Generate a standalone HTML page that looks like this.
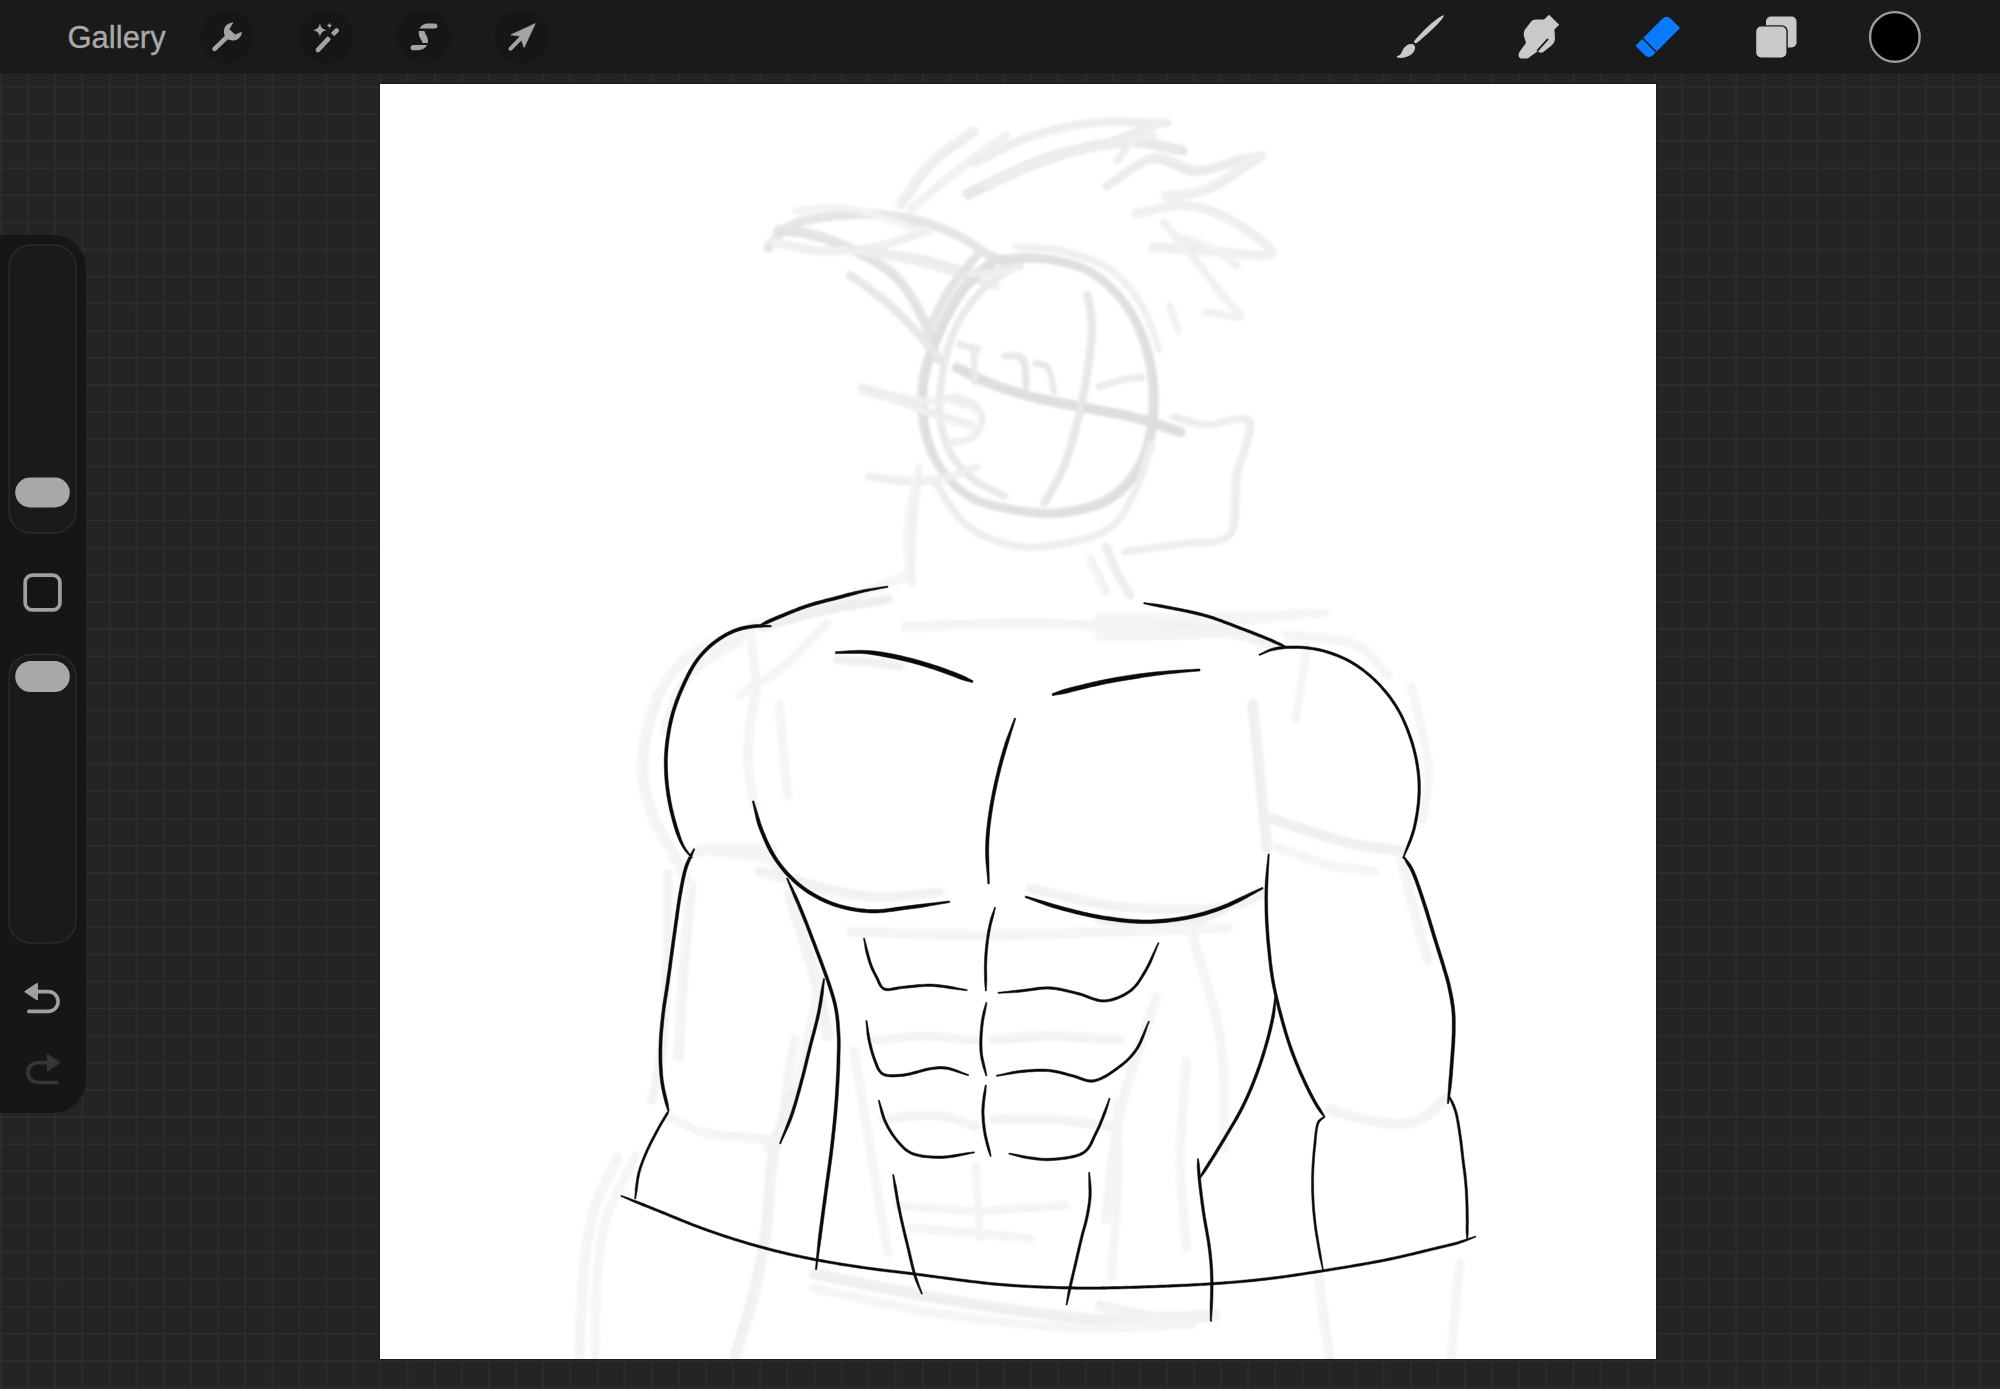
<!DOCTYPE html>
<html><head><meta charset="utf-8">
<style>
html,body{margin:0;padding:0;width:2000px;height:1389px;overflow:hidden;background:#242424;}
svg{position:absolute;left:0;top:0;display:block;}
.t{position:absolute;left:67.5px;top:19.6px;-webkit-text-stroke:0.35px #a9a9a9;font-family:"Liberation Sans",sans-serif;font-size:31px;color:#a9a9a9;line-height:36px;}
</style></head><body>
<svg width="2000" height="1389" viewBox="0 0 2000 1389">
<rect x="0" y="0" width="2000" height="1389" fill="#242424"/>
<path d="M1.1 74V1389M28.2 74V1389M55.3 74V1389M82.4 74V1389M109.5 74V1389M136.6 74V1389M163.7 74V1389M190.8 74V1389M217.9 74V1389M245.1 74V1389M272.2 74V1389M299.3 74V1389M326.4 74V1389M353.5 74V1389M380.6 74V1389M407.7 74V1389M434.8 74V1389M461.9 74V1389M489.0 74V1389M516.2 74V1389M543.3 74V1389M570.4 74V1389M597.5 74V1389M624.6 74V1389M651.7 74V1389M678.8 74V1389M705.9 74V1389M733.0 74V1389M760.1 74V1389M787.2 74V1389M814.4 74V1389M841.5 74V1389M868.6 74V1389M895.7 74V1389M922.8 74V1389M949.9 74V1389M977.0 74V1389M1004.1 74V1389M1031.2 74V1389M1058.3 74V1389M1085.5 74V1389M1112.6 74V1389M1139.7 74V1389M1166.8 74V1389M1193.9 74V1389M1221.0 74V1389M1248.1 74V1389M1275.2 74V1389M1302.3 74V1389M1329.5 74V1389M1356.6 74V1389M1383.7 74V1389M1410.8 74V1389M1437.9 74V1389M1465.0 74V1389M1492.1 74V1389M1519.2 74V1389M1546.3 74V1389M1573.4 74V1389M1600.6 74V1389M1627.7 74V1389M1654.8 74V1389M1681.9 74V1389M1709.0 74V1389M1736.1 74V1389M1763.2 74V1389M1790.3 74V1389M1817.4 74V1389M1844.5 74V1389M1871.7 74V1389M1898.8 74V1389M1925.9 74V1389M1953.0 74V1389M1980.1 74V1389M0 86.8H2000M0 113.9H2000M0 141.0H2000M0 168.1H2000M0 195.2H2000M0 222.4H2000M0 249.5H2000M0 276.6H2000M0 303.7H2000M0 330.8H2000M0 357.9H2000M0 385.0H2000M0 412.1H2000M0 439.2H2000M0 466.3H2000M0 493.4H2000M0 520.6H2000M0 547.7H2000M0 574.8H2000M0 601.9H2000M0 629.0H2000M0 656.1H2000M0 683.2H2000M0 710.3H2000M0 737.4H2000M0 764.5H2000M0 791.7H2000M0 818.8H2000M0 845.9H2000M0 873.0H2000M0 900.1H2000M0 927.2H2000M0 954.3H2000M0 981.4H2000M0 1008.5H2000M0 1035.7H2000M0 1062.8H2000M0 1089.9H2000M0 1117.0H2000M0 1144.1H2000M0 1171.2H2000M0 1198.3H2000M0 1225.4H2000M0 1252.5H2000M0 1279.6H2000M0 1306.8H2000M0 1333.9H2000M0 1361.0H2000M0 1388.1H2000" stroke="#2d2d2d" stroke-width="1.8" fill="none"/>
<rect x="0" y="0" width="2000" height="73.5" fill="#1a1a1a"/>
<rect x="378.8" y="82.8" width="1278.4" height="1277.4" fill="#1c1c1c"/>
<rect x="380" y="84" width="1276" height="1275" fill="#ffffff"/>
<defs><clipPath id="cv"><rect x="380" y="84" width="1276" height="1275"/></clipPath><filter id="bl" x="-5%" y="-5%" width="110%" height="110%"><feGaussianBlur stdDeviation="1.6"/></filter></defs>
<g clip-path="url(#cv)"><g filter="url(#bl)"><path d="M767.8,248.5 771.9,244.0 775.7,239.2 779.7,234.6 784.1,230.4 789.6,226.7 794.2,224.6 799.3,222.7 804.9,221.0 810.9,219.6 817.2,218.4 823.6,217.4 830.1,216.5 836.5,215.8 842.9,215.3 849.0,214.8 855.3,214.5 861.6,214.4 868.0,214.4 874.4,214.7 880.7,215.1 887.1,215.6 893.3,216.4 899.4,217.2 905.4,218.2 911.6,219.4 917.8,220.9 923.9,222.6 930.0,224.4 935.9,226.4 941.8,228.6 947.5,230.9 953.1,233.4 958.7,236.0 964.3,239.1 969.9,242.5 975.3,246.0 980.6,249.6 985.7,252.9 990.7,255.9 995.5,258.4 1001.8,260.9 1007.7,262.9 1013.4,264.5 1019.3,266.3 1019.3,266.3" stroke="#e1e1e1" stroke-width="8.4" fill="none" stroke-linecap="round" stroke-linejoin="round"/><path d="M767.0,247.0 771.1,242.4 774.9,237.7 778.9,233.1 783.4,228.8 788.8,225.2 793.4,223.0 798.5,221.1 804.1,219.5 810.1,218.1 816.4,216.9 822.8,215.9 829.3,215.0 835.8,214.3 842.1,213.7 848.2,213.3 854.5,213.0 860.8,212.9 867.2,212.9 873.6,213.1 880.0,213.5 886.3,214.1 892.5,214.8 898.7,215.7 904.7,216.7 910.8,217.9 917.0,219.4 923.2,221.0 929.2,222.9 935.1,224.9 941.0,227.1 946.7,229.4 952.3,231.8 958.0,234.5 963.6,237.5 969.1,240.9 974.5,244.5 979.8,248.0 984.9,251.4 989.9,254.4 994.7,256.9 1001.0,259.4 1006.9,261.3 1012.7,263.0 1018.5,264.8 1018.5,264.8" stroke="#e6e6e6" stroke-width="7.2" fill="none" stroke-linecap="round" stroke-linejoin="round"/><path d="M777.7,230.7 784.0,231.3 790.2,231.9 796.4,232.4 802.8,233.3 809.4,234.6 814.9,236.1 820.6,237.7 826.5,239.6 832.4,241.7 838.4,244.0 844.3,246.5 850.1,249.1 855.6,251.8 861.0,254.5 866.4,257.3 871.9,260.3 877.2,263.4 882.4,266.8 887.4,270.3 892.1,274.1 896.5,278.2 900.6,282.6 904.4,287.4 908.1,292.5 911.5,297.8 914.7,303.2 917.6,308.6 920.4,314.0 923.0,319.2 925.6,324.8 928.0,330.7 929.9,336.7 931.7,342.6 933.4,348.5 935.1,354.4 936.1,357.4" stroke="#dfdfdf" stroke-width="8.4" fill="none" stroke-linecap="round" stroke-linejoin="round"/><path d="M778.4,228.8 784.7,229.4 790.9,230.0 797.1,230.6 803.5,231.4 810.1,232.7 815.6,234.2 821.3,235.8 827.2,237.7 833.1,239.8 839.0,242.1 845.0,244.6 850.8,247.2 856.3,249.9 861.7,252.6 867.1,255.4 872.5,258.4 877.9,261.6 883.1,264.9 888.1,268.5 892.8,272.2 897.2,276.3 901.2,280.7 905.1,285.5 908.7,290.6 912.1,295.9 915.3,301.3 918.3,306.7 921.1,312.1 923.7,317.3 926.3,322.9 928.6,328.9 930.6,334.8 932.4,340.7 934.1,346.6 935.8,352.5 936.8,355.5" stroke="#e4e4e4" stroke-width="7.2" fill="none" stroke-linecap="round" stroke-linejoin="round"/><path d="M773.8,242.5 779.7,243.6 785.5,244.8 791.4,246.0 797.3,247.2 803.2,248.3 809.1,249.3 815.1,250.0 821.3,250.5 827.3,250.7 833.3,250.7 839.5,250.6 845.8,250.3 852.0,249.8 858.3,249.2 864.5,248.5 870.7,247.6 876.7,246.5 882.9,245.2 889.0,243.6 895.1,241.8 901.1,239.8 907.1,237.8 913.1,235.7 919.1,233.6 925.2,231.6 928.2,230.7" stroke="#ebebeb" stroke-width="8.4" fill="none" stroke-linecap="round" stroke-linejoin="round"/><path d="M773.9,242.0 779.8,243.0 785.7,244.2 791.6,245.4 797.4,246.6 803.3,247.7 809.3,248.7 815.3,249.4 821.4,249.9 827.4,250.1 833.5,250.1 839.7,250.0 845.9,249.7 852.2,249.2 858.5,248.6 864.7,247.9 870.8,247.0 876.9,245.9 883.1,244.6 889.2,243.0 895.3,241.2 901.3,239.2 907.3,237.2 913.3,235.1 919.3,233.0 925.3,231.0 928.3,230.1" stroke="#f0f0f0" stroke-width="7.2" fill="none" stroke-linecap="round" stroke-linejoin="round"/><path d="M797.5,210.9 803.6,210.1 809.5,209.2 815.5,208.3 821.5,207.5 827.7,206.9 833.9,206.8 840.0,207.1 846.0,207.9 852.2,209.0 858.5,210.4 864.9,212.0 871.1,213.6 877.3,215.4 883.1,217.1 888.6,218.8 894.9,220.8 900.7,223.0 906.3,225.2 911.9,227.4 917.4,229.6 920.3,230.7" stroke="#eeeeee" stroke-width="7.0" fill="none" stroke-linecap="round" stroke-linejoin="round"/><path d="M795.6,210.9 801.6,210.2 807.6,209.3 813.6,208.3 819.6,207.5 825.7,207.0 832.0,206.8 838.1,207.2 844.0,207.9 850.3,209.0 856.6,210.4 862.9,212.0 869.2,213.7 875.3,215.4 881.2,217.2 886.6,218.8 892.9,220.9 898.8,223.0 904.4,225.2 909.9,227.4 915.5,229.6 918.3,230.7" stroke="#f3f3f3" stroke-width="6.0" fill="none" stroke-linecap="round" stroke-linejoin="round"/><path d="M849.0,250.5 855.0,251.4 861.0,252.2 867.0,253.0 873.0,253.8 879.1,254.7 885.1,255.6 891.2,256.6 897.4,257.8 903.4,259.0 909.3,260.4 915.4,261.8 921.6,263.4 927.8,265.0 934.0,266.7 940.1,268.4 946.0,270.1 951.8,271.8 957.2,273.4 963.2,275.2 969.4,277.2 975.4,279.2 981.1,281.2 986.8,283.1 992.6,285.1 995.5,286.1" stroke="#e9e9e9" stroke-width="7.0" fill="none" stroke-linecap="round" stroke-linejoin="round"/><path d="M847.0,250.2 853.0,251.1 859.0,251.9 865.0,252.7 871.0,253.5 877.0,254.4 883.1,255.3 889.2,256.3 895.3,257.5 901.3,258.7 907.3,260.1 913.4,261.5 919.6,263.1 925.8,264.8 932.0,266.4 938.0,268.1 944.0,269.8 949.7,271.5 955.2,273.1 961.1,274.9 967.4,276.9 973.3,278.9 979.1,280.9 984.8,282.9 990.5,284.8 993.5,285.8" stroke="#eeeeee" stroke-width="6.0" fill="none" stroke-linecap="round" stroke-linejoin="round"/><path d="M901.0,205.0 904.6,200.0 908.2,194.9 911.7,189.8 915.2,184.6 918.8,179.5 922.5,174.6 926.3,169.8 930.4,165.2 934.7,160.9 939.3,156.8 944.1,153.0 949.0,149.3 954.1,145.7 959.3,142.2 964.4,138.7 969.5,135.1 974.5,131.5 974.5,131.5" stroke="#ebebeb" stroke-width="8.4" fill="none" stroke-linecap="round" stroke-linejoin="round"/><path d="M899.1,203.2 902.7,198.2 906.3,193.1 909.8,188.0 913.3,182.8 916.9,177.7 920.6,172.8 924.4,168.0 928.5,163.4 932.8,159.1 937.4,155.0 942.2,151.2 947.2,147.5 952.2,143.9 957.4,140.4 962.5,136.9 967.6,133.3 972.6,129.7 972.6,129.7" stroke="#f0f0f0" stroke-width="7.2" fill="none" stroke-linecap="round" stroke-linejoin="round"/><path d="M911.5,209.2 916.1,205.2 920.7,201.3 925.3,197.3 929.8,193.3 934.4,189.3 939.0,185.3 943.7,181.4 948.6,177.4 953.5,173.5 958.2,169.9 963.0,166.2 968.0,162.6 973.0,159.0 978.0,155.4 983.1,151.9 988.2,148.3 993.3,144.7 998.4,141.1 1003.5,137.5 1006.0,135.7" stroke="#ededed" stroke-width="8.4" fill="none" stroke-linecap="round" stroke-linejoin="round"/><path d="M911.2,210.6 915.8,206.7 920.4,202.7 924.9,198.7 929.5,194.7 934.1,190.8 938.7,186.8 943.4,182.8 948.2,178.9 953.2,174.9 957.9,171.3 962.7,167.7 967.6,164.1 972.6,160.5 977.7,156.9 982.8,153.3 987.9,149.7 993.0,146.1 998.1,142.5 1003.2,138.9 1005.7,137.1" stroke="#f2f2f2" stroke-width="7.2" fill="none" stroke-linecap="round" stroke-linejoin="round"/><path d="M968.2,194.5 973.8,191.9 979.5,189.1 985.3,186.4 991.0,183.6 996.7,180.9 1002.4,178.2 1008.1,175.5 1013.6,173.0 1019.1,170.6 1024.4,168.3 1030.2,165.9 1036.2,163.5 1042.1,161.2 1047.8,159.1 1053.5,157.1 1059.5,155.2 1065.7,153.4 1071.7,151.8 1077.3,150.4 1083.2,149.0 1089.2,147.6 1095.4,146.4 1101.6,145.2 1107.9,144.1 1114.1,143.2 1120.2,142.6 1126.2,142.1 1132.0,142.0 1138.2,142.2 1144.2,142.8 1150.2,143.7 1156.1,144.8 1161.9,146.1 1167.7,147.4 1173.6,148.7 1179.4,149.9 1182.4,150.4" stroke="#e3e3e3" stroke-width="9.8" fill="none" stroke-linecap="round" stroke-linejoin="round"/><path d="M966.5,193.3 972.2,190.6 977.9,187.9 983.6,185.2 989.3,182.4 995.1,179.7 1000.8,177.0 1006.4,174.3 1012.0,171.8 1017.4,169.3 1022.7,167.1 1028.5,164.7 1034.6,162.3 1040.4,160.0 1046.1,157.8 1051.9,155.8 1057.8,153.9 1064.1,152.1 1070.1,150.6 1075.7,149.2 1081.5,147.8 1087.6,146.4 1093.7,145.1 1100.0,143.9 1106.2,142.9 1112.5,142.0 1118.6,141.4 1124.6,140.9 1130.3,140.8 1136.5,141.0 1142.6,141.6 1148.5,142.5 1154.4,143.6 1160.3,144.9 1166.1,146.2 1171.9,147.5 1177.8,148.7 1180.7,149.2" stroke="#e8e8e8" stroke-width="8.4" fill="none" stroke-linecap="round" stroke-linejoin="round"/><path d="M985.0,184.0 990.7,181.5 996.4,178.9 1002.1,176.2 1007.8,173.6 1013.5,170.9 1019.2,168.3 1024.9,165.7 1030.7,163.3 1036.4,160.9 1042.2,158.7 1048.0,156.7 1054.0,154.9 1060.1,153.3 1066.3,151.8 1072.5,150.5 1078.7,149.3 1084.9,148.1 1091.0,146.9 1096.9,145.7 1102.7,144.3 1108.3,142.8 1114.1,141.0 1120.0,138.9 1125.7,136.7 1131.2,134.4 1136.7,132.1 1142.1,129.8 1147.5,127.5 1153.0,125.2 1153.0,125.2" stroke="#e9e9e9" stroke-width="8.4" fill="none" stroke-linecap="round" stroke-linejoin="round"/><path d="M985.6,186.0 991.3,183.4 997.0,180.8 1002.7,178.2 1008.4,175.5 1014.1,172.9 1019.8,170.2 1025.5,167.7 1031.2,165.2 1037.0,162.9 1042.8,160.7 1048.6,158.7 1054.5,156.8 1060.7,155.2 1066.8,153.8 1073.1,152.5 1079.3,151.3 1085.4,150.1 1091.5,148.9 1097.5,147.6 1103.3,146.3 1108.9,144.8 1114.6,143.0 1120.6,140.9 1126.3,138.7 1131.8,136.4 1137.2,134.1 1142.6,131.8 1148.0,129.4 1153.6,127.2 1153.6,127.2" stroke="#eeeeee" stroke-width="7.2" fill="none" stroke-linecap="round" stroke-linejoin="round"/><path d="M974.5,163.0 980.0,160.3 985.4,157.5 990.8,154.7 996.2,151.8 1001.7,149.0 1007.1,146.3 1012.7,143.6 1018.3,141.2 1024.1,138.9 1029.8,136.8 1035.5,134.9 1041.3,133.2 1047.1,131.5 1053.1,129.9 1059.0,128.5 1065.1,127.1 1071.2,125.9 1077.4,124.8 1083.7,123.9 1090.0,123.1 1095.9,122.5 1101.9,122.1 1108.0,121.9 1114.2,121.9 1120.4,121.9 1126.7,122.0 1133.0,122.2 1139.4,122.4 1145.7,122.6 1152.0,122.8 1158.3,123.0 1164.6,123.1 1167.7,123.1" stroke="#e9e9e9" stroke-width="8.4" fill="none" stroke-linecap="round" stroke-linejoin="round"/><path d="M974.8,162.5 980.3,159.8 985.8,157.0 991.2,154.2 996.6,151.4 1002.0,148.6 1007.5,145.8 1013.0,143.2 1018.7,140.7 1024.4,138.4 1030.2,136.4 1035.9,134.5 1041.6,132.7 1047.5,131.0 1053.4,129.5 1059.4,128.0 1065.4,126.7 1071.6,125.5 1077.8,124.4 1084.0,123.4 1090.3,122.6 1096.2,122.1 1102.3,121.7 1108.4,121.5 1114.5,121.4 1120.8,121.4 1127.0,121.6 1133.4,121.7 1139.7,121.9 1146.0,122.2 1152.4,122.4 1158.7,122.5 1164.9,122.6 1168.0,122.6" stroke="#eeeeee" stroke-width="7.2" fill="none" stroke-linecap="round" stroke-linejoin="round"/><path d="M1106.8,186.1 1112.2,182.6 1117.7,178.8 1123.1,174.7 1128.5,170.7 1134.0,167.0 1139.4,163.7 1144.8,161.0 1150.3,159.3 1156.0,158.7 1162.0,159.6 1168.0,161.6 1174.0,164.3 1180.0,167.2 1186.0,169.6 1192.0,171.1 1198.0,171.3 1204.2,170.6 1210.5,169.1 1216.7,167.2 1222.9,165.2 1228.8,163.2 1234.4,161.5 1240.6,160.1 1247.4,158.9 1253.7,157.8 1260.1,156.7 1260.1,156.7" stroke="#e7e7e7" stroke-width="8.4" fill="none" stroke-linecap="round" stroke-linejoin="round"/><path d="M1108.9,184.1 1114.3,180.6 1119.8,176.8 1125.2,172.7 1130.6,168.7 1136.1,165.0 1141.5,161.7 1146.9,159.0 1152.4,157.3 1158.1,156.7 1164.1,157.6 1170.1,159.6 1176.1,162.3 1182.1,165.2 1188.1,167.6 1194.1,169.1 1200.1,169.3 1206.3,168.6 1212.6,167.1 1218.8,165.2 1225.0,163.2 1230.9,161.2 1236.5,159.5 1242.7,158.1 1249.5,156.9 1255.8,155.8 1262.2,154.7 1262.2,154.7" stroke="#ececec" stroke-width="7.2" fill="none" stroke-linecap="round" stroke-linejoin="round"/><path d="M1117.3,160.9 1121.3,155.1 1125.2,149.2 1129.5,144.0 1134.6,140.5 1140.5,138.5 1146.8,137.2 1153.0,135.7 1153.0,135.7" stroke="#ebebeb" stroke-width="7.0" fill="none" stroke-linecap="round" stroke-linejoin="round"/><path d="M1118.9,160.0 1122.9,154.2 1126.8,148.3 1131.1,143.1 1136.2,139.6 1142.1,137.6 1148.4,136.2 1154.6,134.8 1154.6,134.8" stroke="#f0f0f0" stroke-width="6.0" fill="none" stroke-linecap="round" stroke-linejoin="round"/><path d="M1165.6,196.6 1171.7,195.8 1177.8,195.2 1183.9,194.7 1190.0,194.0 1196.1,192.9 1202.4,191.4 1208.0,189.3 1213.2,187.0 1218.4,184.3 1223.6,181.2 1228.9,177.9 1234.2,174.4 1239.5,170.9 1244.8,167.3 1250.1,163.8 1255.4,160.4 1258.0,158.8" stroke="#ebebeb" stroke-width="8.4" fill="none" stroke-linecap="round" stroke-linejoin="round"/><path d="M1164.0,194.9 1170.1,194.1 1176.2,193.5 1182.3,193.0 1188.4,192.3 1194.6,191.3 1200.8,189.7 1206.5,187.6 1211.6,185.3 1216.8,182.6 1222.0,179.5 1227.3,176.2 1232.6,172.8 1237.9,169.2 1243.2,165.6 1248.5,162.1 1253.8,158.7 1256.4,157.1" stroke="#f0f0f0" stroke-width="7.2" fill="none" stroke-linecap="round" stroke-linejoin="round"/><path d="M1136.2,213.4 1142.3,212.2 1148.4,210.8 1154.5,209.3 1160.6,207.8 1166.7,206.5 1172.7,205.5 1178.7,205.0 1184.5,205.0 1190.7,205.6 1196.8,206.6 1202.8,208.1 1208.8,210.0 1214.7,212.2 1220.6,214.7 1226.5,217.6 1232.0,220.6 1238.2,224.3 1244.8,228.5 1251.5,233.0 1257.8,237.6 1263.5,242.0 1268.1,246.0 1271.3,249.6 1272.7,252.3 1272.1,254.1 1269.2,255.1 1264.4,255.5 1258.2,255.3 1250.9,254.7 1243.0,253.9 1234.8,252.9 1226.8,252.1 1219.4,251.4 1213.1,251.0 1207.2,250.7 1201.2,250.3 1195.2,250.0 1189.2,249.5 1183.2,249.1 1177.1,248.7 1171.1,248.3 1165.0,247.8 1159.0,247.4 1153.0,247.0 1153.0,247.0" stroke="#ebebeb" stroke-width="8.4" fill="none" stroke-linecap="round" stroke-linejoin="round"/><path d="M1135.4,214.8 1141.4,213.6 1147.5,212.2 1153.6,210.7 1159.8,209.2 1165.8,207.9 1171.9,206.9 1177.8,206.4 1183.7,206.4 1189.9,207.0 1196.0,208.0 1202.0,209.5 1208.0,211.4 1213.9,213.6 1219.8,216.1 1225.7,219.0 1231.1,222.0 1237.4,225.7 1244.0,229.9 1250.6,234.4 1257.0,238.9 1262.6,243.4 1267.2,247.4 1270.4,250.9 1271.9,253.7 1271.2,255.5 1268.3,256.5 1263.5,256.8 1257.3,256.6 1250.0,256.1 1242.1,255.3 1233.9,254.3 1226.0,253.5 1218.5,252.8 1212.2,252.4 1206.3,252.1 1200.4,251.7 1194.4,251.3 1188.4,250.9 1182.4,250.5 1176.3,250.1 1170.3,249.7 1164.2,249.2 1158.2,248.8 1152.2,248.4 1152.2,248.4" stroke="#f0f0f0" stroke-width="7.2" fill="none" stroke-linecap="round" stroke-linejoin="round"/><path d="M1163.5,221.8 1167.4,226.5 1171.4,231.2 1175.3,235.9 1179.3,240.6 1183.2,245.3 1187.2,250.0 1191.1,254.8 1195.0,259.6 1199.0,264.6 1203.2,269.9 1207.3,275.2 1211.5,280.6 1215.5,285.8 1219.4,290.7 1223.1,295.3 1226.5,299.5 1232.2,305.4 1237.8,310.7 1241.1,314.9 1240.2,317.0 1235.8,317.2 1229.1,316.3 1221.0,314.8 1212.8,313.2 1205.5,312.1 1205.5,312.1" stroke="#ededed" stroke-width="7.0" fill="none" stroke-linecap="round" stroke-linejoin="round"/><path d="M1162.1,222.2 1166.0,226.9 1170.0,231.6 1173.9,236.3 1177.9,241.0 1181.8,245.7 1185.8,250.4 1189.7,255.2 1193.6,260.0 1197.6,265.0 1201.8,270.2 1205.9,275.6 1210.1,280.9 1214.1,286.1 1218.0,291.1 1221.7,295.7 1225.1,299.9 1230.8,305.7 1236.4,311.1 1239.7,315.3 1238.8,317.3 1234.4,317.6 1227.7,316.7 1219.6,315.2 1211.4,313.6 1204.1,312.5 1204.1,312.5" stroke="#f2f2f2" stroke-width="6.0" fill="none" stroke-linecap="round" stroke-linejoin="round"/><path d="M1169.8,305.8 1171.9,312.1 1174.0,318.4 1176.1,324.7 1178.2,331.0 1178.2,331.0" stroke="#ededed" stroke-width="7.0" fill="none" stroke-linecap="round" stroke-linejoin="round"/><path d="M1170.4,305.2 1172.5,311.5 1174.6,317.8 1176.7,324.1 1178.8,330.4 1178.8,330.4" stroke="#f2f2f2" stroke-width="6.0" fill="none" stroke-linecap="round" stroke-linejoin="round"/><path d="M1184.5,238.6 1190.3,240.8 1196.3,243.0 1202.2,245.2 1208.0,247.4 1213.4,249.9 1218.9,252.9 1224.3,256.5 1229.4,260.2 1234.4,264.0 1237.0,265.9" stroke="#eeeeee" stroke-width="7.0" fill="none" stroke-linecap="round" stroke-linejoin="round"/><path d="M1184.7,236.7 1190.5,238.9 1196.5,241.1 1202.4,243.2 1208.2,245.5 1213.6,248.0 1219.1,250.9 1224.5,254.5 1229.6,258.3 1234.6,262.1 1237.2,264.0" stroke="#f3f3f3" stroke-width="6.0" fill="none" stroke-linecap="round" stroke-linejoin="round"/><path d="M997.3,258.5 992.8,262.5 988.2,266.4 983.6,270.3 979.0,274.2 974.5,278.2 970.1,282.4 966.0,287.0 962.3,291.7 958.9,296.5 955.7,301.5 952.6,306.7 949.6,312.1 946.7,317.6 944.0,323.2 941.5,328.7 939.1,334.2 936.7,339.8 934.3,345.7 932.1,351.6 930.0,357.5 928.2,363.5 926.5,369.4 925.1,375.4 924.1,381.4 923.3,387.6 922.9,394.0 922.7,400.5 922.9,407.0 923.3,413.5 924.0,419.8 924.9,426.0 926.0,431.9 927.6,438.4 929.4,444.6 931.6,450.7 934.1,456.5 937.0,462.2 940.3,467.6 943.8,472.6 947.6,477.4 951.7,482.1 956.2,486.6 961.0,490.7 966.1,494.4 971.3,497.5 976.7,500.1 982.4,502.3 988.4,504.2 994.5,505.9 1000.8,507.4 1007.1,508.7 1013.3,509.8 1019.4,510.9 1025.8,511.8 1032.1,512.6 1038.5,513.2 1044.8,513.5 1051.2,513.5 1057.5,513.3 1063.8,512.7 1069.9,511.9 1076.1,510.9 1082.4,509.6 1088.6,508.1 1094.7,506.2 1100.6,504.0 1106.2,501.4 1111.3,498.5 1116.4,494.9 1121.2,490.9 1125.7,486.4 1130.0,481.6 1133.9,476.5 1137.5,471.2 1140.8,465.7 1143.5,460.2 1145.7,454.7 1147.7,448.9 1149.3,442.9 1150.7,436.7 1151.9,430.4 1152.8,424.0 1153.5,417.6 1153.9,411.3 1154.2,405.1 1154.3,398.9 1154.1,392.5 1153.7,386.1 1153.1,379.7 1152.3,373.3 1151.3,367.0 1150.0,360.7 1148.6,354.7 1147.0,348.8 1145.0,342.7 1142.8,336.7 1140.4,330.8 1137.7,325.0 1134.9,319.3 1131.8,313.9 1128.5,308.6 1125.0,303.7 1121.2,298.8 1117.1,293.9 1112.7,289.3 1108.1,284.9 1103.2,280.7 1098.2,276.9 1093.0,273.4 1087.6,270.4 1082.1,267.9 1076.4,265.7 1070.3,263.9 1064.1,262.3 1057.9,261.0 1051.8,260.0 1045.8,259.2 1040.1,258.5 1033.3,258.1 1026.8,258.2 1020.4,258.6 1014.0,259.1 1007.7,259.6 1004.4,259.7" stroke="#dbdbdb" stroke-width="8.4" fill="none" stroke-linecap="round" stroke-linejoin="round"/><path d="M995.4,257.2 990.9,261.2 986.3,265.1 981.6,269.0 977.0,272.9 972.5,276.9 968.2,281.2 964.1,285.7 960.4,290.4 957.0,295.2 953.7,300.2 950.6,305.4 947.6,310.8 944.8,316.3 942.1,321.9 939.5,327.4 937.1,332.9 934.8,338.5 932.4,344.4 930.2,350.3 928.1,356.2 926.2,362.2 924.6,368.1 923.2,374.1 922.1,380.1 921.4,386.3 920.9,392.7 920.8,399.2 920.9,405.7 921.3,412.2 922.0,418.5 922.9,424.7 924.1,430.7 925.6,437.1 927.5,443.3 929.7,449.4 932.2,455.2 935.1,460.9 938.3,466.3 941.8,471.3 945.6,476.1 949.8,480.8 954.3,485.3 959.1,489.4 964.2,493.1 969.4,496.2 974.7,498.8 980.4,501.0 986.4,502.9 992.6,504.6 998.9,506.1 1005.2,507.4 1011.3,508.5 1017.5,509.6 1023.8,510.5 1030.2,511.3 1036.5,511.9 1042.9,512.2 1049.3,512.3 1055.6,512.0 1061.9,511.4 1068.0,510.6 1074.2,509.6 1080.5,508.3 1086.7,506.8 1092.8,504.9 1098.7,502.7 1104.2,500.2 1109.4,497.2 1114.4,493.6 1119.2,489.6 1123.8,485.1 1128.0,480.3 1132.0,475.2 1135.6,469.9 1138.8,464.4 1141.5,458.9 1143.8,453.4 1145.7,447.6 1147.4,441.6 1148.8,435.4 1149.9,429.1 1150.8,422.7 1151.5,416.3 1152.0,410.0 1152.3,403.8 1152.3,397.6 1152.2,391.2 1151.8,384.8 1151.2,378.4 1150.4,372.0 1149.3,365.7 1148.1,359.4 1146.7,353.4 1145.0,347.5 1143.1,341.4 1140.9,335.4 1138.5,329.5 1135.8,323.7 1132.9,318.1 1129.8,312.6 1126.6,307.4 1123.1,302.4 1119.3,297.5 1115.2,292.6 1110.8,288.0 1106.1,283.6 1101.3,279.4 1096.3,275.6 1091.0,272.2 1085.6,269.1 1080.2,266.6 1074.4,264.4 1068.4,262.6 1062.2,261.0 1056.0,259.8 1049.8,258.7 1043.8,257.9 1038.1,257.2 1031.4,256.8 1024.8,256.9 1018.4,257.3 1012.1,257.8 1005.7,258.3 1002.5,258.4" stroke="#e0e0e0" stroke-width="7.2" fill="none" stroke-linecap="round" stroke-linejoin="round"/><path d="M1016.3,265.6 1011.1,269.2 1005.8,272.6 1000.5,276.0 995.3,279.5 990.2,283.2 985.3,287.2 980.9,291.6 976.7,296.1 972.6,300.9 968.7,306.0 965.0,311.2 961.5,316.6 958.4,322.2 955.6,327.7 953.2,333.3 951.0,339.1 949.1,345.1 947.3,351.1 945.8,357.3 944.4,363.4 943.2,369.5 942.1,375.7 941.2,382.1 940.4,388.6 939.8,395.1 939.5,401.6 939.4,407.9 939.7,414.1 940.3,420.1 941.4,426.5 942.8,432.8 944.7,438.9 946.8,444.8 949.3,450.4 952.2,455.7 955.7,461.1 959.6,466.2 963.9,470.9 968.6,475.3 973.5,479.5 978.6,483.0 984.1,486.1 989.9,489.0 995.8,491.8 1001.6,494.6 1004.4,496.1" stroke="#e5e5e5" stroke-width="7.0" fill="none" stroke-linecap="round" stroke-linejoin="round"/><path d="M1017.1,265.3 1011.9,268.9 1006.6,272.3 1001.3,275.7 996.1,279.2 991.0,282.9 986.1,286.9 981.7,291.3 977.4,295.8 973.4,300.6 969.5,305.6 965.8,310.9 962.3,316.3 959.2,321.9 956.4,327.4 954.0,333.0 951.8,338.8 949.9,344.8 948.1,350.8 946.6,357.0 945.2,363.1 944.0,369.2 942.9,375.4 942.0,381.8 941.2,388.3 940.6,394.8 940.3,401.3 940.2,407.6 940.5,413.8 941.1,419.7 942.2,426.2 943.6,432.5 945.5,438.6 947.6,444.5 950.1,450.1 953.0,455.4 956.5,460.8 960.4,465.9 964.7,470.6 969.4,475.0 974.3,479.1 979.4,482.7 984.9,485.8 990.7,488.7 996.6,491.5 1002.4,494.3 1005.2,495.8" stroke="#eaeaea" stroke-width="6.0" fill="none" stroke-linecap="round" stroke-linejoin="round"/><path d="M933.2,479.5 936.8,484.6 940.4,490.0 943.9,495.4 947.3,500.9 950.9,506.3 954.5,511.5 958.3,516.5 962.3,521.0 966.5,525.1 971.2,528.8 976.3,532.1 981.7,535.0 987.3,537.6 993.0,539.9 998.8,541.9 1004.7,543.5 1010.5,544.9 1016.3,546.0 1022.6,546.8 1028.9,547.2 1035.3,547.1 1041.6,546.8 1048.0,546.2 1054.4,545.3 1060.7,544.2 1066.9,543.0 1073.1,541.7 1079.5,540.2 1085.9,538.6 1092.2,536.6 1098.2,534.3 1103.9,531.7 1109.0,528.7 1113.6,525.0 1117.8,520.8 1121.6,516.0 1124.9,510.9 1128.0,505.4 1130.9,499.8 1133.7,494.2 1136.4,488.6 1138.8,483.0 1141.0,477.2 1143.0,471.2 1145.0,465.1 1146.8,459.0 1148.7,452.9 1150.7,446.8 1151.7,443.8" stroke="#e9e9e9" stroke-width="7.0" fill="none" stroke-linecap="round" stroke-linejoin="round"/><path d="M932.3,479.8 936.0,485.0 939.6,490.3 943.0,495.8 946.5,501.3 950.0,506.7 953.7,511.9 957.4,516.9 961.4,521.4 965.7,525.5 970.4,529.1 975.5,532.4 980.9,535.4 986.5,538.0 992.2,540.3 998.0,542.2 1003.9,543.9 1009.7,545.3 1015.5,546.4 1021.8,547.2 1028.1,547.5 1034.4,547.5 1040.8,547.2 1047.2,546.5 1053.6,545.7 1059.9,544.6 1066.1,543.4 1072.3,542.1 1078.7,540.6 1085.1,538.9 1091.4,537.0 1097.4,534.7 1103.0,532.1 1108.2,529.0 1112.8,525.4 1117.0,521.1 1120.8,516.4 1124.1,511.2 1127.2,505.8 1130.1,500.2 1132.9,494.5 1135.6,489.0 1138.0,483.4 1140.2,477.5 1142.2,471.6 1144.1,465.5 1146.0,459.4 1147.9,453.2 1149.9,447.2 1150.9,444.2" stroke="#eeeeee" stroke-width="6.0" fill="none" stroke-linecap="round" stroke-linejoin="round"/><path d="M1016.3,246.6 1022.7,247.2 1029.0,247.5 1035.4,247.9 1041.8,248.3 1048.1,248.8 1054.4,249.6 1060.7,250.7 1066.7,252.1 1072.5,253.6 1078.4,255.4 1084.3,257.3 1090.1,259.4 1095.8,261.7 1101.3,264.3 1106.5,267.2 1111.3,270.4 1116.3,274.2 1121.0,278.5 1125.4,283.0 1129.6,287.9 1133.5,292.9 1137.2,298.1 1140.6,303.4 1143.7,308.7 1146.4,314.1 1148.8,319.7 1150.9,325.5 1152.9,331.3 1154.8,337.2 1156.7,343.0 1158.9,348.8 1158.9,348.8" stroke="#ebebeb" stroke-width="7.0" fill="none" stroke-linecap="round" stroke-linejoin="round"/><path d="M1016.1,245.7 1022.4,246.3 1028.8,246.7 1035.2,247.0 1041.5,247.4 1047.9,247.9 1054.2,248.7 1060.5,249.8 1066.5,251.2 1072.3,252.8 1078.2,254.5 1084.1,256.4 1089.9,258.5 1095.6,260.9 1101.1,263.5 1106.3,266.3 1111.1,269.5 1116.1,273.3 1120.8,277.6 1125.2,282.2 1129.4,287.0 1133.3,292.1 1137.0,297.2 1140.4,302.5 1143.5,307.8 1146.2,313.2 1148.6,318.8 1150.7,324.6 1152.7,330.4 1154.6,336.3 1156.5,342.1 1158.6,347.9 1158.6,347.9" stroke="#f0f0f0" stroke-width="6.0" fill="none" stroke-linecap="round" stroke-linejoin="round"/><path d="M956.9,367.8 962.3,370.4 967.7,373.0 973.0,375.7 978.4,378.3 983.9,380.8 989.6,383.3 995.3,385.5 1001.0,387.5 1006.8,389.4 1012.8,391.2 1018.8,393.0 1024.9,394.7 1031.0,396.4 1037.1,397.9 1043.0,399.4 1048.9,400.7 1054.9,402.0 1060.8,403.2 1066.8,404.3 1072.7,405.4 1078.7,406.5 1084.6,407.6 1090.6,408.8 1096.5,409.9 1102.5,411.0 1108.5,412.1 1114.4,413.2 1120.4,414.4 1126.3,415.6 1132.2,417.0 1138.1,418.5 1144.2,420.2 1150.2,422.1 1156.2,424.0 1162.1,426.0 1168.1,428.0 1174.0,430.0 1180.0,431.9 1180.0,431.9" stroke="#d9d9d9" stroke-width="9.8" fill="none" stroke-linecap="round" stroke-linejoin="round"/><path d="M958.2,368.7 963.6,371.3 969.0,373.9 974.3,376.6 979.7,379.2 985.2,381.7 990.9,384.1 996.6,386.3 1002.3,388.3 1008.1,390.3 1014.1,392.1 1020.1,393.9 1026.2,395.6 1032.3,397.2 1038.4,398.8 1044.3,400.3 1050.2,401.6 1056.2,402.9 1062.1,404.0 1068.1,405.1 1074.0,406.2 1080.0,407.3 1085.9,408.5 1091.8,409.6 1097.8,410.8 1103.8,411.9 1109.8,413.0 1115.7,414.1 1121.7,415.2 1127.6,416.5 1133.5,417.8 1139.4,419.4 1145.5,421.1 1151.5,423.0 1157.5,424.9 1163.4,426.9 1169.4,428.9 1175.3,430.9 1181.3,432.8 1181.3,432.8" stroke="#dedede" stroke-width="8.4" fill="none" stroke-linecap="round" stroke-linejoin="round"/><path d="M1099.5,386.8 1105.5,384.9 1111.5,382.9 1117.4,381.1 1123.2,379.7 1129.7,378.6 1136.0,378.0 1142.2,377.3 1142.2,377.3" stroke="#e7e7e7" stroke-width="7.0" fill="none" stroke-linecap="round" stroke-linejoin="round"/><path d="M1098.3,387.1 1104.3,385.2 1110.4,383.3 1116.3,381.5 1122.1,380.0 1128.6,378.9 1134.8,378.3 1141.1,377.6 1141.1,377.6" stroke="#ececec" stroke-width="6.0" fill="none" stroke-linecap="round" stroke-linejoin="round"/><path d="M959.3,344.0 965.6,345.6 972.0,347.2 978.3,348.8 978.3,348.8" stroke="#e5e5e5" stroke-width="5.6" fill="none" stroke-linecap="round" stroke-linejoin="round"/><path d="M959.4,345.7 965.7,347.3 972.1,348.9 978.4,350.4 978.4,350.4" stroke="#eaeaea" stroke-width="4.8" fill="none" stroke-linecap="round" stroke-linejoin="round"/><path d="M973.5,348.8 973.8,354.8 974.0,360.9 974.2,366.9 974.4,373.0 974.6,379.0 974.7,382.1" stroke="#e5e5e5" stroke-width="5.6" fill="none" stroke-linecap="round" stroke-linejoin="round"/><path d="M974.6,347.9 974.8,353.9 975.0,360.0 975.2,366.0 975.4,372.0 975.6,378.1 975.7,381.1" stroke="#eaeaea" stroke-width="4.8" fill="none" stroke-linecap="round" stroke-linejoin="round"/><path d="M1004.4,355.9 1011.6,356.1 1018.5,356.7 1022.4,360.2 1024.1,365.7 1024.8,372.6 1025.1,379.9 1025.8,386.8 1025.8,386.8" stroke="#e3e3e3" stroke-width="5.6" fill="none" stroke-linecap="round" stroke-linejoin="round"/><path d="M1006.5,354.2 1013.7,354.4 1020.6,355.1 1024.5,358.5 1026.2,364.0 1026.9,370.9 1027.2,378.2 1027.9,385.1 1027.9,385.1" stroke="#e8e8e8" stroke-width="4.8" fill="none" stroke-linecap="round" stroke-linejoin="round"/><path d="M1035.3,363.0 1041.6,364.1 1047.2,366.6 1049.8,371.2 1051.5,377.6 1052.8,384.8 1054.3,391.6 1054.3,391.6" stroke="#e3e3e3" stroke-width="5.6" fill="none" stroke-linecap="round" stroke-linejoin="round"/><path d="M1035.0,364.2 1041.2,365.3 1046.8,367.7 1049.4,372.3 1051.1,378.8 1052.5,385.9 1054.0,392.7 1054.0,392.7" stroke="#e8e8e8" stroke-width="4.8" fill="none" stroke-linecap="round" stroke-linejoin="round"/><path d="M1087.6,294.1 1088.7,300.2 1089.9,306.2 1091.0,312.2 1091.9,318.4 1092.3,325.0 1092.3,330.9 1092.0,337.0 1091.5,343.3 1090.8,349.8 1089.9,356.4 1089.0,362.9 1088.1,369.4 1087.1,375.5 1086.2,381.5 1085.1,387.4 1084.0,393.4 1082.8,399.3 1081.5,405.3 1080.2,411.2 1078.8,417.1 1077.3,423.1 1075.8,429.1 1074.2,435.2 1072.5,441.3 1070.8,447.4 1069.0,453.4 1067.0,459.2 1064.9,464.8 1062.6,470.5 1059.8,476.3 1056.9,481.8 1053.9,487.2 1050.9,492.5 1047.8,497.8 1044.8,503.2 1044.8,503.2" stroke="#e3e3e3" stroke-width="7.0" fill="none" stroke-linecap="round" stroke-linejoin="round"/><path d="M1086.0,294.1 1087.1,300.2 1088.3,306.1 1089.5,312.1 1090.3,318.4 1090.8,325.0 1090.8,330.8 1090.5,336.9 1090.0,343.3 1089.3,349.7 1088.4,356.3 1087.5,362.9 1086.5,369.3 1085.6,375.5 1084.6,381.4 1083.6,387.4 1082.5,393.3 1081.3,399.3 1080.0,405.2 1078.7,411.1 1077.3,417.1 1075.8,423.0 1074.3,429.1 1072.7,435.2 1071.0,441.3 1069.3,447.4 1067.4,453.3 1065.5,459.2 1063.4,464.8 1061.0,470.5 1058.3,476.2 1055.4,481.7 1052.4,487.1 1049.3,492.4 1046.3,497.8 1043.3,503.2 1043.3,503.2" stroke="#e8e8e8" stroke-width="6.0" fill="none" stroke-linecap="round" stroke-linejoin="round"/><path d="M952.2,396.3 958.6,398.0 965.2,399.6 971.1,401.8 975.9,405.6 980.2,411.1 982.8,417.2 982.4,422.9 979.1,429.1 974.1,434.9 968.8,439.1 962.4,440.9 955.6,441.2 952.2,441.4" stroke="#ebebeb" stroke-width="5.6" fill="none" stroke-linecap="round" stroke-linejoin="round"/><path d="M950.1,397.0 956.6,398.8 963.2,400.3 969.1,402.6 973.9,406.4 978.2,411.9 980.8,417.9 980.4,423.6 977.1,429.8 972.0,435.6 966.8,439.8 960.4,441.7 953.5,441.9 950.1,442.2" stroke="#f0f0f0" stroke-width="4.8" fill="none" stroke-linecap="round" stroke-linejoin="round"/><path d="M861.9,386.8 867.8,388.4 873.7,390.1 879.7,391.9 885.6,393.5 891.6,395.0 897.5,396.3 904.1,397.6 910.8,398.9 917.4,399.9 924.0,400.7 930.2,401.1 936.4,400.8 942.4,399.8 948.2,398.4 954.0,397.0 956.9,396.3" stroke="#ebebeb" stroke-width="7.0" fill="none" stroke-linecap="round" stroke-linejoin="round"/><path d="M863.0,387.1 869.0,388.8 874.9,390.5 880.8,392.2 886.8,393.8 892.7,395.3 898.7,396.6 905.2,397.9 911.9,399.2 918.6,400.3 925.1,401.0 931.4,401.4 937.5,401.2 943.6,400.2 949.4,398.8 955.1,397.3 958.1,396.6" stroke="#f0f0f0" stroke-width="6.0" fill="none" stroke-linecap="round" stroke-linejoin="round"/><path d="M871.4,477.1 877.7,478.0 883.9,479.1 890.1,480.1 896.4,481.0 902.8,481.7 909.4,481.8 915.2,481.6 921.4,481.1 927.8,480.3 934.2,479.4 940.5,478.3 946.5,477.1 952.0,475.9 956.9,474.7 963.9,472.5 969.9,470.0 975.9,467.6 975.9,467.6" stroke="#ebebeb" stroke-width="7.0" fill="none" stroke-linecap="round" stroke-linejoin="round"/><path d="M873.0,476.3 879.3,477.2 885.6,478.2 891.8,479.3 898.1,480.2 904.5,480.8 911.0,481.0 916.9,480.8 923.1,480.3 929.5,479.5 935.9,478.6 942.1,477.5 948.1,476.3 953.6,475.1 958.6,473.9 965.6,471.7 971.6,469.2 977.6,466.8 977.6,466.8" stroke="#f0f0f0" stroke-width="6.0" fill="none" stroke-linecap="round" stroke-linejoin="round"/><path d="M918.9,467.6 918.2,473.9 917.6,480.3 916.9,486.6 916.2,493.0 915.6,499.4 914.9,505.7 914.4,512.0 913.9,518.3 913.5,524.8 913.1,531.2 912.8,537.6 912.5,544.0 912.2,550.4 911.9,556.8 911.8,560.0" stroke="#eeeeee" stroke-width="7.0" fill="none" stroke-linecap="round" stroke-linejoin="round"/><path d="M919.8,468.0 919.1,474.3 918.4,480.7 917.7,487.1 917.1,493.4 916.4,499.8 915.8,506.1 915.3,512.4 914.8,518.8 914.4,525.2 914.0,531.6 913.7,538.0 913.4,544.4 913.1,550.8 912.8,557.2 912.6,560.4" stroke="#f3f3f3" stroke-width="6.0" fill="none" stroke-linecap="round" stroke-linejoin="round"/><path d="M850.0,275.1 855.1,278.8 860.2,282.4 865.4,286.0 870.5,289.6 875.6,293.3 880.7,297.2 885.6,301.3 890.3,305.4 895.0,309.8 899.7,314.3 904.4,318.9 908.9,323.6 913.3,328.2 917.4,332.7 921.3,336.9 925.6,341.9 929.4,346.7 933.0,351.3 936.6,356.0 940.3,360.7 940.3,360.7" stroke="#e3e3e3" stroke-width="8.4" fill="none" stroke-linecap="round" stroke-linejoin="round"/><path d="M850.4,274.9 855.5,278.6 860.6,282.2 865.7,285.8 870.9,289.4 876.0,293.1 881.0,297.0 886.0,301.1 890.6,305.2 895.4,309.6 900.1,314.1 904.7,318.8 909.3,323.4 913.7,328.0 917.8,332.5 921.6,336.7 925.9,341.7 929.8,346.5 933.4,351.1 937.0,355.8 940.6,360.5 940.6,360.5" stroke="#e8e8e8" stroke-width="7.2" fill="none" stroke-linecap="round" stroke-linejoin="round"/><path d="M850.0,249.0 856.2,249.8 862.5,250.6 868.8,251.3 875.1,252.1 881.4,252.8 887.6,253.6 893.9,254.3 900.1,255.2 906.3,256.0 912.3,257.0 918.3,258.0 924.4,259.1 930.7,260.6 936.9,262.3 943.1,264.2 949.2,266.0 955.3,267.9 961.2,269.5 967.0,270.9 972.6,272.0 978.0,272.6 983.9,272.7 990.2,272.1 996.1,270.9 1001.9,269.4 1007.6,267.8 1013.4,266.3 1016.3,265.6" stroke="#e9e9e9" stroke-width="7.0" fill="none" stroke-linecap="round" stroke-linejoin="round"/><path d="M851.5,251.0 857.7,251.8 864.0,252.5 870.3,253.3 876.6,254.0 882.9,254.8 889.1,255.5 895.4,256.3 901.6,257.1 907.7,258.0 913.8,258.9 919.8,259.9 925.9,261.1 932.1,262.6 938.4,264.3 944.6,266.1 950.7,268.0 956.8,269.8 962.7,271.5 968.5,272.9 974.1,274.0 979.5,274.6 985.4,274.7 991.7,274.0 997.6,272.9 1003.4,271.4 1009.1,269.7 1014.9,268.2 1017.8,267.6" stroke="#eeeeee" stroke-width="6.0" fill="none" stroke-linecap="round" stroke-linejoin="round"/><path d="M978.3,253.8 974.4,258.5 970.5,263.1 966.5,267.8 962.6,272.5 958.8,277.2 955.0,282.0 951.5,286.9 948.2,292.0 945.1,297.2 942.1,302.5 939.3,307.9 936.6,313.4 933.9,318.9 931.2,324.4 928.4,329.8 928.4,329.8" stroke="#dfdfdf" stroke-width="8.4" fill="none" stroke-linecap="round" stroke-linejoin="round"/><path d="M978.2,254.5 974.3,259.2 970.4,263.9 966.4,268.5 962.5,273.2 958.6,277.9 954.9,282.7 951.4,287.6 948.0,292.7 944.9,297.9 942.0,303.2 939.2,308.7 936.5,314.1 933.8,319.6 931.1,325.1 928.3,330.5 928.3,330.5" stroke="#e4e4e4" stroke-width="7.2" fill="none" stroke-linecap="round" stroke-linejoin="round"/><path d="M1173.7,416.8 1179.9,418.5 1186.1,420.4 1192.3,422.3 1198.7,423.8 1205.4,424.7 1211.6,424.4 1218.7,423.2 1226.2,421.4 1233.4,419.7 1239.9,418.7 1245.3,418.8 1248.9,420.7 1250.5,424.1 1250.6,428.7 1249.7,434.4 1247.9,440.9 1245.6,447.9 1243.1,455.2 1240.7,462.5 1238.5,469.6 1237.0,476.2 1236.3,482.6 1235.9,489.5 1235.8,496.6 1235.8,503.8 1235.6,510.8 1235.2,517.5 1234.4,523.7 1232.9,529.2 1230.6,533.7 1227.1,537.4 1222.2,539.9 1216.4,541.4 1209.9,542.1 1203.0,542.4 1196.0,542.6 1189.0,543.0 1182.7,543.9 1176.7,544.8 1170.6,545.7 1164.4,546.5 1158.0,547.3 1151.7,548.1 1145.2,549.0 1138.8,549.8 1132.5,550.6 1126.2,551.4 1126.2,551.4" stroke="#e9e9e9" stroke-width="7.0" fill="none" stroke-linecap="round" stroke-linejoin="round"/><path d="M1171.8,417.7 1178.0,419.4 1184.2,421.3 1190.4,423.2 1196.7,424.7 1203.4,425.6 1209.7,425.3 1216.8,424.0 1224.2,422.3 1231.5,420.6 1238.0,419.6 1243.3,419.7 1247.0,421.6 1248.5,425.0 1248.7,429.6 1247.7,435.3 1246.0,441.8 1243.7,448.8 1241.2,456.0 1238.7,463.4 1236.6,470.4 1235.1,477.1 1234.3,483.5 1234.0,490.3 1233.9,497.5 1233.8,504.7 1233.7,511.7 1233.3,518.4 1232.4,524.6 1231.0,530.1 1228.7,534.6 1225.1,538.2 1220.2,540.8 1214.4,542.3 1208.0,543.0 1201.1,543.3 1194.0,543.5 1187.0,543.9 1180.7,544.8 1174.8,545.7 1168.7,546.6 1162.4,547.4 1156.1,548.2 1149.7,549.0 1143.3,549.8 1136.9,550.6 1130.5,551.5 1124.2,552.3 1124.2,552.3" stroke="#eeeeee" stroke-width="6.0" fill="none" stroke-linecap="round" stroke-linejoin="round"/><path d="M860.9,389.1 867.0,390.9 873.2,392.7 879.4,394.5 885.6,396.3 891.7,398.1 897.6,400.0 903.5,402.0 909.3,404.1 914.9,406.3 920.5,408.5 926.2,410.7 932.1,412.8 938.0,414.7 944.0,416.6 950.1,418.4 956.3,420.2 962.5,422.0 968.7,423.8 971.7,424.7" stroke="#ebebeb" stroke-width="7.0" fill="none" stroke-linecap="round" stroke-linejoin="round"/><path d="M861.5,391.2 867.7,393.0 873.9,394.8 880.1,396.6 886.2,398.4 892.3,400.3 898.2,402.1 904.1,404.1 909.9,406.3 915.6,408.5 921.1,410.7 926.8,412.9 932.8,415.0 938.6,416.9 944.6,418.7 950.7,420.6 956.9,422.4 963.2,424.1 969.3,426.0 972.4,426.9" stroke="#f0f0f0" stroke-width="6.0" fill="none" stroke-linecap="round" stroke-linejoin="round"/><path d="M868.8,476.2 875.1,477.0 881.3,477.9 887.5,478.8 893.9,479.6 900.5,480.1 906.4,480.5 912.5,480.9 918.8,481.2 925.0,481.3 931.2,481.1 937.2,480.6 943.1,479.5 949.0,477.7 954.8,475.5 960.4,473.1 966.0,470.6 971.7,468.3 971.7,468.3" stroke="#ebebeb" stroke-width="7.0" fill="none" stroke-linecap="round" stroke-linejoin="round"/><path d="M870.2,475.2 876.5,476.1 882.7,477.0 888.9,477.9 895.3,478.6 901.9,479.2 907.8,479.6 913.9,480.0 920.2,480.3 926.4,480.4 932.6,480.2 938.6,479.6 944.5,478.5 950.5,476.8 956.2,474.6 961.8,472.1 967.5,469.6 973.2,467.3 973.2,467.3" stroke="#f0f0f0" stroke-width="6.0" fill="none" stroke-linecap="round" stroke-linejoin="round"/><path d="M951.9,400.9 958.0,403.1 964.7,404.9 971.0,406.9 976.3,409.4 979.7,412.8 981.1,418.3 980.7,424.9 978.8,431.5 975.7,436.6 971.2,439.6 965.1,441.4 958.1,442.6 951.2,443.7 948.0,444.5" stroke="#ebebeb" stroke-width="5.6" fill="none" stroke-linecap="round" stroke-linejoin="round"/><path d="M951.4,401.7 957.5,403.8 964.2,405.7 970.5,407.7 975.8,410.2 979.2,413.6 980.6,419.0 980.2,425.6 978.3,432.2 975.2,437.3 970.7,440.3 964.6,442.1 957.6,443.3 950.7,444.5 947.5,445.2" stroke="#f0f0f0" stroke-width="4.8" fill="none" stroke-linecap="round" stroke-linejoin="round"/><path d="M916.3,480.1 915.4,486.3 914.3,492.5 913.2,498.8 912.1,505.0 911.0,511.2 910.1,517.4 909.3,523.5 908.7,529.6 908.4,535.6 908.4,542.1 908.7,548.5 909.2,554.8 909.9,561.1 910.6,567.4 911.4,573.6 912.1,579.9 912.3,583.1" stroke="#efefef" stroke-width="7.0" fill="none" stroke-linecap="round" stroke-linejoin="round"/><path d="M914.2,480.0 913.3,486.1 912.2,492.4 911.1,498.6 910.0,504.8 908.9,511.0 908.0,517.2 907.2,523.4 906.6,529.4 906.3,535.4 906.3,541.9 906.6,548.3 907.1,554.7 907.8,560.9 908.5,567.2 909.3,573.5 910.0,579.8 910.2,582.9" stroke="#f4f4f4" stroke-width="6.0" fill="none" stroke-linecap="round" stroke-linejoin="round"/><path d="M1106.4,547.4 1108.7,553.1 1111.0,558.8 1113.4,564.5 1115.8,570.0 1118.3,575.2 1121.5,581.1 1125.0,586.7 1128.4,592.2 1130.1,595.0" stroke="#e9e9e9" stroke-width="8.4" fill="none" stroke-linecap="round" stroke-linejoin="round"/><path d="M1104.9,545.8 1107.3,551.4 1109.6,557.1 1111.9,562.8 1114.3,568.3 1116.8,573.5 1120.1,579.4 1123.5,585.0 1127.0,590.5 1128.7,593.3" stroke="#eeeeee" stroke-width="7.2" fill="none" stroke-linecap="round" stroke-linejoin="round"/><path d="M1090.5,559.3 1093.4,565.1 1096.3,570.8 1099.2,576.6 1102.1,582.4 1104.9,588.1 1106.4,591.0" stroke="#efefef" stroke-width="7.0" fill="none" stroke-linecap="round" stroke-linejoin="round"/><path d="M1088.6,560.5 1091.5,566.3 1094.4,572.0 1097.2,577.8 1100.1,583.5 1103.0,589.3 1104.4,592.2" stroke="#f4f4f4" stroke-width="6.0" fill="none" stroke-linecap="round" stroke-linejoin="round"/><path d="M750.0,626.6 755.9,625.1 761.8,623.6 767.6,622.1 773.4,620.7 779.2,619.2 785.1,617.7 791.0,616.1 797.0,614.4 803.1,612.7 809.4,610.8 815.1,609.0 821.1,607.1 827.3,605.0 833.7,602.8 840.2,600.6 846.8,598.3 853.3,596.0 859.6,593.7 865.7,591.5 871.6,589.4 877.0,587.4 882.1,585.5 886.6,583.8 892.1,581.7 898.0,579.4 903.1,577.3 908.4,575.2 908.4,575.2" stroke="#f1f1f1" stroke-width="8.4" fill="none" stroke-linecap="round" stroke-linejoin="round"/><path d="M748.4,625.5 754.3,624.0 760.1,622.5 765.9,621.0 771.8,619.5 777.6,618.1 783.4,616.5 789.4,615.0 795.4,613.3 801.5,611.6 807.8,609.7 813.4,607.9 819.4,606.0 825.7,603.9 832.1,601.7 838.6,599.5 845.1,597.2 851.6,594.9 858.0,592.6 864.1,590.4 869.9,588.3 875.4,586.3 880.4,584.4 884.9,582.7 890.5,580.6 896.4,578.3 901.5,576.2 906.8,574.1 906.8,574.1" stroke="#f5f5f5" stroke-width="7.2" fill="none" stroke-linecap="round" stroke-linejoin="round"/><path d="M904.4,626.6 910.6,626.4 916.7,626.2 922.9,626.0 929.0,625.7 935.2,625.5 941.3,625.2 947.5,624.9 953.6,624.7 959.8,624.4 965.9,624.2 972.1,623.9 978.2,623.7 984.4,623.5 990.5,623.3 996.6,623.1 1002.8,623.0 1008.9,622.8 1015.0,622.7 1021.1,622.7 1027.2,622.7 1033.3,622.7 1039.4,622.8 1045.4,623.0 1051.4,623.2 1057.4,623.5 1063.4,623.8 1069.3,624.1 1075.3,624.4 1081.3,624.8 1087.2,625.1 1093.2,625.4 1099.3,625.7 1105.3,626.0 1111.4,626.3 1117.6,626.5 1123.8,626.6 1130.0,626.7 1136.3,626.8 1142.7,626.7 1148.8,626.6 1154.5,626.4 1160.3,626.2 1166.1,625.9 1172.0,625.6 1177.9,625.2 1183.8,624.8 1189.8,624.4 1195.8,624.0 1201.9,623.5 1208.0,623.0 1214.1,622.5 1220.2,621.9 1226.4,621.4 1232.5,620.8 1238.7,620.2 1244.8,619.7 1251.0,619.1 1257.2,618.5 1263.3,617.9 1269.5,617.4 1275.6,616.8 1281.8,616.3 1287.9,615.7 1293.9,615.2 1300.0,614.8 1300.0,614.8" stroke="#f1f1f1" stroke-width="8.4" fill="none" stroke-linecap="round" stroke-linejoin="round"/><path d="M903.9,628.3 910.1,628.1 916.2,627.8 922.4,627.6 928.5,627.4 934.7,627.1 940.8,626.8 947.0,626.6 953.1,626.3 959.3,626.0 965.4,625.8 971.6,625.5 977.7,625.3 983.9,625.1 990.0,624.9 996.2,624.7 1002.3,624.6 1008.4,624.5 1014.5,624.4 1020.6,624.3 1026.7,624.3 1032.8,624.4 1038.9,624.5 1044.9,624.6 1050.9,624.8 1056.9,625.1 1062.9,625.4 1068.9,625.7 1074.8,626.0 1080.8,626.4 1086.8,626.7 1092.8,627.1 1098.8,627.4 1104.8,627.7 1110.9,627.9 1117.1,628.1 1123.3,628.3 1129.5,628.4 1135.9,628.4 1142.3,628.3 1148.3,628.2 1154.0,628.0 1159.8,627.8 1165.6,627.5 1171.5,627.2 1177.4,626.9 1183.3,626.5 1189.3,626.1 1195.4,625.6 1201.4,625.1 1207.5,624.6 1213.6,624.1 1219.7,623.6 1225.9,623.0 1232.0,622.4 1238.2,621.9 1244.4,621.3 1250.5,620.7 1256.7,620.1 1262.9,619.6 1269.0,619.0 1275.2,618.4 1281.3,617.9 1287.4,617.4 1293.5,616.9 1299.5,616.4 1299.5,616.4" stroke="#f5f5f5" stroke-width="7.2" fill="none" stroke-linecap="round" stroke-linejoin="round"/><path d="M751.2,629.7 745.4,631.9 739.5,633.9 733.5,636.0 727.5,638.0 721.6,640.0 715.7,642.2 710.1,644.5 704.7,647.0 699.6,649.8 694.6,653.0 689.5,656.8 684.7,660.7 680.2,664.8 675.9,669.2 671.9,673.8 668.2,678.6 664.8,683.7 661.7,689.0 659.0,694.6 656.5,700.5 654.3,706.6 652.3,712.8 650.5,719.1 648.9,725.2 647.5,731.2 646.2,737.4 645.0,743.6 644.1,749.8 643.4,756.0 643.0,762.1 642.9,768.2 643.2,774.4 643.9,780.7 644.9,787.0 646.3,793.3 648.0,799.6 649.8,805.8 651.9,811.8 654.0,817.6 656.5,823.4 659.3,828.9 662.3,834.3 665.4,839.5 668.4,844.7 671.3,850.0 674.1,855.5 676.9,861.0 679.6,866.4 682.3,871.8 685.0,877.3 686.4,880.0" stroke="#f1f1f1" stroke-width="9.8" fill="none" stroke-linecap="round" stroke-linejoin="round"/><path d="M749.3,629.5 743.6,631.6 737.7,633.7 731.7,635.7 725.7,637.7 719.7,639.8 713.9,641.9 708.2,644.2 702.8,646.8 697.8,649.5 692.7,652.8 687.7,656.5 682.9,660.5 678.4,664.6 674.1,669.0 670.1,673.6 666.4,678.4 662.9,683.4 659.9,688.7 657.1,694.4 654.6,700.3 652.4,706.4 650.4,712.6 648.7,718.8 647.1,725.0 645.7,731.0 644.3,737.2 643.2,743.4 642.3,749.6 641.6,755.7 641.2,761.9 641.1,768.0 641.4,774.2 642.0,780.4 643.1,786.8 644.5,793.1 646.1,799.4 648.0,805.6 650.0,811.6 652.2,817.4 654.6,823.1 657.4,828.7 660.4,834.0 663.5,839.3 666.6,844.5 669.4,849.8 672.3,855.3 675.0,860.7 677.8,866.2 680.5,871.6 683.2,877.1 684.5,879.8" stroke="#f5f5f5" stroke-width="8.4" fill="none" stroke-linecap="round" stroke-linejoin="round"/><path d="M740.4,640.5 735.1,643.5 729.6,646.4 724.1,649.2 718.7,652.1 713.4,655.2 708.4,658.5 703.7,662.1 699.0,666.1 694.6,670.4 690.3,675.0 686.3,679.7 682.7,684.6 679.3,689.7 676.3,695.0 673.8,700.7 671.8,706.7 670.0,712.8 668.3,719.0 666.7,725.1 664.8,731.2 664.8,731.2" stroke="#f1f1f1" stroke-width="8.4" fill="none" stroke-linecap="round" stroke-linejoin="round"/><path d="M740.6,642.2 735.3,645.2 729.8,648.0 724.3,650.9 718.9,653.8 713.6,656.9 708.6,660.2 703.9,663.8 699.3,667.8 694.8,672.1 690.5,676.6 686.6,681.4 682.9,686.3 679.5,691.4 676.5,696.7 674.1,702.4 672.0,708.3 670.2,714.5 668.6,720.6 666.9,726.8 665.0,732.9 665.0,732.9" stroke="#f5f5f5" stroke-width="7.2" fill="none" stroke-linecap="round" stroke-linejoin="round"/><path d="M751.2,640.5 751.9,646.8 752.6,653.2 753.5,659.6 754.2,666.0 754.9,672.3 755.4,678.6 755.5,684.9 755.3,691.1 754.7,697.4 753.7,703.6 752.5,709.7 751.3,715.8 750.2,722.0 749.3,728.1 748.8,734.3 748.5,740.5 748.2,746.9 748.1,753.2 748.2,759.4 748.4,765.6 748.8,771.5 749.4,777.5 750.4,783.6 751.6,789.5 752.9,795.2 754.2,801.0 755.5,806.8 755.5,806.8" stroke="#f2f2f2" stroke-width="8.4" fill="none" stroke-linecap="round" stroke-linejoin="round"/><path d="M752.6,642.1 753.3,648.4 754.0,654.8 754.9,661.2 755.6,667.6 756.3,673.9 756.8,680.2 757.0,686.5 756.8,692.7 756.1,699.0 755.1,705.2 753.9,711.3 752.7,717.4 751.6,723.6 750.7,729.7 750.2,735.9 749.9,742.1 749.6,748.5 749.5,754.8 749.6,761.0 749.8,767.2 750.2,773.1 750.8,779.1 751.8,785.2 753.0,791.1 754.3,796.8 755.7,802.6 756.9,808.4 756.9,808.4" stroke="#f5f5f5" stroke-width="7.2" fill="none" stroke-linecap="round" stroke-linejoin="round"/><path d="M779.3,705.3 779.8,711.6 780.4,718.0 781.0,724.4 781.6,730.8 782.1,737.1 782.7,743.4 783.3,749.7 783.9,755.9 784.5,762.2 785.1,768.4 785.7,774.5 786.4,780.6 787.0,786.8 787.6,792.9 787.9,796.0" stroke="#f3f3f3" stroke-width="8.4" fill="none" stroke-linecap="round" stroke-linejoin="round"/><path d="M778.3,704.9 778.9,711.3 779.4,717.6 780.0,724.0 780.6,730.4 781.2,736.7 781.7,743.1 782.3,749.3 782.9,755.6 783.5,761.8 784.1,768.0 784.8,774.1 785.4,780.3 786.0,786.4 786.6,792.5 786.9,795.6" stroke="#f5f5f5" stroke-width="7.2" fill="none" stroke-linecap="round" stroke-linejoin="round"/><path d="M826.8,623.2 822.5,627.6 818.2,632.0 813.9,636.6 809.7,641.1 805.4,645.6 801.2,650.1 796.8,654.4 792.5,658.6 788.1,662.6 783.6,666.4 778.7,670.2 773.7,673.8 768.6,677.1 763.5,680.3 758.3,683.5 753.2,686.6 748.1,689.7 742.9,692.8 740.4,694.5" stroke="#f3f3f3" stroke-width="8.4" fill="none" stroke-linecap="round" stroke-linejoin="round"/><path d="M826.2,624.9 821.9,629.3 817.6,633.7 813.3,638.3 809.1,642.8 804.8,647.3 800.5,651.8 796.2,656.1 791.9,660.3 787.4,664.3 783.0,668.1 778.0,671.9 773.0,675.5 768.0,678.8 762.9,682.0 757.7,685.2 752.6,688.2 747.4,691.3 742.3,694.5 739.8,696.2" stroke="#f5f5f5" stroke-width="7.2" fill="none" stroke-linecap="round" stroke-linejoin="round"/><path d="M762.0,627.5 767.9,625.8 773.8,624.1 779.7,622.3 785.5,620.6 791.4,618.9 797.4,617.2 803.4,615.5 809.6,613.9 816.0,612.4 821.6,611.2 827.3,610.0 833.1,608.8 839.0,607.7 844.9,606.7 851.0,605.6 857.0,604.6 863.1,603.6 869.2,602.6 875.3,601.5 881.3,600.5 887.3,599.4 887.3,599.4" stroke="#e9e9e9" stroke-width="8.4" fill="none" stroke-linecap="round" stroke-linejoin="round"/><path d="M764.0,626.0 770.0,624.3 775.8,622.6 781.7,620.8 787.6,619.1 793.4,617.3 799.4,615.6 805.4,614.0 811.6,612.4 818.0,610.9 823.6,609.6 829.3,608.4 835.1,607.3 841.0,606.2 846.9,605.1 853.0,604.1 859.0,603.1 865.1,602.1 871.2,601.0 877.3,600.0 883.3,599.0 889.3,597.9 889.3,597.9" stroke="#eeeeee" stroke-width="7.2" fill="none" stroke-linecap="round" stroke-linejoin="round"/><path d="M690.7,852.1 696.7,851.4 702.6,850.6 708.5,849.8 714.5,849.0 720.5,848.4 726.5,847.9 732.6,847.8 738.7,847.8 744.8,848.1 751.0,848.5 757.3,848.9 763.5,849.4 769.7,849.8 772.8,850.0" stroke="#f1f1f1" stroke-width="9.8" fill="none" stroke-linecap="round" stroke-linejoin="round"/><path d="M689.3,851.0 695.2,850.2 701.2,849.4 707.1,848.6 713.1,847.8 719.0,847.2 725.1,846.8 731.2,846.6 737.3,846.6 743.4,846.9 749.6,847.3 755.8,847.7 762.1,848.2 768.3,848.6 771.4,848.8" stroke="#f5f5f5" stroke-width="8.4" fill="none" stroke-linecap="round" stroke-linejoin="round"/><path d="M837.6,659.9 844.1,660.3 850.6,660.7 857.1,661.0 863.6,661.5 870.0,662.1 876.1,662.8 882.1,663.6 888.1,664.6 894.0,665.5 900.0,666.4 900.0,666.4" stroke="#ebebeb" stroke-width="8.4" fill="none" stroke-linecap="round" stroke-linejoin="round"/><path d="M836.4,659.8 842.9,660.2 849.4,660.6 855.9,661.0 862.4,661.4 868.8,662.0 874.9,662.7 880.9,663.6 886.9,664.5 892.8,665.4 898.8,666.3 898.8,666.3" stroke="#f0f0f0" stroke-width="7.2" fill="none" stroke-linecap="round" stroke-linejoin="round"/><path d="M668.0,874.0 667.9,880.1 667.9,886.2 667.9,892.3 667.9,898.4 667.9,904.5 667.9,910.6 667.9,916.8 667.8,922.9 667.8,929.0 667.8,935.1 667.7,941.1 667.6,947.2 667.5,953.2 667.4,959.2 667.2,965.1 667.0,971.0 666.7,977.4 666.5,983.8 666.2,990.3 665.9,996.8 665.5,1003.3 665.2,1009.8 664.8,1016.2 664.4,1022.5 663.9,1028.7 663.4,1034.8 662.9,1040.7 662.3,1046.3 661.7,1051.8 661.0,1057.0 659.9,1063.9 658.7,1070.4 657.4,1076.5 656.1,1082.4 654.7,1088.2 653.3,1094.0 652.0,1100.0 652.0,1100.0" stroke="#eeeeee" stroke-width="8.4" fill="none" stroke-linecap="round" stroke-linejoin="round"/><path d="M668.4,873.0 668.3,879.0 668.3,885.1 668.3,891.2 668.3,897.3 668.3,903.5 668.3,909.6 668.3,915.7 668.2,921.8 668.2,927.9 668.2,934.0 668.1,940.1 668.0,946.1 667.9,952.1 667.8,958.1 667.6,964.1 667.4,970.0 667.1,976.3 666.9,982.8 666.6,989.3 666.3,995.8 665.9,1002.3 665.6,1008.8 665.2,1015.2 664.8,1021.5 664.3,1027.7 663.8,1033.7 663.3,1039.6 662.7,1045.3 662.1,1050.8 661.4,1056.0 660.3,1062.9 659.1,1069.4 657.8,1075.5 656.5,1081.3 655.1,1087.1 653.7,1092.9 652.4,1099.0 652.4,1099.0" stroke="#f3f3f3" stroke-width="7.2" fill="none" stroke-linecap="round" stroke-linejoin="round"/><path d="M692.0,885.0 691.4,891.1 690.8,897.3 690.2,903.4 689.6,909.6 689.0,915.7 688.4,921.9 687.8,928.0 687.2,934.1 686.6,940.3 686.1,946.4 685.5,952.6 685.0,958.7 684.5,964.9 684.0,971.0 683.6,977.1 683.1,983.3 682.7,989.4 682.4,995.6 682.0,1001.7 681.6,1007.8 681.3,1014.0 681.0,1020.1 680.7,1026.3 680.3,1032.4 680.0,1038.6 679.7,1044.7 679.4,1050.9 679.0,1057.0 679.0,1057.0" stroke="#f1f1f1" stroke-width="8.4" fill="none" stroke-linecap="round" stroke-linejoin="round"/><path d="M689.8,884.6 689.2,890.8 688.6,896.9 688.0,903.1 687.4,909.2 686.8,915.4 686.2,921.5 685.6,927.6 685.0,933.8 684.5,939.9 683.9,946.1 683.3,952.2 682.8,958.4 682.3,964.5 681.8,970.6 681.4,976.8 680.9,982.9 680.5,989.1 680.2,995.2 679.8,1001.3 679.5,1007.5 679.1,1013.6 678.8,1019.8 678.5,1025.9 678.2,1032.1 677.8,1038.2 677.5,1044.4 677.2,1050.5 676.8,1056.6 676.8,1056.6" stroke="#f5f5f5" stroke-width="7.2" fill="none" stroke-linecap="round" stroke-linejoin="round"/><path d="M790.0,895.0 791.8,900.9 793.6,906.7 795.4,912.6 797.3,918.6 799.2,924.5 801.0,930.4 802.8,936.3 804.7,942.2 806.4,948.0 808.2,953.8 809.8,959.6 811.5,965.3 813.0,971.0 814.6,977.1 816.1,983.1 817.5,989.0 818.9,995.0 820.2,1000.8 821.5,1006.7 822.8,1012.6 824.1,1018.4 825.4,1024.2 826.7,1030.1 828.0,1036.0 828.0,1036.0" stroke="#eeeeee" stroke-width="11.2" fill="none" stroke-linecap="round" stroke-linejoin="round"/><path d="M789.4,895.3 791.2,901.2 793.0,907.0 794.9,912.9 796.7,918.9 798.6,924.8 800.4,930.7 802.3,936.6 804.1,942.4 805.9,948.3 807.6,954.1 809.3,959.9 810.9,965.6 812.4,971.3 814.0,977.4 815.5,983.4 816.9,989.3 818.3,995.3 819.6,1001.1 820.9,1007.0 822.2,1012.8 823.5,1018.7 824.8,1024.5 826.1,1030.4 827.4,1036.3 827.4,1036.3" stroke="#f3f3f3" stroke-width="9.6" fill="none" stroke-linecap="round" stroke-linejoin="round"/><path d="M795.0,1040.0 793.7,1045.6 792.4,1051.2 791.0,1058.0 790.2,1062.7 789.5,1068.0 788.7,1073.9 787.9,1080.1 787.1,1086.7 786.2,1093.4 785.4,1100.2 784.6,1107.0 783.8,1113.6 783.0,1120.0 783.0,1120.0" stroke="#f1f1f1" stroke-width="8.4" fill="none" stroke-linecap="round" stroke-linejoin="round"/><path d="M797.0,1040.8 795.7,1046.4 794.3,1052.0 793.0,1058.8 792.2,1063.5 791.4,1068.8 790.7,1074.7 789.9,1080.9 789.0,1087.5 788.2,1094.2 787.4,1101.1 786.6,1107.8 785.8,1114.5 785.0,1120.8 785.0,1120.8" stroke="#f5f5f5" stroke-width="7.2" fill="none" stroke-linecap="round" stroke-linejoin="round"/><path d="M700.0,850.0 706.2,850.8 712.5,851.5 718.8,852.3 725.0,853.0 731.2,853.8 737.1,854.6 743.2,855.4 749.6,856.0 755.9,856.5 761.8,857.3 767.4,858.8 772.6,861.6 777.3,865.6 781.6,870.3 785.7,875.3 790.0,880.0 790.0,880.0" stroke="#f1f1f1" stroke-width="8.4" fill="none" stroke-linecap="round" stroke-linejoin="round"/><path d="M700.1,850.5 706.3,851.3 712.6,852.0 718.9,852.8 725.1,853.5 731.2,854.3 737.2,855.1 743.3,855.9 749.7,856.5 755.9,857.0 761.9,857.8 767.5,859.4 772.7,862.1 777.4,866.1 781.7,870.8 785.8,875.8 790.1,880.5 790.1,880.5" stroke="#f5f5f5" stroke-width="7.2" fill="none" stroke-linecap="round" stroke-linejoin="round"/><path d="M1252.6,704.0 1253.2,710.1 1253.8,716.1 1254.4,722.2 1255.1,728.2 1255.7,734.3 1256.3,740.4 1256.9,746.4 1257.5,752.5 1258.1,758.6 1258.7,764.6 1259.3,770.9 1260.0,777.2 1260.6,783.7 1261.2,790.0 1261.9,796.3 1262.5,802.5 1263.1,808.4 1263.6,813.9 1264.1,819.2 1264.9,826.2 1265.5,832.7 1266.1,838.7 1266.7,844.8 1267.0,848.0" stroke="#ebebeb" stroke-width="9.8" fill="none" stroke-linecap="round" stroke-linejoin="round"/><path d="M1253.4,702.0 1254.0,708.1 1254.6,714.2 1255.2,720.2 1255.8,726.3 1256.4,732.3 1257.0,738.4 1257.6,744.5 1258.3,750.5 1258.9,756.6 1259.5,762.7 1260.1,768.9 1260.7,775.3 1261.4,781.7 1262.0,788.1 1262.6,794.4 1263.2,800.5 1263.8,806.4 1264.4,812.0 1264.9,817.2 1265.6,824.3 1266.3,830.7 1266.9,836.8 1267.5,842.9 1267.8,846.0" stroke="#f0f0f0" stroke-width="8.4" fill="none" stroke-linecap="round" stroke-linejoin="round"/><path d="M1272.8,819.2 1278.5,821.1 1284.3,823.1 1290.0,825.1 1295.8,827.0 1301.6,829.0 1307.3,830.9 1313.1,832.7 1319.1,834.5 1325.2,836.3 1331.4,838.1 1337.5,839.9 1343.7,841.5 1349.9,843.1 1356.1,844.5 1362.2,845.7 1368.4,846.7 1374.6,847.6 1380.7,848.3 1386.9,849.0 1393.1,849.7 1399.3,850.5 1402.4,850.9" stroke="#ebebeb" stroke-width="9.8" fill="none" stroke-linecap="round" stroke-linejoin="round"/><path d="M1274.5,820.4 1280.3,822.4 1286.1,824.3 1291.8,826.3 1297.6,828.3 1303.3,830.2 1309.1,832.1 1314.8,833.9 1320.8,835.7 1327.0,837.6 1333.1,839.4 1339.3,841.1 1345.5,842.7 1351.6,844.3 1357.8,845.7 1364.0,846.9 1370.2,847.9 1376.3,848.8 1382.5,849.6 1388.7,850.3 1394.9,851.0 1401.0,851.7 1404.1,852.1" stroke="#f0f0f0" stroke-width="8.4" fill="none" stroke-linecap="round" stroke-linejoin="round"/><path d="M1278.5,848.0 1284.3,850.0 1290.1,852.0 1296.0,854.2 1301.8,856.3 1307.6,858.4 1313.4,860.3 1319.1,862.2 1324.8,863.8 1330.4,865.3 1336.7,866.6 1342.9,867.6 1349.1,868.4 1355.2,869.0 1361.3,869.6 1367.4,870.3 1373.6,871.0 1373.6,871.0" stroke="#f1f1f1" stroke-width="8.4" fill="none" stroke-linecap="round" stroke-linejoin="round"/><path d="M1280.2,849.3 1286.0,851.3 1291.8,853.3 1297.6,855.5 1303.4,857.6 1309.2,859.7 1315.0,861.7 1320.8,863.5 1326.4,865.1 1332.0,866.6 1338.4,867.9 1344.6,868.9 1350.7,869.7 1356.9,870.3 1363.0,870.9 1369.1,871.6 1375.2,872.3 1375.2,872.3" stroke="#f5f5f5" stroke-width="7.2" fill="none" stroke-linecap="round" stroke-linejoin="round"/><path d="M1411.0,686.7 1412.6,692.9 1414.2,699.0 1415.9,705.2 1417.5,711.4 1419.1,717.5 1420.6,723.6 1421.9,729.7 1423.1,735.9 1424.3,742.1 1425.4,748.3 1426.5,754.4 1427.3,760.6 1427.9,766.7 1428.2,772.9 1428.2,779.1 1427.8,785.2 1427.1,791.4 1426.1,797.6 1425.1,803.8 1424.0,809.9 1423.0,816.1 1422.5,819.2" stroke="#f1f1f1" stroke-width="8.4" fill="none" stroke-linecap="round" stroke-linejoin="round"/><path d="M1410.5,686.3 1412.1,692.4 1413.8,698.6 1415.4,704.7 1417.1,710.9 1418.6,717.1 1420.1,723.2 1421.5,729.3 1422.7,735.5 1423.8,741.7 1425.0,747.8 1426.0,754.0 1426.8,760.1 1427.4,766.3 1427.8,772.5 1427.8,778.6 1427.3,784.8 1426.6,791.0 1425.7,797.1 1424.6,803.3 1423.5,809.5 1422.5,815.6 1422.1,818.7" stroke="#f5f5f5" stroke-width="7.2" fill="none" stroke-linecap="round" stroke-linejoin="round"/><path d="M1100.0,617.6 1106.1,617.6 1112.2,617.6 1118.1,617.6 1124.1,617.7 1130.0,617.7 1136.0,617.8 1141.9,617.8 1148.0,617.8 1154.0,617.8 1160.2,617.8 1166.5,617.8 1173.0,617.8 1179.6,617.7 1186.4,617.6 1191.8,617.5 1197.2,617.4 1202.8,617.3 1208.5,617.1 1214.3,617.0 1220.2,616.8 1226.1,616.6 1232.1,616.4 1238.1,616.3 1244.2,616.1 1250.4,615.8 1256.6,615.6 1262.8,615.4 1269.0,615.2 1275.3,615.0 1281.5,614.7 1287.7,614.5 1294.0,614.3 1300.2,614.1 1306.4,613.9 1312.5,613.7 1318.6,613.5 1324.6,613.3 1324.6,613.3" stroke="#f2f2f2" stroke-width="8.4" fill="none" stroke-linecap="round" stroke-linejoin="round"/><path d="M1098.3,618.2 1104.4,618.2 1110.4,618.2 1116.4,618.2 1122.4,618.3 1128.3,618.3 1134.2,618.3 1140.2,618.4 1146.2,618.4 1152.3,618.4 1158.5,618.4 1164.8,618.4 1171.2,618.3 1177.9,618.3 1184.6,618.2 1190.0,618.1 1195.5,618.0 1201.1,617.9 1206.8,617.7 1212.5,617.6 1218.4,617.4 1224.3,617.2 1230.3,617.0 1236.4,616.8 1242.5,616.6 1248.7,616.4 1254.8,616.2 1261.1,616.0 1267.3,615.8 1273.5,615.6 1279.8,615.3 1286.0,615.1 1292.2,614.9 1298.4,614.7 1304.6,614.5 1310.7,614.3 1316.8,614.1 1322.9,613.9 1322.9,613.9" stroke="#f5f5f5" stroke-width="7.2" fill="none" stroke-linecap="round" stroke-linejoin="round"/><path d="M1100.0,636.3 1106.2,636.2 1112.5,636.1 1118.8,636.0 1125.2,636.0 1131.6,635.9 1137.9,635.8 1144.3,635.7 1150.6,635.7 1156.8,635.6 1163.0,635.5 1169.0,635.3 1175.0,635.2 1180.8,635.0 1186.4,634.9 1192.9,634.6 1199.3,634.4 1205.4,634.1 1211.5,633.8 1217.4,633.4 1223.3,633.1 1229.1,632.8 1235.0,632.5 1241.0,632.1 1244.0,632.0" stroke="#f2f2f2" stroke-width="8.4" fill="none" stroke-linecap="round" stroke-linejoin="round"/><path d="M1098.1,634.4 1104.3,634.3 1110.6,634.2 1116.9,634.1 1123.3,634.1 1129.6,634.0 1136.0,633.9 1142.4,633.8 1148.7,633.7 1154.9,633.7 1161.1,633.5 1167.1,633.4 1173.0,633.3 1178.8,633.1 1184.5,633.0 1191.0,632.7 1197.4,632.5 1203.5,632.2 1209.5,631.9 1215.5,631.5 1221.3,631.2 1227.2,630.9 1233.1,630.6 1239.0,630.2 1242.1,630.1" stroke="#f5f5f5" stroke-width="7.2" fill="none" stroke-linecap="round" stroke-linejoin="round"/><path d="M1287.2,634.9 1293.3,635.7 1299.6,636.4 1306.1,637.0 1312.6,637.6 1319.1,638.1 1325.6,638.7 1331.9,639.4 1338.0,640.3 1343.9,641.3 1349.4,642.7 1354.5,644.4 1359.2,646.4 1364.8,649.9 1369.6,654.0 1373.9,658.5 1377.9,663.3 1381.8,668.2 1385.8,672.9 1388.0,675.2" stroke="#f1f1f1" stroke-width="8.4" fill="none" stroke-linecap="round" stroke-linejoin="round"/><path d="M1285.9,633.4 1292.0,634.2 1298.3,635.0 1304.8,635.5 1311.3,636.1 1317.8,636.6 1324.3,637.2 1330.6,637.9 1336.7,638.8 1342.6,639.9 1348.1,641.2 1353.2,642.9 1357.9,644.9 1363.5,648.4 1368.3,652.5 1372.6,657.0 1376.6,661.8 1380.5,666.7 1384.5,671.4 1386.7,673.7" stroke="#f5f5f5" stroke-width="7.2" fill="none" stroke-linecap="round" stroke-linejoin="round"/><path d="M1307.3,646.4 1306.4,652.4 1305.4,658.4 1304.5,664.4 1303.5,670.4 1302.5,676.4 1301.6,682.4 1300.6,688.4 1299.7,694.4 1298.7,700.4 1297.7,706.4 1296.8,712.4 1295.8,718.4 1295.8,718.4" stroke="#f1f1f1" stroke-width="7.0" fill="none" stroke-linecap="round" stroke-linejoin="round"/><path d="M1306.6,644.4 1305.7,650.4 1304.7,656.4 1303.8,662.4 1302.8,668.4 1301.8,674.4 1300.9,680.4 1299.9,686.4 1299.0,692.4 1298.0,698.4 1297.0,704.4 1296.1,710.4 1295.1,716.4 1295.1,716.4" stroke="#f5f5f5" stroke-width="6.0" fill="none" stroke-linecap="round" stroke-linejoin="round"/><path d="M1402.4,862.4 1403.9,868.5 1405.4,874.7 1406.9,880.9 1408.5,887.2 1410.0,893.4 1411.5,899.5 1413.0,905.6 1414.5,911.5 1416.0,917.2 1417.7,923.3 1419.5,929.7 1421.2,935.9 1423.0,942.0 1424.8,947.9 1426.5,953.9 1428.3,960.0 1428.3,960.0" stroke="#f1f1f1" stroke-width="8.4" fill="none" stroke-linecap="round" stroke-linejoin="round"/><path d="M1400.2,860.8 1401.7,867.0 1403.2,873.2 1404.7,879.4 1406.3,885.6 1407.8,891.9 1409.3,898.0 1410.8,904.0 1412.3,909.9 1413.8,915.7 1415.5,921.8 1417.3,928.2 1419.0,934.4 1420.8,940.4 1422.6,946.4 1424.3,952.4 1426.1,958.5 1426.1,958.5" stroke="#f5f5f5" stroke-width="7.2" fill="none" stroke-linecap="round" stroke-linejoin="round"/><path d="M1100.0,920.0 1106.2,920.3 1112.4,920.7 1118.7,921.2 1125.0,921.8 1131.2,922.5 1137.5,923.1 1143.8,923.7 1150.0,924.1 1156.2,924.5 1162.4,924.7 1168.5,924.6 1174.5,924.3 1180.5,923.8 1186.4,922.9 1192.2,921.6 1198.0,920.0 1203.6,918.1 1209.2,916.0 1214.8,913.6 1220.3,911.1 1225.7,908.5 1231.2,905.7 1236.6,903.0 1242.1,900.2 1247.5,897.5 1253.0,894.9 1258.5,892.4 1261.3,891.2" stroke="#ebebeb" stroke-width="8.4" fill="none" stroke-linecap="round" stroke-linejoin="round"/><path d="M1098.2,919.4 1104.4,919.7 1110.7,920.1 1116.9,920.6 1123.2,921.2 1129.5,921.9 1135.8,922.5 1142.0,923.1 1148.3,923.5 1154.5,923.9 1160.6,924.1 1166.7,924.0 1172.8,923.7 1178.8,923.2 1184.6,922.3 1190.5,921.0 1196.2,919.4 1201.9,917.5 1207.5,915.4 1213.0,913.0 1218.5,910.5 1224.0,907.9 1229.4,905.1 1234.9,902.4 1240.3,899.6 1245.8,896.9 1251.2,894.3 1256.7,891.8 1259.5,890.6" stroke="#f0f0f0" stroke-width="7.2" fill="none" stroke-linecap="round" stroke-linejoin="round"/><path d="M1157.6,626.2 1163.6,626.7 1169.8,627.1 1175.9,627.4 1182.1,627.7 1188.3,628.0 1194.5,628.3 1200.7,628.7 1206.7,629.2 1212.6,629.7 1218.5,630.3 1224.1,631.1 1229.6,632.0 1235.8,633.3 1241.8,634.8 1247.6,636.4 1253.3,638.2 1258.9,640.0 1264.5,641.9 1270.0,643.7 1275.7,645.5 1278.5,646.4" stroke="#eeeeee" stroke-width="8.4" fill="none" stroke-linecap="round" stroke-linejoin="round"/><path d="M1155.5,627.9 1161.6,628.3 1167.7,628.7 1173.9,629.0 1180.1,629.3 1186.3,629.7 1192.4,630.0 1198.6,630.4 1204.6,630.8 1210.6,631.3 1216.4,632.0 1222.0,632.7 1227.5,633.6 1233.7,634.9 1239.7,636.4 1245.6,638.1 1251.2,639.8 1256.8,641.7 1262.4,643.5 1268.0,645.4 1273.6,647.2 1276.5,648.0" stroke="#f3f3f3" stroke-width="7.2" fill="none" stroke-linecap="round" stroke-linejoin="round"/><path d="M814.0,1274.0 820.0,1275.2 825.9,1276.4 831.9,1277.6 837.8,1278.8 843.7,1280.0 849.6,1281.2 855.5,1282.5 861.4,1283.7 867.4,1284.9 873.4,1286.1 879.4,1287.3 885.4,1288.5 891.6,1289.6 897.7,1290.8 904.0,1292.0 909.7,1293.0 915.5,1294.1 921.4,1295.1 927.3,1296.2 933.2,1297.3 939.2,1298.4 945.2,1299.4 951.3,1300.5 957.3,1301.5 963.4,1302.6 969.5,1303.6 975.6,1304.6 981.7,1305.5 987.8,1306.5 993.8,1307.4 999.9,1308.3 1006.0,1309.1 1012.0,1310.0 1018.0,1310.8 1024.0,1311.6 1030.1,1312.4 1036.1,1313.1 1042.2,1313.9 1048.3,1314.7 1054.4,1315.4 1060.5,1316.1 1066.5,1316.8 1072.6,1317.4 1078.7,1318.0 1084.7,1318.6 1090.7,1319.1 1096.6,1319.5 1102.5,1319.9 1108.4,1320.3 1114.2,1320.6 1120.0,1320.8 1126.2,1320.9 1132.4,1320.9 1138.5,1320.9 1144.5,1320.7 1150.6,1320.5 1156.5,1320.2 1162.5,1319.9 1168.4,1319.6 1174.4,1319.2 1180.3,1318.8 1186.2,1318.5 1192.1,1318.1 1198.0,1317.7 1204.0,1317.4 1210.0,1317.2 1210.0,1317.2" stroke="#ebebeb" stroke-width="9.8" fill="none" stroke-linecap="round" stroke-linejoin="round"/><path d="M814.5,1272.4 820.5,1273.6 826.4,1274.8 832.4,1276.0 838.3,1277.3 844.2,1278.5 850.1,1279.7 856.0,1280.9 861.9,1282.1 867.9,1283.3 873.9,1284.5 879.9,1285.7 885.9,1286.9 892.1,1288.1 898.2,1289.3 904.5,1290.4 910.2,1291.5 916.0,1292.5 921.9,1293.6 927.8,1294.7 933.7,1295.7 939.7,1296.8 945.7,1297.9 951.8,1298.9 957.8,1300.0 963.9,1301.0 970.0,1302.0 976.1,1303.0 982.2,1304.0 988.3,1304.9 994.3,1305.9 1000.4,1306.7 1006.5,1307.6 1012.5,1308.4 1018.5,1309.2 1024.5,1310.0 1030.6,1310.8 1036.6,1311.6 1042.7,1312.4 1048.8,1313.1 1054.9,1313.8 1061.0,1314.6 1067.1,1315.2 1073.1,1315.9 1079.2,1316.5 1085.2,1317.0 1091.2,1317.5 1097.1,1318.0 1103.0,1318.4 1108.9,1318.7 1114.7,1319.0 1120.5,1319.2 1126.7,1319.3 1132.9,1319.4 1139.0,1319.3 1145.0,1319.2 1151.1,1319.0 1157.0,1318.7 1163.0,1318.4 1168.9,1318.0 1174.9,1317.7 1180.8,1317.3 1186.7,1316.9 1192.6,1316.5 1198.5,1316.2 1204.5,1315.9 1210.5,1315.6 1210.5,1315.6" stroke="#f0f0f0" stroke-width="8.4" fill="none" stroke-linecap="round" stroke-linejoin="round"/><path d="M814.0,1288.4 820.0,1289.6 826.0,1290.8 831.9,1292.1 837.9,1293.3 843.8,1294.6 849.7,1295.9 855.6,1297.2 861.6,1298.5 867.5,1299.8 873.4,1301.0 879.4,1302.3 885.3,1303.6 891.3,1304.8 897.3,1306.0 903.3,1307.2 909.3,1308.3 915.4,1309.5 921.5,1310.6 927.6,1311.6 933.8,1312.6 940.0,1313.6 945.8,1314.4 951.7,1315.3 957.6,1316.1 963.6,1316.9 969.6,1317.7 975.7,1318.5 981.8,1319.3 988.0,1320.0 994.1,1320.8 1000.3,1321.5 1006.4,1322.2 1012.6,1322.8 1018.7,1323.4 1024.9,1324.0 1031.0,1324.6 1037.1,1325.1 1043.2,1325.6 1049.2,1326.1 1055.1,1326.5 1061.0,1326.9 1066.9,1327.2 1072.7,1327.5 1078.4,1327.8 1084.0,1328.0 1090.4,1328.1 1096.6,1328.2 1102.9,1328.2 1109.0,1328.2 1115.1,1328.0 1121.1,1327.9 1127.1,1327.6 1133.0,1327.4 1138.9,1327.1 1144.8,1326.8 1150.7,1326.5 1156.5,1326.1 1162.4,1325.8 1168.3,1325.4 1174.1,1325.1 1180.0,1324.8 1186.0,1324.6 1192.0,1324.4 1192.0,1324.4" stroke="#f1f1f1" stroke-width="8.4" fill="none" stroke-linecap="round" stroke-linejoin="round"/><path d="M812.9,1287.7 818.9,1288.9 824.9,1290.1 830.8,1291.4 836.8,1292.7 842.7,1293.9 848.6,1295.2 854.6,1296.5 860.5,1297.8 866.4,1299.1 872.3,1300.4 878.3,1301.6 884.2,1302.9 890.2,1304.1 896.2,1305.3 902.2,1306.5 908.2,1307.7 914.3,1308.8 920.4,1309.9 926.5,1310.9 932.7,1311.9 938.9,1312.9 944.7,1313.8 950.6,1314.6 956.5,1315.4 962.5,1316.3 968.6,1317.1 974.6,1317.9 980.7,1318.6 986.9,1319.4 993.0,1320.1 999.2,1320.8 1005.3,1321.5 1011.5,1322.1 1017.7,1322.8 1023.8,1323.3 1029.9,1323.9 1036.0,1324.4 1042.1,1324.9 1048.1,1325.4 1054.0,1325.8 1059.9,1326.2 1065.8,1326.5 1071.6,1326.8 1077.3,1327.1 1082.9,1327.3 1089.3,1327.5 1095.6,1327.5 1101.8,1327.6 1107.9,1327.5 1114.0,1327.4 1120.0,1327.2 1126.0,1327.0 1131.9,1326.7 1137.8,1326.4 1143.7,1326.1 1149.6,1325.8 1155.4,1325.4 1161.3,1325.1 1167.2,1324.8 1173.1,1324.5 1179.0,1324.2 1184.9,1323.9 1190.9,1323.7 1190.9,1323.7" stroke="#f5f5f5" stroke-width="7.2" fill="none" stroke-linecap="round" stroke-linejoin="round"/><path d="M896.8,1205.6 902.9,1206.0 908.9,1206.5 915.0,1207.0 921.0,1207.6 927.0,1208.1 933.0,1208.6 939.1,1209.2 945.2,1209.6 951.2,1210.1 957.4,1210.4 963.5,1210.7 969.7,1210.9 976.0,1211.0 981.8,1210.9 987.7,1210.8 993.6,1210.6 999.6,1210.4 1005.6,1210.0 1011.6,1209.6 1017.6,1209.2 1023.6,1208.8 1029.7,1208.3 1035.8,1207.8 1041.8,1207.3 1047.9,1206.8 1053.9,1206.4 1060.0,1206.0 1066.0,1205.6 1066.0,1205.6" stroke="#f2f2f2" stroke-width="7.0" fill="none" stroke-linecap="round" stroke-linejoin="round"/><path d="M896.2,1203.9 902.3,1204.4 908.3,1204.8 914.4,1205.4 920.4,1205.9 926.4,1206.5 932.5,1207.0 938.5,1207.5 944.6,1208.0 950.6,1208.4 956.8,1208.8 962.9,1209.0 969.1,1209.2 975.4,1209.3 981.2,1209.3 987.1,1209.2 993.0,1209.0 999.0,1208.7 1005.0,1208.4 1011.0,1208.0 1017.0,1207.6 1023.0,1207.1 1029.1,1206.6 1035.2,1206.1 1041.2,1205.7 1047.3,1205.2 1053.3,1204.7 1059.4,1204.3 1065.4,1203.9 1065.4,1203.9" stroke="#f5f5f5" stroke-width="6.0" fill="none" stroke-linecap="round" stroke-linejoin="round"/><path d="M911.2,1227.2 917.4,1227.7 923.6,1228.2 929.9,1228.7 936.1,1229.2 942.4,1229.7 948.6,1230.2 954.8,1230.7 961.0,1231.2 967.0,1231.8 973.0,1232.3 979.1,1232.9 985.3,1233.4 991.3,1234.0 997.3,1234.6 1003.3,1235.2 1009.2,1235.8 1015.1,1236.5 1021.0,1237.1 1027.0,1237.7 1030.0,1238.0" stroke="#f2f2f2" stroke-width="7.0" fill="none" stroke-linecap="round" stroke-linejoin="round"/><path d="M912.7,1229.3 918.9,1229.9 925.2,1230.4 931.4,1230.9 937.7,1231.4 943.9,1231.9 950.2,1232.4 956.4,1232.9 962.5,1233.4 968.6,1233.9 974.6,1234.5 980.6,1235.0 986.8,1235.6 992.9,1236.2 998.9,1236.8 1004.8,1237.4 1010.7,1238.0 1016.7,1238.6 1022.6,1239.2 1028.5,1239.8 1031.5,1240.1" stroke="#f5f5f5" stroke-width="6.0" fill="none" stroke-linecap="round" stroke-linejoin="round"/><path d="M875.2,1040.0 881.4,1039.5 887.6,1038.9 893.7,1038.2 899.9,1037.6 906.1,1037.1 912.4,1036.7 918.8,1036.4 924.9,1036.4 930.8,1036.5 936.7,1036.8 942.7,1037.2 948.7,1037.7 954.8,1038.2 960.9,1038.8 966.9,1039.3 973.0,1039.8 976.0,1040.0" stroke="#efefef" stroke-width="8.4" fill="none" stroke-linecap="round" stroke-linejoin="round"/><path d="M875.0,1039.9 881.3,1039.4 887.4,1038.8 893.6,1038.2 899.8,1037.5 906.0,1037.0 912.3,1036.6 918.6,1036.4 924.7,1036.3 930.6,1036.5 936.6,1036.8 942.6,1037.2 948.6,1037.6 954.7,1038.2 960.7,1038.7 966.8,1039.2 972.8,1039.7 975.8,1039.9" stroke="#f4f4f4" stroke-width="7.2" fill="none" stroke-linecap="round" stroke-linejoin="round"/><path d="M994.0,1040.0 999.9,1039.6 1005.8,1039.1 1011.7,1038.6 1017.6,1038.0 1023.4,1037.6 1029.4,1037.1 1035.5,1036.8 1041.6,1036.5 1048.0,1036.4 1053.6,1036.4 1059.4,1036.5 1065.2,1036.7 1071.2,1037.0 1077.2,1037.3 1083.3,1037.7 1089.4,1038.1 1095.6,1038.5 1101.7,1038.9 1107.9,1039.3 1113.9,1039.7 1120.0,1040.0 1120.0,1040.0" stroke="#efefef" stroke-width="8.4" fill="none" stroke-linecap="round" stroke-linejoin="round"/><path d="M992.2,1038.2 998.1,1037.8 1004.0,1037.3 1009.9,1036.8 1015.7,1036.3 1021.6,1035.8 1027.6,1035.4 1033.6,1035.0 1039.8,1034.8 1046.2,1034.6 1051.8,1034.6 1057.6,1034.8 1063.4,1035.0 1069.4,1035.2 1075.4,1035.5 1081.5,1035.9 1087.6,1036.3 1093.8,1036.7 1099.9,1037.1 1106.0,1037.5 1112.1,1037.9 1118.1,1038.2 1118.1,1038.2" stroke="#f4f4f4" stroke-width="7.2" fill="none" stroke-linecap="round" stroke-linejoin="round"/><path d="M882.4,1119.2 888.5,1118.7 894.8,1118.1 901.1,1117.4 907.4,1116.7 913.6,1116.1 919.8,1115.5 925.9,1115.2 931.7,1115.1 937.3,1115.3 943.3,1116.1 949.6,1117.4 955.6,1119.2 961.5,1121.3 967.2,1123.4 973.0,1125.4 976.0,1126.4" stroke="#efefef" stroke-width="8.4" fill="none" stroke-linecap="round" stroke-linejoin="round"/><path d="M881.7,1118.1 887.8,1117.7 894.1,1117.1 900.4,1116.4 906.7,1115.7 913.0,1115.0 919.1,1114.5 925.2,1114.1 931.0,1114.1 936.6,1114.3 942.6,1115.0 949.0,1116.4 955.0,1118.2 960.8,1120.2 966.5,1122.4 972.3,1124.4 975.3,1125.3" stroke="#f4f4f4" stroke-width="7.2" fill="none" stroke-linecap="round" stroke-linejoin="round"/><path d="M994.0,1119.2 1000.3,1119.1 1006.6,1119.0 1012.9,1118.9 1019.2,1118.8 1025.5,1118.7 1031.9,1118.7 1038.3,1118.8 1044.7,1119.0 1051.0,1119.4 1057.0,1119.9 1063.0,1120.5 1069.1,1121.1 1075.3,1121.9 1081.4,1122.7 1087.6,1123.6 1093.8,1124.4 1100.0,1125.2 1106.1,1126.0 1109.2,1126.4" stroke="#efefef" stroke-width="8.4" fill="none" stroke-linecap="round" stroke-linejoin="round"/><path d="M995.4,1117.7 1001.8,1117.6 1008.1,1117.6 1014.4,1117.4 1020.7,1117.3 1027.0,1117.2 1033.3,1117.2 1039.7,1117.3 1046.2,1117.5 1052.4,1117.9 1058.4,1118.4 1064.5,1119.0 1070.6,1119.7 1076.7,1120.4 1082.9,1121.2 1089.1,1122.1 1095.2,1122.9 1101.4,1123.7 1107.6,1124.5 1110.6,1124.9" stroke="#f4f4f4" stroke-width="7.2" fill="none" stroke-linecap="round" stroke-linejoin="round"/><path d="M760.0,870.8 766.0,872.2 772.1,873.8 778.2,875.4 784.4,877.0 790.6,878.7 796.8,880.4 803.0,882.1 809.1,883.8 815.3,885.5 821.4,887.1 827.5,888.6 833.5,890.0 839.5,891.4 845.4,892.6 851.2,893.7 856.9,894.6 862.5,895.4 868.0,896.0 874.5,896.4 880.8,896.6 886.9,896.6 893.0,896.4 898.9,896.0 904.8,895.5 910.7,895.0 916.5,894.4 922.3,893.8 928.1,893.2 934.0,892.8 940.0,892.4 940.0,892.4" stroke="#eeeeee" stroke-width="8.4" fill="none" stroke-linecap="round" stroke-linejoin="round"/><path d="M757.9,872.8 763.9,874.2 770.0,875.8 776.1,877.4 782.3,879.0 788.5,880.7 794.7,882.4 800.9,884.1 807.0,885.8 813.2,887.4 819.3,889.0 825.4,890.6 831.4,892.0 837.4,893.4 843.3,894.6 849.1,895.7 854.8,896.6 860.4,897.4 865.9,898.0 872.4,898.4 878.7,898.6 884.8,898.6 890.9,898.4 896.8,898.0 902.7,897.5 908.6,897.0 914.4,896.4 920.2,895.8 926.0,895.2 931.9,894.7 937.9,894.4 937.9,894.4" stroke="#f3f3f3" stroke-width="7.2" fill="none" stroke-linecap="round" stroke-linejoin="round"/><path d="M1030.0,888.8 1036.0,890.0 1041.9,891.3 1047.8,892.7 1053.7,894.0 1059.6,895.4 1065.5,896.8 1071.4,898.2 1077.4,899.5 1083.3,900.8 1089.3,902.1 1095.3,903.2 1101.4,904.3 1107.5,905.3 1113.7,906.1 1120.0,906.8 1126.0,907.4 1132.2,907.9 1138.6,908.3 1145.2,908.7 1151.9,909.0 1158.7,909.3 1165.5,909.4 1172.3,909.6 1179.0,909.6 1185.7,909.6 1192.2,909.5 1198.5,909.3 1204.5,909.1 1210.4,908.7 1215.9,908.3 1221.0,907.8 1225.7,907.1 1231.6,906.1 1238.2,904.4 1243.9,902.4 1249.2,900.3 1254.5,898.1 1260.0,896.0 1260.0,896.0" stroke="#eeeeee" stroke-width="8.4" fill="none" stroke-linecap="round" stroke-linejoin="round"/><path d="M1030.1,887.2 1036.1,888.5 1042.0,889.8 1048.0,891.1 1053.9,892.5 1059.8,893.9 1065.7,895.3 1071.6,896.6 1077.5,898.0 1083.4,899.3 1089.4,900.5 1095.4,901.7 1101.5,902.7 1107.6,903.7 1113.8,904.5 1120.1,905.2 1126.1,905.8 1132.3,906.3 1138.8,906.7 1145.4,907.1 1152.1,907.4 1158.8,907.7 1165.6,907.9 1172.4,908.0 1179.2,908.1 1185.8,908.0 1192.3,907.9 1198.6,907.8 1204.7,907.5 1210.5,907.2 1216.0,906.7 1221.1,906.2 1225.9,905.6 1231.8,904.6 1238.3,902.9 1244.0,900.9 1249.3,898.7 1254.6,896.5 1260.1,894.4 1260.1,894.4" stroke="#f3f3f3" stroke-width="7.2" fill="none" stroke-linecap="round" stroke-linejoin="round"/><path d="M850.0,932.0 856.0,932.2 862.0,932.4 867.9,932.6 873.9,932.8 879.8,933.0 885.7,933.2 891.7,933.4 897.6,933.7 903.5,933.9 909.5,934.1 915.4,934.3 921.4,934.5 927.4,934.7 933.4,934.9 939.4,935.1 945.4,935.2 951.5,935.3 957.5,935.4 963.7,935.5 969.8,935.6 976.0,935.6 981.8,935.6 987.7,935.6 993.7,935.5 999.7,935.4 1005.7,935.4 1011.8,935.2 1017.9,935.1 1024.0,935.0 1030.2,934.8 1036.3,934.7 1042.5,934.5 1048.7,934.3 1054.8,934.1 1061.0,933.9 1067.1,933.7 1073.2,933.5 1079.2,933.3 1085.2,933.1 1091.2,932.9 1097.1,932.7 1102.9,932.5 1108.7,932.3 1114.4,932.2 1120.0,932.0 1126.4,931.8 1132.7,931.6 1138.9,931.4 1145.0,931.2 1151.1,931.0 1157.1,930.8 1163.1,930.6 1169.0,930.4 1174.9,930.2 1180.8,930.0 1186.7,929.8 1192.5,929.6 1198.4,929.4 1204.3,929.2 1210.1,929.0 1216.0,928.8 1222.0,928.6 1228.0,928.4 1228.0,928.4" stroke="#f3f3f3" stroke-width="8.4" fill="none" stroke-linecap="round" stroke-linejoin="round"/><path d="M850.2,929.9 856.2,930.1 862.1,930.3 868.1,930.5 874.1,930.7 880.0,930.9 885.9,931.1 891.9,931.4 897.8,931.6 903.7,931.8 909.7,932.0 915.6,932.2 921.6,932.4 927.6,932.6 933.6,932.8 939.6,933.0 945.6,933.1 951.6,933.2 957.7,933.4 963.8,933.4 970.0,933.5 976.2,933.5 982.0,933.5 987.9,933.5 993.9,933.4 999.9,933.4 1005.9,933.3 1012.0,933.2 1018.1,933.0 1024.2,932.9 1030.4,932.8 1036.5,932.6 1042.7,932.4 1048.9,932.2 1055.0,932.0 1061.1,931.8 1067.3,931.6 1073.3,931.4 1079.4,931.2 1085.4,931.0 1091.3,930.8 1097.2,930.6 1103.1,930.4 1108.9,930.3 1114.5,930.1 1120.2,929.9 1126.5,929.7 1132.8,929.5 1139.1,929.3 1145.2,929.1 1151.3,928.9 1157.3,928.7 1163.3,928.5 1169.2,928.3 1175.1,928.1 1181.0,927.9 1186.9,927.7 1192.7,927.5 1198.6,927.3 1204.5,927.1 1210.3,926.9 1216.2,926.7 1222.2,926.5 1228.2,926.3 1228.2,926.3" stroke="#f5f5f5" stroke-width="7.2" fill="none" stroke-linecap="round" stroke-linejoin="round"/><path d="M821.2,978.8 819.8,984.8 818.3,990.9 816.9,997.2 815.5,1003.6 814.2,1010.1 812.8,1016.6 811.4,1023.2 810.0,1029.7 808.6,1036.3 807.3,1042.8 805.9,1049.3 804.5,1055.6 803.1,1061.9 801.7,1068.1 800.2,1074.1 798.8,1079.9 797.3,1085.5 795.8,1091.0 794.3,1096.1 792.8,1101.0 791.2,1105.6 789.6,1110.0 787.2,1115.6 784.0,1122.1 780.7,1127.8 777.3,1132.9 773.9,1137.8 770.5,1142.7 767.2,1148.0 767.2,1148.0" stroke="#f1f1f1" stroke-width="8.4" fill="none" stroke-linecap="round" stroke-linejoin="round"/><path d="M821.3,980.9 819.9,986.9 818.5,993.1 817.1,999.3 815.7,1005.7 814.3,1012.2 812.9,1018.7 811.5,1025.3 810.1,1031.8 808.8,1038.4 807.4,1044.9 806.0,1051.4 804.6,1057.8 803.2,1064.0 801.8,1070.2 800.4,1076.2 798.9,1082.0 797.4,1087.6 795.9,1093.1 794.4,1098.2 792.9,1103.1 791.3,1107.8 789.7,1112.1 787.3,1117.7 784.1,1124.2 780.8,1129.9 777.4,1135.0 774.1,1139.9 770.7,1144.8 767.3,1150.1 767.3,1150.1" stroke="#f5f5f5" stroke-width="7.2" fill="none" stroke-linecap="round" stroke-linejoin="round"/><path d="M1156.0,996.8 1154.1,1002.6 1152.3,1008.3 1150.4,1014.1 1148.4,1019.9 1146.5,1025.6 1144.5,1031.4 1142.5,1037.2 1140.5,1042.9 1138.6,1048.7 1136.6,1054.5 1134.7,1060.3 1132.8,1066.0 1131.0,1071.8 1129.2,1077.5 1127.5,1083.3 1125.8,1089.0 1124.2,1094.8 1122.7,1100.5 1121.3,1106.3 1120.0,1112.0 1118.7,1118.0 1117.5,1124.0 1116.5,1130.1 1115.5,1136.1 1114.6,1142.1 1113.7,1148.1 1113.0,1154.1 1112.2,1160.1 1111.6,1166.1 1110.9,1172.1 1110.3,1178.0 1109.7,1184.0 1109.0,1190.0 1108.4,1196.0 1107.7,1202.0 1107.1,1208.0 1106.3,1214.0 1105.6,1220.0 1105.6,1220.0" stroke="#f1f1f1" stroke-width="8.4" fill="none" stroke-linecap="round" stroke-linejoin="round"/><path d="M1157.6,997.7 1155.7,1003.4 1153.9,1009.2 1152.0,1014.9 1150.0,1020.7 1148.1,1026.5 1146.1,1032.3 1144.1,1038.0 1142.1,1043.8 1140.2,1049.6 1138.2,1055.3 1136.3,1061.1 1134.4,1066.9 1132.6,1072.6 1130.8,1078.4 1129.1,1084.2 1127.4,1089.9 1125.8,1095.6 1124.3,1101.4 1122.9,1107.1 1121.6,1112.8 1120.3,1118.9 1119.1,1124.9 1118.1,1130.9 1117.1,1136.9 1116.2,1142.9 1115.3,1148.9 1114.6,1154.9 1113.8,1160.9 1113.2,1166.9 1112.5,1172.9 1111.9,1178.9 1111.3,1184.9 1110.6,1190.9 1110.0,1196.9 1109.3,1202.9 1108.7,1208.8 1107.9,1214.8 1107.2,1220.8 1107.2,1220.8" stroke="#f5f5f5" stroke-width="7.2" fill="none" stroke-linecap="round" stroke-linejoin="round"/><path d="M976.0,1166.0 976.3,1172.0 976.6,1178.0 976.9,1184.0 977.2,1190.0 977.5,1196.0 977.8,1202.0 978.1,1208.0 978.4,1214.0 978.7,1220.0 979.0,1226.0 979.3,1232.0 979.6,1238.0 979.6,1238.0" stroke="#f3f3f3" stroke-width="7.0" fill="none" stroke-linecap="round" stroke-linejoin="round"/><path d="M974.9,1165.4 975.2,1171.4 975.5,1177.4 975.8,1183.4 976.1,1189.4 976.4,1195.4 976.7,1201.4 977.0,1207.4 977.3,1213.4 977.6,1219.4 977.9,1225.4 978.2,1231.4 978.5,1237.4 978.5,1237.4" stroke="#f5f5f5" stroke-width="6.0" fill="none" stroke-linecap="round" stroke-linejoin="round"/><path d="M1192.0,932.0 1193.6,937.8 1195.2,943.7 1196.9,949.5 1198.7,955.3 1200.4,961.1 1202.2,967.0 1204.0,972.8 1205.8,978.6 1207.5,984.4 1209.2,990.2 1210.9,996.1 1212.5,1001.9 1214.1,1007.7 1215.5,1013.6 1216.9,1019.4 1218.2,1025.3 1219.3,1031.2 1220.3,1037.0 1221.2,1043.0 1221.9,1048.9 1222.5,1054.9 1223.0,1060.9 1223.4,1066.9 1223.7,1072.9 1223.9,1078.9 1224.0,1084.9 1224.1,1090.9 1224.1,1096.9 1224.1,1102.9 1224.1,1108.9 1224.1,1114.9 1224.0,1120.9 1224.0,1127.0 1224.1,1133.0 1224.1,1139.0 1224.3,1145.0 1224.4,1148.0" stroke="#f3f3f3" stroke-width="8.4" fill="none" stroke-linecap="round" stroke-linejoin="round"/><path d="M1190.5,933.2 1192.1,939.0 1193.7,944.9 1195.4,950.7 1197.2,956.5 1199.0,962.3 1200.7,968.1 1202.5,974.0 1204.3,979.8 1206.1,985.6 1207.8,991.4 1209.4,997.3 1211.1,1003.1 1212.6,1008.9 1214.1,1014.8 1215.4,1020.6 1216.7,1026.5 1217.8,1032.4 1218.8,1038.2 1219.7,1044.2 1220.5,1050.1 1221.1,1056.1 1221.5,1062.1 1221.9,1068.1 1222.2,1074.0 1222.4,1080.0 1222.5,1086.1 1222.6,1092.1 1222.6,1098.1 1222.6,1104.1 1222.6,1110.1 1222.6,1116.1 1222.6,1122.1 1222.6,1128.1 1222.6,1134.2 1222.7,1140.2 1222.8,1146.2 1222.9,1149.2" stroke="#f5f5f5" stroke-width="7.2" fill="none" stroke-linecap="round" stroke-linejoin="round"/><path d="M617.5,1158.0 614.9,1163.5 612.2,1169.0 609.5,1174.5 606.8,1180.0 604.1,1185.5 601.5,1191.0 599.1,1196.5 596.9,1202.0 595.0,1207.5 593.2,1213.5 591.7,1219.4 590.4,1225.3 589.2,1231.2 588.2,1237.1 587.3,1243.2 586.4,1249.3 585.6,1255.5 584.9,1261.5 584.3,1267.8 583.7,1274.1 583.3,1280.5 582.8,1286.9 582.4,1293.3 582.1,1299.6 581.7,1305.7 581.3,1312.0 580.9,1318.5 580.6,1324.8 580.3,1331.1 580.1,1337.3 579.8,1343.5 579.5,1349.7 579.2,1356.0 579.2,1356.0" stroke="#f0f0f0" stroke-width="9.8" fill="none" stroke-linecap="round" stroke-linejoin="round"/><path d="M617.6,1159.2 615.1,1164.7 612.4,1170.2 609.7,1175.7 606.9,1181.3 604.2,1186.8 601.7,1192.3 599.3,1197.8 597.1,1203.3 595.1,1208.7 593.3,1214.7 591.8,1220.6 590.5,1226.5 589.4,1232.4 588.4,1238.3 587.5,1244.4 586.6,1250.6 585.7,1256.7 585.0,1262.8 584.4,1269.0 583.9,1275.3 583.4,1281.7 583.0,1288.1 582.6,1294.5 582.2,1300.8 581.8,1307.0 581.4,1313.2 581.1,1319.7 580.8,1326.0 580.5,1332.3 580.2,1338.5 579.9,1344.7 579.7,1351.0 579.4,1357.2 579.4,1357.2" stroke="#f5f5f5" stroke-width="8.4" fill="none" stroke-linecap="round" stroke-linejoin="round"/><path d="M635.5,1155.8 632.9,1161.2 630.2,1166.7 627.4,1172.2 624.5,1177.7 621.7,1183.2 618.9,1188.7 616.2,1194.2 613.7,1199.6 611.3,1205.1 609.1,1210.6 607.1,1216.0 605.3,1221.9 603.7,1228.0 602.4,1234.1 601.2,1240.2 600.3,1246.3 599.5,1252.4 598.8,1258.6 598.2,1265.0 597.6,1271.6 597.0,1277.7 596.6,1283.3 596.3,1289.1 596.0,1294.9 595.8,1300.9 595.7,1306.9 595.6,1313.0 595.5,1319.2 595.4,1325.3 595.4,1331.5 595.3,1337.7 595.2,1343.9 595.1,1350.0 595.0,1356.0 595.0,1356.0" stroke="#f2f2f2" stroke-width="8.4" fill="none" stroke-linecap="round" stroke-linejoin="round"/><path d="M634.8,1154.5 632.1,1160.0 629.4,1165.5 626.6,1171.0 623.8,1176.5 621.0,1182.0 618.2,1187.5 615.5,1192.9 612.9,1198.4 610.5,1203.9 608.3,1209.4 606.4,1214.8 604.6,1220.7 603.0,1226.8 601.6,1232.9 600.5,1239.0 599.6,1245.0 598.8,1251.2 598.1,1257.4 597.4,1263.8 596.8,1270.4 596.3,1276.5 595.8,1282.1 595.5,1287.9 595.3,1293.7 595.1,1299.7 594.9,1305.7 594.8,1311.8 594.7,1318.0 594.7,1324.1 594.6,1330.3 594.6,1336.5 594.5,1342.6 594.4,1348.7 594.3,1354.8 594.3,1354.8" stroke="#f5f5f5" stroke-width="7.2" fill="none" stroke-linecap="round" stroke-linejoin="round"/><path d="M793.0,1095.0 790.8,1100.9 788.5,1106.9 786.1,1113.0 783.7,1119.0 781.4,1125.0 779.3,1130.8 777.4,1136.5 775.7,1141.9 774.2,1148.0 772.9,1154.4 772.0,1160.5 771.3,1166.7 770.5,1173.8 770.0,1179.2 769.5,1184.9 769.1,1191.0 768.8,1197.2 768.4,1203.7 768.0,1210.2 767.5,1216.8 766.8,1223.4 766.0,1230.0 765.1,1235.9 764.2,1242.0 763.1,1248.2 762.0,1254.4 760.8,1260.6 759.5,1266.9 758.2,1273.1 756.8,1279.3 755.4,1285.5 754.0,1291.6 752.5,1297.5 750.9,1303.6 749.2,1309.5 747.5,1315.4 745.7,1321.3 743.8,1327.1 741.9,1332.8 740.1,1338.6 738.2,1344.4 736.3,1350.2 734.5,1356.0 734.5,1356.0" stroke="#ededed" stroke-width="9.8" fill="none" stroke-linecap="round" stroke-linejoin="round"/><path d="M794.4,1097.1 792.2,1103.0 789.8,1109.0 787.5,1115.1 785.1,1121.1 782.8,1127.1 780.7,1133.0 778.7,1138.6 777.1,1144.0 775.5,1150.1 774.3,1156.5 773.4,1162.6 772.7,1168.9 771.9,1175.9 771.3,1181.3 770.9,1187.1 770.5,1193.1 770.1,1199.4 769.8,1205.8 769.3,1212.4 768.8,1219.0 768.2,1225.6 767.4,1232.1 766.5,1238.1 765.5,1244.1 764.5,1250.3 763.4,1256.5 762.2,1262.8 760.9,1269.0 759.6,1275.3 758.2,1281.5 756.8,1287.6 755.3,1293.7 753.9,1299.6 752.3,1305.7 750.6,1311.7 748.8,1317.6 747.0,1323.4 745.2,1329.2 743.3,1335.0 741.4,1340.7 739.6,1346.5 737.7,1352.3 735.9,1358.1 735.9,1358.1" stroke="#f2f2f2" stroke-width="8.4" fill="none" stroke-linecap="round" stroke-linejoin="round"/><path d="M667.0,1117.5 672.8,1119.8 678.5,1122.3 684.2,1124.8 689.9,1127.3 695.7,1129.6 701.5,1131.6 707.5,1133.2 713.4,1134.4 719.6,1135.3 726.0,1136.0 732.3,1136.4 738.5,1136.8 744.4,1137.1 749.9,1137.5 756.1,1138.1 762.7,1138.8 768.8,1139.4 775.0,1140.0 775.0,1140.0" stroke="#f1f1f1" stroke-width="8.4" fill="none" stroke-linecap="round" stroke-linejoin="round"/><path d="M668.6,1118.8 674.3,1121.2 680.0,1123.7 685.7,1126.2 691.4,1128.6 697.2,1130.9 703.1,1132.9 709.1,1134.6 715.0,1135.8 721.2,1136.7 727.5,1137.3 733.9,1137.8 740.1,1138.1 746.0,1138.5 751.5,1138.9 757.7,1139.5 764.2,1140.1 770.3,1140.7 776.6,1141.3 776.6,1141.3" stroke="#f5f5f5" stroke-width="7.2" fill="none" stroke-linecap="round" stroke-linejoin="round"/><path d="M853.8,1050.0 854.8,1056.1 855.8,1062.3 856.8,1068.4 857.8,1074.5 858.9,1080.7 859.9,1086.8 860.9,1093.0 861.9,1099.1 863.0,1105.2 864.0,1111.4 865.0,1117.5 866.0,1123.6 867.0,1129.8 868.1,1135.9 869.1,1142.0 870.1,1148.2 871.1,1154.3 872.2,1160.5 873.2,1166.6 874.2,1172.7 875.2,1178.9 876.2,1185.0 877.3,1191.1 878.3,1197.3 879.3,1203.4 880.3,1209.5 881.4,1215.7 882.4,1221.8 883.4,1228.0 884.4,1234.1 885.5,1240.2 886.5,1246.4 887.5,1252.5 887.5,1252.5" stroke="#f3f3f3" stroke-width="8.4" fill="none" stroke-linecap="round" stroke-linejoin="round"/><path d="M855.2,1051.1 856.2,1057.2 857.2,1063.3 858.2,1069.5 859.2,1075.6 860.3,1081.7 861.3,1087.9 862.3,1094.0 863.3,1100.1 864.4,1106.3 865.4,1112.4 866.4,1118.6 867.4,1124.7 868.4,1130.8 869.5,1137.0 870.5,1143.1 871.5,1149.2 872.5,1155.4 873.6,1161.5 874.6,1167.6 875.6,1173.8 876.6,1179.9 877.7,1186.1 878.7,1192.2 879.7,1198.3 880.7,1204.5 881.7,1210.6 882.8,1216.7 883.8,1222.9 884.8,1229.0 885.8,1235.1 886.9,1241.3 887.9,1247.4 888.9,1253.6 888.9,1253.6" stroke="#f5f5f5" stroke-width="7.2" fill="none" stroke-linecap="round" stroke-linejoin="round"/><path d="M1186.4,1060.8 1186.0,1066.9 1185.6,1073.1 1185.2,1079.2 1184.7,1085.4 1184.2,1091.6 1183.8,1097.8 1183.3,1104.0 1182.8,1110.1 1182.4,1116.3 1182.0,1122.4 1181.6,1128.6 1181.3,1134.7 1181.0,1140.7 1180.8,1146.7 1180.7,1152.7 1180.6,1158.6 1180.7,1164.8 1180.8,1171.1 1181.0,1177.4 1181.3,1183.7 1181.7,1189.8 1182.1,1196.0 1182.6,1202.1 1183.1,1208.3 1183.6,1214.3 1184.2,1220.4 1184.7,1226.5 1185.2,1232.6 1185.7,1238.8 1186.2,1244.9 1186.4,1248.0" stroke="#f2f2f2" stroke-width="8.4" fill="none" stroke-linecap="round" stroke-linejoin="round"/><path d="M1185.2,1060.9 1184.8,1067.0 1184.4,1073.1 1184.0,1079.3 1183.5,1085.5 1183.0,1091.7 1182.6,1097.8 1182.1,1104.0 1181.6,1110.2 1181.2,1116.4 1180.8,1122.5 1180.4,1128.6 1180.1,1134.7 1179.8,1140.8 1179.6,1146.8 1179.5,1152.8 1179.4,1158.7 1179.5,1164.9 1179.6,1171.2 1179.8,1177.5 1180.1,1183.7 1180.5,1189.9 1180.9,1196.1 1181.4,1202.2 1181.9,1208.3 1182.4,1214.4 1183.0,1220.5 1183.5,1226.6 1184.0,1232.7 1184.5,1238.8 1185.0,1245.0 1185.2,1248.1" stroke="#f5f5f5" stroke-width="7.2" fill="none" stroke-linecap="round" stroke-linejoin="round"/><path d="M1117.3,1104.0 1117.3,1110.2 1117.3,1116.3 1117.4,1122.5 1117.4,1128.7 1117.5,1134.8 1117.6,1141.0 1117.6,1147.2 1117.7,1153.4 1117.7,1159.5 1117.7,1165.7 1117.7,1171.9 1117.6,1178.0 1117.5,1184.2 1117.3,1190.4 1117.0,1196.6 1116.8,1202.7 1116.4,1208.9 1116.1,1215.1 1115.6,1221.2 1115.2,1227.4 1114.8,1233.6 1114.3,1239.8 1113.8,1245.9 1113.3,1252.1 1112.9,1258.3 1112.4,1264.4 1111.9,1270.6 1111.5,1276.8 1111.5,1276.8" stroke="#f3f3f3" stroke-width="8.4" fill="none" stroke-linecap="round" stroke-linejoin="round"/><path d="M1116.6,1101.9 1116.7,1108.1 1116.7,1114.3 1116.7,1120.4 1116.8,1126.6 1116.9,1132.8 1116.9,1138.9 1117.0,1145.1 1117.0,1151.3 1117.1,1157.5 1117.1,1163.6 1117.0,1169.8 1116.9,1176.0 1116.8,1182.1 1116.6,1188.3 1116.4,1194.5 1116.1,1200.7 1115.8,1206.8 1115.4,1213.0 1115.0,1219.2 1114.6,1225.3 1114.1,1231.5 1113.7,1237.7 1113.2,1243.9 1112.7,1250.0 1112.2,1256.2 1111.8,1262.4 1111.3,1268.5 1110.9,1274.7 1110.9,1274.7" stroke="#f5f5f5" stroke-width="7.2" fill="none" stroke-linecap="round" stroke-linejoin="round"/><path d="M1318.9,1276.8 1319.7,1283.0 1320.5,1289.2 1321.3,1295.4 1322.1,1301.6 1323.0,1307.8 1323.8,1313.9 1324.6,1320.0 1325.5,1326.2 1326.4,1332.4 1327.3,1338.6 1328.2,1344.7 1329.0,1350.8 1329.9,1356.9 1330.4,1360.0" stroke="#f2f2f2" stroke-width="8.4" fill="none" stroke-linecap="round" stroke-linejoin="round"/><path d="M1316.8,1275.8 1317.6,1282.0 1318.4,1288.2 1319.2,1294.4 1320.1,1300.6 1320.9,1306.8 1321.7,1312.9 1322.5,1319.0 1323.4,1325.2 1324.3,1331.4 1325.2,1337.6 1326.1,1343.7 1327.0,1349.8 1327.9,1356.0 1328.3,1359.0" stroke="#f5f5f5" stroke-width="7.2" fill="none" stroke-linecap="round" stroke-linejoin="round"/><path d="M1460.0,1262.4 1459.4,1268.5 1458.7,1274.7 1458.1,1280.9 1457.4,1287.2 1456.8,1293.4 1456.1,1299.5 1455.5,1305.6 1455.0,1311.5 1454.5,1317.2 1453.9,1323.3 1453.4,1329.7 1453.0,1335.9 1452.6,1341.9 1452.2,1347.9 1451.8,1353.9 1451.3,1360.0 1451.3,1360.0" stroke="#f2f2f2" stroke-width="8.4" fill="none" stroke-linecap="round" stroke-linejoin="round"/><path d="M1458.9,1263.2 1458.3,1269.3 1457.7,1275.5 1457.0,1281.8 1456.4,1288.0 1455.7,1294.2 1455.1,1300.4 1454.5,1306.4 1453.9,1312.3 1453.4,1318.0 1452.9,1324.1 1452.4,1330.5 1451.9,1336.7 1451.5,1342.8 1451.1,1348.8 1450.7,1354.8 1450.3,1360.8 1450.3,1360.8" stroke="#f5f5f5" stroke-width="7.2" fill="none" stroke-linecap="round" stroke-linejoin="round"/><path d="M1330.4,1109.7 1336.5,1111.5 1342.7,1113.4 1348.9,1115.3 1355.0,1117.1 1361.2,1118.8 1367.4,1120.2 1373.6,1121.3 1379.8,1122.1 1386.2,1122.8 1392.7,1123.4 1399.1,1123.7 1405.3,1123.5 1411.3,1122.7 1416.8,1121.3 1422.2,1118.7 1427.2,1115.2 1431.8,1111.1 1436.4,1106.7 1440.9,1102.3 1445.6,1098.2 1445.6,1098.2" stroke="#efefef" stroke-width="9.8" fill="none" stroke-linecap="round" stroke-linejoin="round"/><path d="M1332.4,1109.5 1338.6,1111.3 1344.7,1113.1 1350.9,1115.1 1357.0,1116.9 1363.2,1118.6 1369.4,1120.0 1375.6,1121.0 1381.8,1121.9 1388.2,1122.6 1394.7,1123.2 1401.1,1123.4 1407.3,1123.3 1413.3,1122.5 1418.8,1121.0 1424.2,1118.5 1429.2,1115.0 1433.8,1110.9 1438.4,1106.5 1442.9,1102.1 1447.6,1098.0 1447.6,1098.0" stroke="#f4f4f4" stroke-width="8.4" fill="none" stroke-linecap="round" stroke-linejoin="round"/><path d="M1100.0,1305.6 1106.1,1306.9 1112.1,1308.3 1118.2,1309.7 1124.2,1311.2 1130.3,1312.6 1136.3,1313.9 1142.4,1315.1 1148.5,1316.1 1154.6,1316.8 1160.6,1317.3 1166.7,1317.4 1172.7,1317.4 1178.8,1317.1 1184.8,1316.7 1190.9,1316.2 1197.0,1315.6 1203.1,1315.1 1209.1,1314.6 1215.2,1314.2 1215.2,1314.2" stroke="#eeeeee" stroke-width="9.8" fill="none" stroke-linecap="round" stroke-linejoin="round"/><path d="M1101.9,1307.7 1108.0,1309.0 1114.0,1310.4 1120.1,1311.9 1126.1,1313.3 1132.2,1314.7 1138.3,1316.1 1144.3,1317.2 1150.4,1318.2 1156.5,1319.0 1162.5,1319.4 1168.6,1319.6 1174.6,1319.5 1180.7,1319.2 1186.8,1318.8 1192.8,1318.3 1198.9,1317.8 1205.0,1317.2 1211.0,1316.7 1217.1,1316.4 1217.1,1316.4" stroke="#f3f3f3" stroke-width="8.4" fill="none" stroke-linecap="round" stroke-linejoin="round"/></g></g>
<path d="M761.4,625.4 764.4,624.5 767.4,623.7 770.2,622.5 773.1,621.3 775.9,620.0 778.9,618.8 781.9,617.6 784.6,616.4 787.3,615.3 790.1,614.1 793.0,613.0 795.9,611.8 798.8,610.7 801.7,609.6 804.7,608.5 807.7,607.5 810.7,606.6 813.8,605.6 816.9,604.7 820.2,603.8 823.4,603.0 826.6,602.1 829.9,601.3 833.1,600.5 836.2,599.7 839.3,598.9 842.6,598.0 846.0,597.1 849.2,596.2 852.5,595.3 855.6,594.4 858.8,593.5 861.9,592.7 865.0,591.9 868.4,591.2 871.6,590.5 874.9,589.9 878.2,589.2 881.4,588.6 884.7,588.0 887.9,587.4 887.7,586.0 884.4,586.5 881.1,586.9 877.9,587.4 874.6,587.9 871.3,588.4 867.9,588.9 864.5,589.5 861.3,590.2 858.1,590.9 854.9,591.6 851.7,592.4 848.4,593.1 845.1,594.0 841.8,594.9 838.5,595.8 835.4,596.6 832.3,597.4 829.1,598.2 825.8,599.0 822.6,599.9 819.3,600.8 816.1,601.6 812.9,602.6 809.7,603.5 806.7,604.5 803.6,605.5 800.6,606.6 797.6,607.7 794.7,608.9 791.8,610.0 788.9,611.2 786.1,612.3 783.4,613.5 780.7,614.6 777.6,615.8 774.7,617.1 771.8,618.3 769.0,619.6 766.2,620.8 763.5,622.4 760.8,624.1ZM771.2,625.4 768.1,625.2 765.0,624.9 761.8,624.6 758.6,624.5 755.2,624.6 751.9,624.9 748.5,625.4 745.0,626.1 741.5,626.8 738.0,627.8 734.6,629.0 731.6,630.2 728.5,631.7 725.5,633.2 722.6,634.9 719.6,636.8 716.8,638.7 714.1,640.7 711.7,642.6 709.3,644.6 707.0,646.6 704.8,648.8 702.6,651.0 700.5,653.4 698.5,655.8 696.5,658.3 694.6,660.9 692.8,663.6 691.1,666.4 689.4,669.3 687.8,672.3 686.3,675.3 684.8,678.4 683.3,681.4 681.9,684.5 680.7,687.3 679.5,690.0 678.3,692.8 677.1,695.7 676.0,698.5 674.9,701.5 673.9,704.4 672.9,707.4 672.0,710.4 671.1,713.4 670.3,716.5 669.5,719.5 668.8,722.6 668.2,725.7 667.6,728.8 667.0,732.0 666.5,735.2 666.0,738.4 665.6,741.6 665.2,744.8 664.9,748.0 664.7,751.1 664.5,754.2 664.3,757.4 664.2,760.6 664.2,763.8 664.3,767.0 664.4,770.2 664.5,773.3 664.7,776.5 664.9,779.6 665.2,782.8 665.6,785.9 665.9,789.1 666.4,792.3 666.8,795.5 667.4,798.8 668.0,802.1 668.6,805.3 669.3,808.6 670.0,811.8 670.8,814.9 671.6,818.0 672.4,821.0 673.2,823.9 674.1,827.1 675.1,830.2 676.1,833.4 677.3,836.3 678.5,839.2 679.7,842.0 681.0,844.6 682.4,847.0 684.5,850.3 686.8,853.1 689.2,855.7 691.4,858.4 692.6,857.5 690.4,854.7 688.3,852.0 686.2,849.1 684.4,845.9 683.2,843.5 682.1,840.9 681.1,838.2 680.1,835.3 679.2,832.3 678.2,829.3 677.2,826.2 676.3,823.0 675.5,820.1 674.7,817.2 673.9,814.2 673.2,811.1 672.4,807.9 671.8,804.7 671.1,801.5 670.5,798.2 670.0,795.0 669.5,791.8 669.1,788.7 668.7,785.6 668.4,782.5 668.1,779.4 667.9,776.3 667.7,773.2 667.6,770.1 667.5,766.9 667.4,763.8 667.4,760.7 667.5,757.6 667.7,754.4 667.9,751.3 668.1,748.2 668.4,745.1 668.8,742.0 669.2,738.8 669.7,735.7 670.2,732.5 670.7,729.4 671.3,726.3 672.0,723.2 672.7,720.2 673.4,717.3 674.2,714.3 675.0,711.3 676.0,708.4 676.9,705.4 678.0,702.5 679.0,699.7 680.1,696.8 681.2,694.0 682.4,691.3 683.6,688.5 684.8,685.9 686.2,682.8 687.7,679.7 689.1,676.7 690.7,673.8 692.2,670.9 693.8,668.1 695.5,665.3 697.2,662.7 699.0,660.2 700.9,657.8 702.9,655.5 705.0,653.2 707.1,651.1 709.2,649.0 711.4,647.0 713.7,645.1 716.0,643.3 718.7,641.3 721.4,639.5 724.2,637.7 727.1,636.0 730.0,634.5 732.9,633.2 735.8,632.0 739.0,630.9 742.3,629.9 745.7,629.2 749.0,628.6 752.3,628.1 755.5,627.7 758.7,627.4 761.8,627.2 764.9,627.1 768.0,627.0 771.2,626.9ZM693.7,848.5 692.1,851.3 690.5,854.1 688.9,856.9 687.4,859.8 686.0,862.9 684.8,866.1 683.9,869.2 683.0,872.3 682.3,875.5 681.5,878.8 680.9,882.2 680.2,885.5 679.6,888.9 679.0,892.3 678.4,895.3 677.9,898.4 677.5,901.4 677.0,904.4 676.6,907.5 676.1,910.7 675.7,914.0 675.2,917.4 674.7,921.1 674.3,923.7 673.9,926.5 673.5,929.3 673.1,932.4 672.7,935.5 672.2,938.7 671.8,941.9 671.3,945.3 670.9,948.6 670.4,952.0 670.0,955.4 669.5,958.7 669.1,962.0 668.6,965.3 668.2,968.5 667.8,971.6 667.3,974.6 666.9,977.5 666.6,980.2 666.2,982.8 665.6,986.5 665.1,989.9 664.6,993.1 664.1,996.2 663.6,999.2 663.1,1002.2 662.7,1005.2 662.3,1008.4 661.9,1011.7 661.5,1014.7 661.2,1017.8 660.8,1020.9 660.5,1024.0 660.2,1027.2 659.9,1030.4 659.6,1033.6 659.4,1036.8 659.2,1040.0 659.1,1043.2 659.0,1046.4 658.9,1049.5 658.9,1052.7 658.9,1055.9 658.9,1059.1 659.0,1062.3 659.1,1065.5 659.3,1068.7 659.5,1071.8 659.8,1075.0 660.1,1078.1 660.4,1081.1 660.9,1084.3 661.4,1087.4 662.1,1090.5 662.7,1093.6 663.4,1096.6 664.2,1099.6 664.9,1102.6 665.9,1105.5 666.9,1108.4 667.9,1111.3 669.2,1111.0 668.8,1107.9 668.4,1104.9 667.8,1101.8 667.1,1098.8 666.4,1095.9 665.7,1092.9 665.0,1089.9 664.4,1086.9 663.9,1083.8 663.4,1080.8 663.0,1077.7 662.7,1074.7 662.5,1071.6 662.3,1068.5 662.1,1065.4 662.0,1062.2 661.9,1059.0 661.9,1055.9 661.9,1052.7 661.9,1049.6 662.0,1046.4 662.1,1043.3 662.2,1040.1 662.4,1037.0 662.6,1033.8 662.9,1030.6 663.2,1027.5 663.5,1024.3 663.8,1021.2 664.1,1018.1 664.5,1015.0 664.8,1012.0 665.2,1008.8 665.7,1005.7 666.1,1002.7 666.6,999.7 667.1,996.7 667.6,993.6 668.1,990.3 668.6,986.9 669.2,983.3 669.5,980.7 669.9,977.9 670.3,975.0 670.7,972.0 671.2,968.9 671.6,965.7 672.0,962.4 672.5,959.1 672.9,955.8 673.4,952.4 673.9,949.0 674.3,945.7 674.8,942.3 675.2,939.1 675.6,935.9 676.1,932.8 676.5,929.8 676.9,926.9 677.3,924.1 677.6,921.5 678.2,917.9 678.6,914.4 679.1,911.1 679.5,907.9 680.0,904.8 680.4,901.8 680.9,898.9 681.4,895.9 682.0,892.8 682.6,889.5 683.2,886.1 683.8,882.7 684.5,879.4 685.2,876.2 685.9,873.0 686.8,870.0 687.7,867.1 688.8,864.0 690.1,861.0 691.2,858.0 692.5,855.0 693.7,852.1 694.9,849.0ZM668.1,1110.9 666.0,1113.3 664.5,1115.9 662.9,1118.5 661.3,1121.2 659.7,1123.8 658.2,1126.6 656.6,1129.4 655.1,1132.1 653.6,1135.0 652.1,1137.9 650.6,1140.8 649.1,1143.8 647.7,1146.7 646.3,1149.6 645.1,1152.5 643.8,1155.4 642.7,1158.3 641.6,1161.1 640.5,1163.9 639.5,1166.8 638.6,1169.8 637.8,1172.8 637.1,1175.9 636.5,1179.1 636.1,1182.4 635.6,1185.7 635.2,1189.0 635.1,1192.3 634.9,1195.7 634.6,1199.0 635.6,1199.1 636.3,1195.8 636.9,1192.6 637.4,1189.3 637.8,1186.0 638.2,1182.7 638.7,1179.5 639.3,1176.4 639.9,1173.4 640.7,1170.4 641.6,1167.5 642.6,1164.7 643.6,1161.9 644.7,1159.1 645.9,1156.3 647.1,1153.4 648.3,1150.5 649.7,1147.7 651.1,1144.7 652.6,1141.8 654.1,1138.9 655.6,1136.0 657.1,1133.2 658.6,1130.4 660.1,1127.6 661.6,1124.9 663.2,1122.3 664.8,1119.7 666.3,1117.0 667.9,1114.4 669.0,1111.4ZM835.4,653.6 838.7,653.6 842.0,653.6 845.3,653.5 848.5,653.4 851.8,653.4 855.0,653.4 858.3,653.4 861.5,653.5 864.7,653.8 867.8,654.1 871.0,654.5 874.2,655.0 877.3,655.5 880.5,656.1 883.6,656.7 886.8,657.3 890.0,657.9 893.1,658.5 896.3,659.2 899.5,659.9 902.8,660.7 906.0,661.4 909.2,662.2 912.4,663.1 915.5,663.9 918.7,664.8 921.8,665.7 924.7,666.6 927.6,667.5 930.5,668.4 933.4,669.3 936.2,670.3 939.1,671.3 941.9,672.3 944.7,673.3 947.5,674.3 950.6,675.4 953.7,676.6 956.7,677.8 959.8,679.0 962.9,680.0 966.1,680.9 969.2,681.8 972.4,682.7 973.1,680.8 970.2,679.3 967.3,677.8 964.4,676.2 961.4,674.9 958.3,673.7 955.3,672.5 952.2,671.3 949.0,670.2 946.2,669.1 943.4,668.1 940.5,667.1 937.6,666.1 934.8,665.2 931.9,664.2 928.9,663.3 926.0,662.4 923.0,661.5 919.9,660.6 916.7,659.7 913.5,658.8 910.3,658.0 907.0,657.2 903.8,656.4 900.5,655.6 897.3,654.9 894.0,654.2 890.8,653.6 887.6,653.0 884.4,652.4 881.2,651.9 877.9,651.5 874.7,651.1 871.4,650.8 868.2,650.5 864.9,650.4 861.6,650.3 858.3,650.3 855.0,650.4 851.7,650.6 848.4,650.8 845.2,651.0 841.9,651.3 838.6,651.5 835.4,651.7ZM752.3,801.2 753.0,804.3 753.7,807.5 754.3,810.6 755.0,813.8 755.7,817.0 756.4,820.2 757.3,823.4 758.3,826.6 759.5,829.8 760.7,832.7 761.9,835.6 763.1,838.6 764.4,841.6 765.8,844.6 767.2,847.6 768.7,850.5 770.3,853.5 772.0,856.3 773.7,859.1 775.6,861.8 777.5,864.5 779.4,867.1 781.5,869.7 783.6,872.2 785.8,874.7 788.1,877.1 790.5,879.5 792.9,881.7 795.3,884.0 797.8,886.1 800.4,888.1 802.8,889.9 805.3,891.7 807.8,893.4 810.4,895.0 813.0,896.6 815.7,898.1 818.4,899.5 821.2,900.9 824.0,902.2 826.8,903.4 829.7,904.6 832.5,905.7 835.5,906.7 838.6,907.6 841.7,908.5 844.8,909.3 848.0,910.0 851.2,910.7 854.4,911.3 857.6,911.7 860.8,912.2 864.1,912.5 867.3,912.8 870.5,913.0 873.6,913.0 876.8,913.0 879.9,912.8 883.1,912.6 886.2,912.2 889.3,911.8 892.5,911.4 895.6,911.0 898.7,910.5 901.9,910.0 905.0,909.6 908.2,909.2 911.1,908.8 914.0,908.5 917.0,908.1 920.0,907.7 922.9,907.2 925.9,906.7 928.9,906.1 931.9,905.6 934.9,905.1 937.9,904.6 940.9,904.0 943.9,903.5 946.9,903.0 949.8,902.5 949.6,901.0 946.6,901.3 943.6,901.6 940.6,902.0 937.6,902.3 934.6,902.7 931.5,903.0 928.5,903.3 925.5,903.7 922.5,904.0 919.5,904.3 916.6,904.7 913.6,905.1 910.7,905.5 907.8,905.8 904.6,906.2 901.4,906.7 898.2,907.1 895.1,907.6 892.0,908.1 888.9,908.5 885.8,908.9 882.8,909.2 879.7,909.4 876.7,909.6 873.7,909.6 870.6,909.6 867.5,909.4 864.4,909.1 861.2,908.8 858.1,908.4 855.0,907.9 851.8,907.3 848.7,906.7 845.6,906.0 842.5,905.2 839.5,904.4 836.6,903.4 833.7,902.5 830.9,901.4 828.1,900.3 825.4,899.1 822.7,897.8 820.0,896.5 817.3,895.1 814.7,893.6 812.2,892.1 809.7,890.5 807.2,888.9 804.8,887.2 802.5,885.4 800.0,883.5 797.6,881.4 795.2,879.2 792.8,877.0 790.6,874.7 788.4,872.4 786.2,870.0 784.1,867.5 782.1,865.0 780.2,862.5 778.3,859.9 776.6,857.3 774.9,854.6 773.3,851.8 771.8,848.9 770.3,846.1 768.9,843.1 767.5,840.2 766.2,837.3 765.0,834.3 763.8,831.4 762.7,828.6 761.6,825.5 760.5,822.4 759.6,819.3 758.6,816.2 757.6,813.1 756.7,810.0 755.7,807.0 754.8,803.9 753.8,800.8ZM786.4,878.4 787.6,881.3 788.7,884.2 789.9,887.2 791.1,890.1 792.3,893.0 793.4,895.9 794.6,898.8 795.9,901.7 797.2,904.6 798.3,907.4 799.4,910.1 800.5,912.7 801.6,915.4 802.7,918.1 803.8,920.9 805.0,923.7 806.2,926.8 807.4,930.0 808.7,933.4 809.5,935.7 810.5,938.2 811.5,940.9 812.6,943.6 813.7,946.5 814.8,949.5 815.9,952.5 817.1,955.6 818.3,958.8 819.5,962.0 820.7,965.2 821.9,968.4 823.1,971.7 824.2,974.9 825.4,978.1 826.5,981.3 827.5,984.4 828.5,987.4 829.5,990.4 830.4,993.3 831.2,996.0 832.0,998.7 832.7,1001.2 833.2,1003.5 834.1,1007.2 834.7,1010.6 835.3,1013.9 835.7,1017.0 836.0,1020.0 836.3,1022.9 836.5,1025.9 836.7,1029.0 836.9,1032.1 837.1,1035.2 837.2,1038.3 837.3,1041.4 837.3,1044.5 837.3,1047.6 837.2,1050.7 837.1,1054.0 837.0,1057.3 836.9,1060.7 836.9,1063.6 836.8,1066.5 836.7,1069.4 836.5,1072.4 836.4,1075.5 836.2,1078.6 836.1,1081.8 835.9,1084.9 835.7,1088.1 835.5,1091.3 835.3,1094.5 835.1,1097.6 834.9,1100.8 834.6,1103.9 834.4,1107.0 834.1,1110.0 833.9,1113.1 833.6,1116.2 833.3,1119.3 833.0,1122.4 832.7,1125.4 832.4,1128.5 832.1,1131.6 831.7,1134.7 831.4,1137.8 831.0,1140.9 830.7,1143.9 830.3,1147.0 830.0,1150.1 829.6,1153.2 829.2,1156.3 828.8,1159.3 828.4,1162.4 828.0,1165.5 827.5,1168.6 827.1,1171.7 826.7,1174.8 826.3,1177.8 825.8,1180.9 825.4,1184.0 825.0,1187.1 824.6,1190.2 824.2,1193.3 823.7,1196.4 823.3,1199.5 822.9,1202.6 822.5,1205.8 822.1,1208.9 821.6,1212.0 821.2,1215.1 820.8,1218.2 820.4,1221.3 820.0,1224.4 819.6,1227.4 819.2,1230.4 818.8,1233.4 818.4,1236.5 818.1,1239.6 817.8,1242.6 817.5,1245.7 817.2,1248.7 817.0,1251.6 816.7,1254.6 816.4,1257.6 816.1,1260.5 815.9,1263.5 815.6,1266.5 815.3,1269.5 816.7,1269.7 817.1,1266.7 817.5,1263.7 817.9,1260.8 818.4,1257.8 818.8,1254.9 819.2,1251.9 819.6,1249.0 820.1,1246.0 820.5,1243.0 821.0,1239.9 821.4,1236.9 821.8,1233.8 822.2,1230.8 822.6,1227.8 823.0,1224.8 823.4,1221.7 823.8,1218.6 824.2,1215.5 824.6,1212.4 825.0,1209.3 825.4,1206.2 825.9,1203.0 826.3,1199.9 826.7,1196.8 827.1,1193.7 827.5,1190.6 828.0,1187.5 828.4,1184.4 828.8,1181.3 829.2,1178.2 829.7,1175.2 830.1,1172.1 830.5,1169.0 830.9,1165.9 831.4,1162.8 831.8,1159.7 832.2,1156.6 832.6,1153.5 832.9,1150.5 833.3,1147.4 833.7,1144.3 834.0,1141.2 834.4,1138.1 834.7,1135.0 835.0,1131.9 835.4,1128.8 835.7,1125.7 836.0,1122.7 836.3,1119.6 836.6,1116.5 836.9,1113.4 837.1,1110.3 837.4,1107.2 837.6,1104.1 837.9,1101.0 838.1,1097.8 838.3,1094.7 838.5,1091.5 838.7,1088.3 838.9,1085.1 839.1,1081.9 839.2,1078.8 839.4,1075.7 839.5,1072.6 839.7,1069.5 839.8,1066.6 839.9,1063.7 839.9,1060.8 840.0,1057.4 840.1,1054.0 840.2,1050.8 840.3,1047.6 840.3,1044.5 840.3,1041.4 840.2,1038.2 840.1,1035.1 839.9,1031.9 839.7,1028.8 839.5,1025.7 839.3,1022.7 839.0,1019.7 838.7,1016.6 838.2,1013.4 837.7,1010.1 837.0,1006.6 836.2,1002.9 835.6,1000.4 834.9,997.9 834.1,995.2 833.3,992.4 832.4,989.5 831.4,986.5 830.4,983.4 829.3,980.3 828.2,977.1 827.1,973.9 825.9,970.7 824.7,967.4 823.5,964.2 822.3,960.9 821.1,957.7 819.9,954.6 818.7,951.4 817.6,948.4 816.5,945.4 815.4,942.6 814.3,939.8 813.3,937.2 812.4,934.7 811.5,932.3 810.2,928.9 808.9,925.7 807.8,922.7 806.6,919.8 805.5,917.0 804.4,914.3 803.3,911.6 802.2,908.9 801.1,906.2 799.9,903.5 798.7,900.5 797.4,897.6 796.1,894.7 794.7,891.9 793.3,889.1 791.9,886.3 790.4,883.5 789.0,880.7 787.6,877.9ZM1014.4,718.1 1013.3,721.1 1012.1,724.0 1011.0,727.0 1009.9,730.0 1008.7,732.9 1007.6,735.9 1006.4,739.0 1005.3,742.0 1004.4,745.2 1003.4,748.3 1002.5,751.3 1001.6,754.4 1000.7,757.6 999.8,760.7 999.0,763.9 998.1,767.1 997.3,770.4 996.5,773.7 995.7,777.0 995.0,780.0 994.3,783.1 993.6,786.2 993.0,789.3 992.3,792.5 991.7,795.7 991.1,798.9 990.5,802.1 989.9,805.3 989.4,808.4 988.9,811.5 988.5,814.6 988.0,817.8 987.6,821.0 987.2,824.2 986.9,827.3 986.5,830.4 986.3,833.6 986.0,836.7 985.8,839.9 985.7,843.1 985.6,846.4 985.5,849.5 985.5,852.5 985.6,855.6 985.7,858.8 985.9,861.9 986.2,865.1 986.5,868.2 986.8,871.4 987.1,874.5 987.4,877.7 987.6,880.8 987.9,883.9 989.3,883.9 989.3,880.7 989.3,877.6 989.2,874.4 989.1,871.2 989.0,868.1 989.0,864.9 988.9,861.8 988.9,858.6 988.8,855.6 988.7,852.5 988.7,849.5 988.8,846.5 988.9,843.3 989.0,840.1 989.2,836.9 989.5,833.8 989.7,830.8 990.0,827.7 990.4,824.6 990.8,821.4 991.2,818.2 991.6,815.0 992.1,812.0 992.6,808.9 993.1,805.8 993.6,802.7 994.2,799.5 994.8,796.3 995.4,793.2 996.1,790.0 996.8,786.9 997.4,783.8 998.1,780.7 998.8,777.7 999.6,774.4 1000.4,771.2 1001.2,767.9 1002.1,764.8 1002.9,761.6 1003.8,758.4 1004.7,755.3 1005.6,752.2 1006.5,749.2 1007.4,746.1 1008.4,743.0 1009.3,739.9 1010.2,736.8 1011.1,733.8 1012.0,730.7 1013.0,727.7 1013.9,724.7 1014.9,721.6 1015.8,718.5ZM823.4,978.6 822.8,981.6 822.2,984.6 821.6,987.6 821.0,990.6 820.5,993.6 820.0,996.6 819.6,999.6 819.1,1002.5 818.6,1005.5 818.1,1008.6 817.5,1011.6 816.8,1014.7 816.1,1017.8 815.4,1020.9 814.6,1024.0 813.8,1027.2 813.0,1030.3 812.2,1033.5 811.3,1036.6 810.5,1039.7 809.7,1042.9 808.9,1046.1 808.1,1049.2 807.3,1052.3 806.5,1055.5 805.8,1058.6 805.0,1061.8 804.2,1064.9 803.5,1068.1 802.7,1071.2 801.9,1074.3 801.1,1077.5 800.2,1080.6 799.4,1083.7 798.5,1086.9 797.7,1090.1 796.8,1093.3 795.9,1096.5 795.0,1099.7 794.1,1102.9 793.1,1106.0 792.2,1109.0 791.2,1112.1 790.2,1115.0 789.1,1118.0 788.0,1120.9 786.9,1123.7 785.8,1126.5 784.8,1129.4 783.7,1132.2 782.6,1135.0 781.5,1137.8 780.5,1140.6 779.4,1143.5 780.6,1144.0 781.8,1141.2 783.1,1138.5 784.4,1135.8 785.7,1133.0 787.0,1130.3 788.3,1127.5 789.5,1124.7 790.6,1121.9 791.8,1119.0 792.8,1116.0 793.9,1113.0 794.8,1109.9 795.8,1106.8 796.8,1103.6 797.7,1100.5 798.6,1097.3 799.5,1094.1 800.4,1090.9 801.2,1087.7 802.1,1084.5 802.9,1081.3 803.8,1078.2 804.6,1075.0 805.4,1071.9 806.2,1068.7 807.0,1065.6 807.7,1062.4 808.5,1059.3 809.3,1056.2 810.0,1053.0 810.8,1049.9 811.6,1046.7 812.4,1043.6 813.2,1040.5 814.0,1037.3 814.9,1034.2 815.7,1031.0 816.5,1027.9 817.3,1024.7 818.1,1021.6 818.9,1018.4 819.6,1015.3 820.2,1012.1 820.8,1009.1 821.4,1006.0 821.9,1003.0 822.4,1000.0 822.8,997.0 823.3,993.9 823.6,990.9 823.8,987.9 824.1,984.9 824.4,981.8 824.7,978.8ZM863.5,938.1 864.0,941.6 864.6,945.2 865.1,948.7 865.8,952.3 866.6,955.3 867.5,958.5 868.4,961.6 869.4,964.6 870.5,967.4 872.0,971.0 873.7,974.3 875.4,977.5 876.9,980.7 878.4,984.2 880.4,987.4 883.1,989.8 886.0,990.7 889.0,990.7 892.3,990.3 895.7,989.7 899.1,989.0 902.5,988.6 905.4,988.3 908.5,988.0 911.6,987.7 914.7,987.4 918.0,987.0 921.2,986.8 924.5,986.6 927.8,986.5 931.2,986.5 934.0,986.6 936.9,986.9 939.8,987.2 942.7,987.6 945.7,988.0 948.8,988.5 951.8,988.9 954.9,989.3 958.0,989.7 961.0,990.1 964.1,990.4 967.1,990.7 967.3,989.7 964.3,989.1 961.3,988.5 958.3,987.9 955.2,987.3 952.2,986.6 949.1,986.1 946.1,985.6 943.1,985.2 940.1,984.8 937.1,984.5 934.1,984.2 931.2,984.1 927.8,984.1 924.4,984.2 921.1,984.4 917.7,984.6 914.5,985.0 911.3,985.3 908.2,985.6 905.2,986.0 902.3,986.2 898.7,986.7 895.2,987.3 891.9,988.0 888.9,988.4 886.3,988.3 884.3,987.8 882.2,985.9 880.5,983.1 879.1,979.7 877.6,976.5 875.8,973.2 874.2,970.0 872.7,966.6 871.7,963.8 870.7,960.9 869.8,957.8 869.0,954.7 868.2,951.7 867.2,948.2 866.3,944.8 865.4,941.4 864.5,937.9ZM865.8,1020.5 866.1,1023.9 866.4,1027.3 866.7,1030.7 866.9,1034.1 867.4,1037.5 868.1,1040.9 868.8,1044.3 869.7,1047.9 870.6,1051.4 871.6,1054.8 872.7,1058.1 873.9,1061.2 875.3,1065.0 876.8,1068.7 878.8,1072.1 881.5,1074.7 884.4,1076.1 887.7,1076.7 891.3,1077.0 895.0,1076.9 898.8,1076.7 902.5,1076.4 905.6,1076.0 908.9,1075.4 912.3,1074.6 915.7,1073.7 919.1,1072.7 922.4,1071.8 925.6,1070.9 928.6,1070.2 931.3,1069.8 935.2,1069.3 938.5,1068.9 941.8,1068.9 945.4,1069.2 948.0,1069.6 950.7,1070.3 953.5,1071.1 956.4,1072.0 959.4,1072.9 962.5,1073.9 965.5,1074.9 968.4,1075.7 968.8,1074.7 965.9,1073.6 963.0,1072.5 960.1,1071.3 957.1,1070.1 954.2,1069.0 951.3,1068.0 948.5,1067.3 945.7,1066.8 941.9,1066.5 938.4,1066.5 934.9,1066.9 931.0,1067.4 928.1,1067.9 925.0,1068.6 921.8,1069.5 918.4,1070.4 915.1,1071.3 911.7,1072.2 908.4,1073.0 905.2,1073.6 902.3,1074.0 898.6,1074.3 894.9,1074.5 891.3,1074.6 888.0,1074.4 885.2,1073.8 882.9,1072.8 880.7,1070.6 879.0,1067.7 877.6,1064.1 876.1,1060.4 875.0,1057.3 873.9,1054.1 872.9,1050.7 872.0,1047.3 871.2,1043.8 870.4,1040.4 869.8,1037.1 869.2,1033.8 868.6,1030.4 868.1,1027.1 867.5,1023.8 866.9,1020.4ZM878.2,1100.4 878.9,1103.5 879.6,1106.5 880.2,1109.6 880.9,1112.7 881.8,1115.8 882.8,1118.8 884.0,1121.8 885.4,1124.6 886.8,1127.5 888.4,1130.3 890.1,1133.1 891.9,1135.8 893.8,1138.3 895.7,1140.7 897.8,1143.3 900.0,1145.8 902.3,1148.1 904.7,1150.4 907.5,1152.3 910.5,1154.0 913.3,1155.2 916.2,1156.1 919.4,1156.8 922.6,1157.4 926.0,1157.8 929.5,1158.1 932.9,1158.3 936.4,1158.4 939.8,1158.5 942.9,1158.4 946.0,1158.2 949.2,1157.8 952.3,1157.4 955.5,1156.9 958.7,1156.3 961.9,1155.6 965.0,1154.9 968.2,1154.2 971.3,1153.5 974.5,1152.9 974.3,1151.8 971.1,1152.2 967.9,1152.6 964.7,1153.0 961.5,1153.5 958.3,1154.0 955.1,1154.5 952.0,1155.0 948.9,1155.5 945.8,1155.8 942.8,1156.0 939.8,1156.1 936.5,1156.0 933.1,1155.9 929.6,1155.7 926.3,1155.4 923.0,1155.0 919.8,1154.5 916.9,1153.8 914.1,1152.9 911.5,1151.9 908.7,1150.3 906.2,1148.5 903.9,1146.4 901.7,1144.1 899.6,1141.7 897.5,1139.2 895.7,1136.9 893.9,1134.4 892.1,1131.8 890.5,1129.1 889.0,1126.4 887.5,1123.6 886.2,1120.8 885.0,1118.0 884.1,1115.1 883.2,1112.1 882.2,1109.1 881.3,1106.1 880.3,1103.1 879.3,1100.1ZM994.5,907.2 993.5,910.2 992.4,913.2 991.3,916.1 990.4,919.1 989.6,922.2 988.8,925.4 988.1,928.7 987.5,931.7 987.0,934.8 986.6,938.0 986.1,941.2 985.7,944.4 985.4,947.7 985.1,951.0 984.8,954.3 984.6,957.7 984.5,960.6 984.4,963.6 984.3,966.6 984.3,969.6 984.4,972.7 984.4,975.7 984.5,978.7 984.6,981.8 984.8,984.8 985.1,987.9 985.3,990.9 986.4,990.9 986.5,987.8 986.7,984.8 986.8,981.8 986.9,978.7 986.8,975.7 986.8,972.6 986.7,969.6 986.7,966.6 986.8,963.7 986.9,960.7 987.0,957.8 987.2,954.5 987.5,951.2 987.8,947.9 988.1,944.7 988.5,941.5 988.9,938.3 989.4,935.2 989.9,932.2 990.5,929.2 991.1,926.0 991.9,922.8 992.7,919.8 993.5,916.8 994.2,913.7 994.9,910.6 995.6,907.5ZM985.9,1002.3 985.0,1005.3 984.1,1008.2 983.2,1011.2 982.5,1014.2 981.9,1017.4 981.3,1020.5 980.9,1023.8 980.6,1026.9 980.3,1030.1 980.0,1033.3 979.8,1036.6 979.7,1040.0 979.6,1043.3 979.7,1046.6 979.8,1049.8 980.0,1052.9 980.5,1056.4 981.1,1059.8 981.9,1063.1 982.7,1066.4 983.7,1069.6 984.8,1072.8 985.9,1076.0 986.9,1075.7 986.4,1072.4 985.7,1069.1 985.0,1065.8 984.2,1062.6 983.5,1059.3 982.8,1056.0 982.4,1052.7 982.2,1049.6 982.1,1046.5 982.0,1043.3 982.1,1040.0 982.2,1036.7 982.4,1033.5 982.7,1030.3 982.9,1027.1 983.3,1024.1 983.7,1020.9 984.2,1017.8 984.9,1014.7 985.5,1011.7 986.0,1008.7 986.5,1005.6 986.9,1002.5ZM985.3,1085.0 984.6,1088.1 984.0,1091.3 983.3,1094.4 982.9,1097.6 982.5,1100.8 982.1,1104.0 981.9,1107.2 981.7,1110.4 981.8,1113.8 981.9,1117.1 982.1,1120.4 982.4,1123.7 982.8,1127.0 983.2,1130.3 983.8,1133.6 984.4,1137.0 985.2,1140.3 986.0,1143.6 986.9,1146.9 987.9,1150.2 989.1,1153.4 990.2,1156.6 991.2,1156.3 990.6,1153.0 990.0,1149.6 989.2,1146.3 988.3,1143.0 987.5,1139.7 986.8,1136.5 986.1,1133.2 985.6,1130.0 985.2,1126.7 984.8,1123.5 984.5,1120.3 984.3,1117.0 984.1,1113.7 984.1,1110.4 984.3,1107.3 984.5,1104.2 984.8,1101.1 985.2,1097.9 985.7,1094.8 986.0,1091.5 986.2,1088.3 986.4,1085.1ZM620.7,1196.3 623.5,1197.5 626.2,1198.8 629.0,1200.0 631.7,1201.2 634.5,1202.4 637.2,1203.6 640.0,1204.7 642.8,1205.9 645.6,1207.0 648.5,1208.1 651.3,1209.3 654.2,1210.4 657.2,1211.6 659.9,1212.7 662.7,1213.9 665.6,1215.0 668.4,1216.2 671.3,1217.4 674.1,1218.6 677.0,1219.8 680.0,1220.9 682.9,1222.1 685.8,1223.3 688.7,1224.5 691.6,1225.6 694.6,1226.7 697.5,1227.8 700.4,1228.9 703.3,1230.0 706.1,1231.0 709.0,1232.0 711.9,1233.0 714.8,1234.0 717.6,1235.0 720.5,1236.0 723.4,1237.0 726.3,1237.9 729.2,1238.8 732.1,1239.8 735.0,1240.7 737.9,1241.6 740.8,1242.5 743.7,1243.3 746.7,1244.3 749.8,1245.2 752.9,1246.1 756.0,1246.9 759.1,1247.8 762.2,1248.6 765.2,1249.5 768.3,1250.3 771.4,1251.1 774.5,1251.9 777.6,1252.6 780.7,1253.4 783.8,1254.1 786.9,1254.9 790.0,1255.6 793.1,1256.3 796.2,1257.0 799.3,1257.6 802.4,1258.3 805.5,1258.9 808.7,1259.5 811.8,1260.2 814.9,1260.8 818.0,1261.3 821.0,1261.9 824.1,1262.5 827.2,1263.0 830.2,1263.6 833.3,1264.1 836.4,1264.6 839.4,1265.2 842.5,1265.7 845.5,1266.1 848.5,1266.6 851.5,1267.1 854.6,1267.5 857.6,1268.0 860.6,1268.4 863.7,1268.8 866.7,1269.3 869.8,1269.7 872.8,1270.1 875.7,1270.5 878.6,1270.9 881.4,1271.2 884.3,1271.6 887.2,1271.9 890.1,1272.3 893.0,1272.6 896.0,1273.0 899.1,1273.3 902.2,1273.7 905.5,1274.1 908.8,1274.5 912.4,1274.9 914.9,1275.3 917.5,1275.6 920.1,1275.9 922.9,1276.3 925.7,1276.7 928.5,1277.0 931.4,1277.4 934.4,1277.8 937.4,1278.2 940.5,1278.6 943.5,1279.1 946.7,1279.5 949.8,1279.9 953.0,1280.3 956.1,1280.7 959.3,1281.2 962.5,1281.6 965.7,1282.0 968.9,1282.4 972.1,1282.8 975.3,1283.1 978.5,1283.5 981.7,1283.9 984.8,1284.2 987.9,1284.6 990.9,1284.9 994.0,1285.2 997.0,1285.4 999.9,1285.7 1003.0,1286.0 1006.1,1286.2 1009.3,1286.4 1012.4,1286.7 1015.5,1286.9 1018.6,1287.1 1021.8,1287.3 1024.9,1287.4 1028.0,1287.6 1031.1,1287.8 1034.1,1287.9 1037.2,1288.1 1040.3,1288.2 1043.3,1288.3 1046.3,1288.4 1049.3,1288.5 1052.3,1288.6 1055.2,1288.7 1058.1,1288.8 1061.0,1288.9 1063.9,1289.0 1066.7,1289.0 1069.5,1289.1 1072.3,1289.1 1075.0,1289.2 1078.4,1289.3 1081.6,1289.3 1084.8,1289.3 1087.9,1289.3 1090.9,1289.3 1093.9,1289.3 1096.8,1289.3 1099.8,1289.3 1102.7,1289.2 1105.7,1289.2 1108.7,1289.1 1111.8,1289.0 1114.9,1289.0 1118.2,1288.9 1121.5,1288.8 1125.0,1288.7 1127.7,1288.6 1130.4,1288.6 1133.2,1288.5 1136.0,1288.4 1138.9,1288.3 1141.9,1288.2 1144.9,1288.1 1147.9,1288.0 1151.0,1287.9 1154.1,1287.8 1157.3,1287.7 1160.4,1287.5 1163.6,1287.4 1166.8,1287.3 1170.0,1287.2 1173.2,1287.0 1176.4,1286.9 1179.6,1286.7 1182.8,1286.6 1186.0,1286.5 1189.1,1286.3 1192.2,1286.1 1195.2,1286.0 1198.3,1285.8 1201.2,1285.6 1204.2,1285.5 1207.0,1285.3 1209.8,1285.1 1212.6,1284.9 1215.9,1284.7 1219.1,1284.5 1222.3,1284.3 1225.5,1284.0 1228.6,1283.8 1231.6,1283.5 1234.6,1283.3 1237.6,1283.0 1240.6,1282.8 1243.5,1282.5 1246.4,1282.2 1249.4,1282.0 1252.3,1281.7 1255.2,1281.4 1258.2,1281.1 1261.1,1280.7 1264.1,1280.4 1267.1,1280.1 1270.1,1279.7 1273.1,1279.3 1276.1,1279.0 1279.2,1278.6 1282.2,1278.2 1285.2,1277.7 1288.2,1277.3 1291.3,1276.9 1294.3,1276.5 1297.4,1276.0 1300.4,1275.5 1303.4,1275.1 1306.5,1274.6 1309.5,1274.1 1312.5,1273.7 1315.6,1273.2 1318.6,1272.7 1321.6,1272.2 1324.6,1271.7 1327.6,1271.3 1330.6,1270.8 1333.7,1270.3 1336.8,1269.8 1339.9,1269.3 1343.0,1268.8 1346.1,1268.3 1349.2,1267.8 1352.3,1267.2 1355.4,1266.7 1358.5,1266.2 1361.6,1265.7 1364.6,1265.1 1367.7,1264.6 1370.7,1264.0 1373.7,1263.5 1376.7,1262.9 1379.6,1262.4 1382.5,1261.8 1385.4,1261.2 1388.2,1260.7 1391.6,1260.0 1394.8,1259.3 1398.1,1258.6 1401.3,1257.8 1404.5,1257.1 1407.7,1256.3 1410.8,1255.6 1413.9,1254.9 1417.0,1254.1 1420.0,1253.4 1422.9,1252.7 1425.8,1251.9 1428.7,1251.2 1431.5,1250.6 1435.0,1249.7 1438.4,1248.9 1441.8,1248.1 1445.2,1247.3 1448.4,1246.5 1451.6,1245.8 1454.6,1245.0 1457.5,1244.2 1460.3,1243.3 1463.8,1242.1 1467.0,1240.8 1470.0,1239.5 1473.0,1238.3 1476.0,1237.0 1475.6,1236.0 1472.5,1237.0 1469.4,1238.1 1466.4,1239.1 1463.1,1240.1 1459.7,1241.1 1456.9,1241.9 1454.0,1242.7 1451.0,1243.4 1447.8,1244.2 1444.6,1245.0 1441.3,1245.8 1437.9,1246.6 1434.4,1247.4 1430.9,1248.2 1428.1,1248.9 1425.3,1249.6 1422.4,1250.3 1419.4,1251.1 1416.4,1251.8 1413.4,1252.5 1410.3,1253.3 1407.2,1254.0 1404.0,1254.8 1400.8,1255.5 1397.6,1256.2 1394.3,1256.9 1391.1,1257.6 1387.8,1258.3 1384.9,1258.9 1382.1,1259.5 1379.2,1260.0 1376.2,1260.6 1373.3,1261.1 1370.3,1261.7 1367.3,1262.2 1364.2,1262.8 1361.2,1263.3 1358.1,1263.8 1355.0,1264.3 1351.9,1264.9 1348.8,1265.4 1345.7,1265.9 1342.6,1266.4 1339.5,1266.9 1336.4,1267.4 1333.3,1267.9 1330.2,1268.4 1327.2,1268.9 1324.2,1269.4 1321.2,1269.9 1318.2,1270.3 1315.2,1270.8 1312.2,1271.3 1309.1,1271.8 1306.1,1272.2 1303.1,1272.7 1300.0,1273.2 1297.0,1273.6 1294.0,1274.1 1290.9,1274.5 1287.9,1274.9 1284.9,1275.4 1281.9,1275.8 1278.8,1276.2 1275.8,1276.6 1272.8,1276.9 1269.9,1277.3 1266.8,1277.7 1263.8,1278.0 1260.8,1278.3 1257.9,1278.7 1255.0,1279.0 1252.0,1279.3 1249.1,1279.6 1246.2,1279.9 1243.3,1280.1 1240.4,1280.4 1237.4,1280.7 1234.4,1280.9 1231.4,1281.2 1228.4,1281.4 1225.3,1281.6 1222.2,1281.9 1219.0,1282.1 1215.7,1282.3 1212.4,1282.6 1209.7,1282.7 1206.9,1282.9 1204.0,1283.1 1201.1,1283.3 1198.1,1283.4 1195.1,1283.6 1192.1,1283.7 1189.0,1283.9 1185.8,1284.1 1182.7,1284.2 1179.5,1284.3 1176.3,1284.5 1173.1,1284.6 1169.9,1284.8 1166.7,1284.9 1163.5,1285.0 1160.4,1285.1 1157.2,1285.3 1154.0,1285.4 1150.9,1285.5 1147.8,1285.6 1144.8,1285.7 1141.8,1285.8 1138.8,1285.9 1135.9,1286.0 1133.1,1286.1 1130.3,1286.2 1127.6,1286.2 1125.0,1286.3 1121.5,1286.4 1118.1,1286.5 1114.9,1286.6 1111.7,1286.6 1108.7,1286.7 1105.7,1286.8 1102.7,1286.8 1099.7,1286.9 1096.8,1286.9 1093.9,1286.9 1090.9,1286.9 1087.9,1286.9 1084.8,1286.9 1081.6,1286.9 1078.4,1286.9 1075.0,1286.8 1072.3,1286.7 1069.6,1286.7 1066.8,1286.6 1063.9,1286.6 1061.1,1286.5 1058.2,1286.4 1055.3,1286.3 1052.4,1286.2 1049.4,1286.1 1046.4,1286.0 1043.4,1285.9 1040.4,1285.8 1037.3,1285.7 1034.3,1285.5 1031.2,1285.4 1028.1,1285.2 1025.0,1285.0 1021.9,1284.9 1018.8,1284.7 1015.7,1284.5 1012.6,1284.3 1009.4,1284.0 1006.3,1283.8 1003.2,1283.6 1000.1,1283.3 997.2,1283.0 994.2,1282.8 991.2,1282.5 988.1,1282.2 985.0,1281.8 981.9,1281.5 978.8,1281.1 975.6,1280.8 972.4,1280.4 969.2,1280.0 966.0,1279.6 962.8,1279.2 959.6,1278.8 956.4,1278.4 953.3,1277.9 950.1,1277.5 947.0,1277.1 943.9,1276.7 940.8,1276.3 937.7,1275.9 934.7,1275.5 931.8,1275.1 928.8,1274.7 926.0,1274.3 923.2,1273.9 920.4,1273.5 917.8,1273.2 915.2,1272.9 912.6,1272.6 909.1,1272.1 905.8,1271.7 902.5,1271.3 899.3,1271.0 896.3,1270.6 893.3,1270.2 890.3,1269.9 887.5,1269.5 884.6,1269.2 881.7,1268.8 878.9,1268.5 876.0,1268.1 873.1,1267.7 870.2,1267.3 867.1,1266.9 864.0,1266.5 861.0,1266.0 857.9,1265.6 854.9,1265.1 851.9,1264.7 848.9,1264.2 845.9,1263.8 842.8,1263.3 839.8,1262.8 836.8,1262.3 833.7,1261.8 830.6,1261.2 827.6,1260.7 824.5,1260.1 821.5,1259.6 818.4,1259.0 815.3,1258.4 812.2,1257.8 809.1,1257.2 806.0,1256.6 802.9,1255.9 799.8,1255.3 796.7,1254.6 793.6,1253.9 790.5,1253.2 787.5,1252.5 784.4,1251.8 781.3,1251.1 778.2,1250.3 775.1,1249.5 772.0,1248.7 768.9,1247.9 765.9,1247.1 762.8,1246.3 759.7,1245.5 756.6,1244.6 753.6,1243.7 750.5,1242.9 747.4,1242.0 744.3,1241.1 741.5,1240.2 738.6,1239.3 735.7,1238.4 732.8,1237.5 729.9,1236.6 727.0,1235.6 724.2,1234.7 721.3,1233.7 718.4,1232.8 715.5,1231.8 712.7,1230.8 709.8,1229.8 706.9,1228.7 704.1,1227.7 701.2,1226.7 698.3,1225.6 695.4,1224.5 692.5,1223.4 689.6,1222.2 686.7,1221.1 683.8,1219.9 680.9,1218.7 678.0,1217.5 675.1,1216.3 672.2,1215.2 669.3,1214.0 666.5,1212.8 663.6,1211.6 660.8,1210.5 658.0,1209.4 655.1,1208.2 652.2,1207.1 649.4,1205.9 646.5,1204.8 643.7,1203.6 640.9,1202.5 638.1,1201.4 635.3,1200.4 632.5,1199.4 629.6,1198.3 626.8,1197.3 624.0,1196.3 621.1,1195.3ZM892.6,1174.6 893.0,1177.7 893.3,1180.7 893.7,1183.7 894.0,1186.7 894.5,1189.7 895.0,1192.7 895.5,1195.7 896.0,1198.7 896.6,1201.7 897.1,1204.7 897.7,1207.8 898.3,1210.8 899.0,1213.9 899.6,1217.1 900.3,1220.2 901.1,1223.4 901.8,1226.6 902.5,1229.8 903.3,1233.0 904.0,1236.1 904.8,1239.2 905.5,1242.3 906.3,1245.3 907.0,1248.3 907.8,1251.7 908.6,1255.1 909.3,1258.4 910.1,1261.7 910.9,1265.0 911.7,1268.2 912.5,1271.3 913.3,1274.3 914.2,1277.1 915.3,1280.3 916.5,1283.3 917.7,1286.1 919.0,1288.8 920.2,1291.5 921.5,1294.3 922.5,1293.9 921.5,1291.0 920.5,1288.2 919.5,1285.4 918.5,1282.5 917.5,1279.5 916.5,1276.4 915.6,1273.6 914.8,1270.7 914.0,1267.6 913.2,1264.4 912.5,1261.2 911.7,1257.9 910.9,1254.5 910.1,1251.1 909.3,1247.7 908.6,1244.7 907.9,1241.7 907.1,1238.7 906.4,1235.6 905.6,1232.4 904.9,1229.3 904.1,1226.1 903.4,1222.9 902.7,1219.7 902.0,1216.6 901.3,1213.4 900.7,1210.3 900.1,1207.3 899.5,1204.3 898.9,1201.3 898.4,1198.3 897.9,1195.3 897.4,1192.3 896.9,1189.3 896.4,1186.3 895.7,1183.4 895.0,1180.4 894.4,1177.4 893.7,1174.5ZM1143.7,603.7 1146.9,604.4 1150.0,605.2 1153.2,605.9 1156.3,606.6 1159.4,607.2 1162.6,607.8 1165.8,608.4 1168.9,609.0 1172.1,609.6 1175.2,610.2 1178.4,610.8 1181.6,611.5 1184.8,612.1 1187.9,612.8 1191.1,613.5 1194.3,614.2 1197.4,614.9 1200.6,615.7 1203.7,616.5 1206.8,617.4 1209.7,618.3 1212.6,619.2 1215.5,620.2 1218.4,621.2 1221.3,622.3 1224.2,623.4 1227.1,624.5 1230.0,625.6 1232.8,626.7 1235.6,627.8 1238.4,628.9 1241.4,630.0 1244.4,631.1 1247.3,632.2 1250.2,633.3 1253.1,634.5 1255.9,635.6 1258.7,636.7 1261.5,637.8 1264.3,638.9 1267.5,640.3 1270.6,641.6 1273.6,643.0 1276.7,644.3 1279.8,645.6 1282.9,646.7 1286.1,647.7 1286.6,646.6 1283.7,645.0 1280.8,643.3 1277.8,641.9 1274.7,640.5 1271.7,639.1 1268.5,637.8 1265.3,636.4 1262.5,635.3 1259.7,634.2 1256.9,633.1 1254.1,631.9 1251.2,630.8 1248.3,629.7 1245.3,628.6 1242.4,627.5 1239.3,626.3 1236.6,625.3 1233.8,624.2 1231.0,623.1 1228.1,622.0 1225.2,620.9 1222.3,619.8 1219.3,618.7 1216.4,617.7 1213.5,616.6 1210.5,615.7 1207.6,614.8 1204.4,613.9 1201.2,613.0 1198.0,612.3 1194.9,611.5 1191.7,610.8 1188.5,610.1 1185.3,609.5 1182.1,608.8 1179.0,608.2 1175.8,607.6 1172.6,606.9 1169.4,606.3 1166.3,605.7 1163.1,605.1 1159.9,604.6 1156.7,604.1 1153.5,603.7 1150.3,603.3 1147.1,602.9 1143.9,602.5ZM1259.2,655.5 1262.1,654.4 1264.9,653.2 1267.7,652.1 1270.6,651.1 1273.7,650.4 1276.6,649.8 1279.7,649.3 1282.9,648.9 1286.3,648.6 1289.7,648.5 1293.1,648.4 1296.4,648.4 1299.6,648.5 1302.7,648.7 1305.9,649.0 1309.1,649.4 1312.4,649.8 1315.6,650.4 1318.8,651.1 1322.1,651.8 1324.9,652.6 1327.8,653.5 1330.7,654.4 1333.6,655.5 1336.5,656.6 1339.4,657.7 1342.3,659.0 1345.1,660.3 1347.8,661.7 1350.6,663.2 1353.3,664.9 1356.0,666.6 1358.7,668.4 1361.3,670.3 1364.0,672.3 1366.5,674.4 1369.0,676.5 1371.5,678.7 1373.9,680.9 1376.2,683.2 1378.5,685.5 1380.7,687.9 1382.8,690.4 1384.9,692.9 1387.0,695.5 1389.0,698.1 1390.9,700.7 1392.7,703.4 1394.5,706.1 1396.2,708.9 1397.8,711.6 1399.3,714.3 1400.7,717.1 1402.1,720.0 1403.4,722.9 1404.6,725.8 1405.8,728.7 1406.9,731.6 1408.0,734.5 1409.0,737.4 1410.1,740.6 1411.1,743.8 1412.0,747.0 1412.9,750.2 1413.7,753.4 1414.4,756.6 1415.1,759.8 1415.6,762.9 1416.2,766.0 1416.6,769.1 1417.0,772.1 1417.3,775.1 1417.6,778.1 1417.8,781.1 1417.9,784.0 1417.9,787.0 1418.0,790.0 1417.9,793.0 1417.7,796.0 1417.5,799.0 1417.3,802.1 1417.0,805.1 1416.6,808.0 1416.2,811.0 1415.8,813.8 1415.2,817.1 1414.6,820.3 1414.0,823.5 1413.3,826.6 1412.5,829.8 1411.5,833.0 1410.5,836.0 1409.5,839.0 1408.3,842.1 1407.1,845.3 1405.9,848.5 1404.8,851.7 1403.6,854.9 1402.5,858.1 1403.5,858.5 1404.9,855.4 1406.3,852.3 1407.8,849.2 1409.2,846.1 1410.6,843.0 1411.8,839.9 1412.9,836.8 1413.9,833.8 1414.9,830.4 1415.7,827.2 1416.4,824.0 1417.1,820.8 1417.7,817.6 1418.2,814.2 1418.7,811.3 1419.1,808.4 1419.4,805.3 1419.8,802.3 1420.0,799.2 1420.2,796.1 1420.4,793.1 1420.4,790.0 1420.4,787.0 1420.4,784.0 1420.3,781.0 1420.1,777.9 1419.8,774.9 1419.5,771.8 1419.1,768.8 1418.6,765.6 1418.1,762.5 1417.5,759.3 1416.8,756.1 1416.1,752.8 1415.3,749.6 1414.4,746.3 1413.5,743.1 1412.5,739.8 1411.4,736.6 1410.3,733.7 1409.3,730.7 1408.1,727.8 1406.9,724.8 1405.6,721.9 1404.3,718.9 1402.9,716.0 1401.5,713.2 1399.9,710.4 1398.3,707.6 1396.6,704.8 1394.8,702.0 1392.9,699.3 1391.0,696.6 1389.0,693.9 1386.9,691.3 1384.7,688.7 1382.5,686.2 1380.3,683.8 1378.0,681.4 1375.6,679.1 1373.2,676.9 1370.7,674.6 1368.1,672.5 1365.5,670.4 1362.8,668.3 1360.1,666.4 1357.4,664.5 1354.6,662.7 1351.8,661.1 1349.0,659.5 1346.2,658.1 1343.3,656.7 1340.4,655.4 1337.4,654.2 1334.5,653.1 1331.5,652.1 1328.5,651.1 1325.6,650.2 1322.7,649.4 1319.4,648.6 1316.1,647.9 1312.8,647.4 1309.5,646.9 1306.2,646.5 1302.9,646.2 1299.7,646.0 1296.5,645.9 1293.0,645.9 1289.6,646.0 1286.1,646.1 1282.7,646.4 1279.4,646.8 1276.2,647.3 1273.1,648.0 1269.9,649.1 1267.0,650.3 1264.2,651.7 1261.6,653.1 1258.8,654.4ZM1052.5,695.7 1055.7,695.1 1059.0,694.6 1062.2,694.1 1065.4,693.5 1068.5,692.7 1071.7,691.8 1074.9,691.0 1078.1,690.2 1081.2,689.4 1084.4,688.7 1087.6,687.9 1090.8,687.1 1094.0,686.4 1097.2,685.7 1100.4,684.9 1103.6,684.3 1106.8,683.6 1110.0,683.0 1113.2,682.4 1116.4,681.8 1119.5,681.3 1122.7,680.7 1125.9,680.2 1129.1,679.7 1132.3,679.2 1135.5,678.7 1138.7,678.2 1141.8,677.6 1144.9,677.1 1148.1,676.7 1151.2,676.2 1154.4,675.7 1157.6,675.3 1160.8,674.9 1164.2,674.4 1167.0,674.1 1169.9,673.8 1172.8,673.5 1175.8,673.2 1178.8,672.9 1181.8,672.6 1184.9,672.3 1187.9,672.0 1191.0,671.8 1194.0,671.5 1197.1,671.2 1200.1,670.9 1199.9,668.9 1196.9,669.1 1193.9,669.3 1190.8,669.5 1187.7,669.6 1184.7,669.8 1181.6,670.0 1178.6,670.1 1175.6,670.3 1172.6,670.5 1169.6,670.7 1166.7,670.9 1163.8,671.2 1160.5,671.5 1157.2,671.8 1153.9,672.1 1150.7,672.5 1147.5,672.8 1144.4,673.2 1141.2,673.6 1138.1,674.0 1134.9,674.4 1131.7,674.9 1128.4,675.4 1125.2,675.9 1122.0,676.4 1118.8,676.9 1115.6,677.5 1112.4,678.1 1109.2,678.7 1106.0,679.3 1102.7,680.0 1099.5,680.6 1096.2,681.4 1093.0,682.1 1089.7,682.9 1086.5,683.6 1083.3,684.4 1080.2,685.2 1077.1,685.9 1073.8,686.7 1070.6,687.6 1067.4,688.4 1064.3,689.2 1061.2,690.3 1058.1,691.4 1055.1,692.6 1052.0,693.7ZM1025.0,897.5 1028.0,898.6 1030.9,899.7 1033.8,900.8 1036.7,901.9 1039.6,903.0 1042.5,904.1 1045.5,905.2 1048.5,906.3 1051.5,907.2 1054.7,908.2 1057.9,909.1 1060.8,909.9 1063.8,910.7 1066.8,911.5 1069.8,912.3 1072.9,913.1 1076.0,913.9 1079.2,914.6 1082.3,915.4 1085.5,916.1 1088.7,916.8 1091.8,917.5 1095.0,918.1 1098.2,918.7 1101.3,919.2 1104.4,919.7 1107.5,920.2 1110.5,920.7 1113.6,921.1 1116.7,921.5 1119.9,921.9 1123.0,922.3 1126.1,922.6 1129.2,922.9 1132.3,923.1 1135.4,923.3 1138.5,923.4 1141.7,923.5 1144.8,923.6 1147.9,923.5 1151.1,923.5 1154.2,923.3 1157.4,923.2 1160.6,922.9 1163.7,922.7 1166.9,922.4 1170.1,922.0 1173.2,921.6 1176.3,921.2 1179.4,920.8 1182.4,920.3 1185.4,919.8 1188.3,919.2 1191.7,918.5 1194.9,917.8 1198.1,917.0 1201.3,916.2 1204.4,915.4 1207.5,914.5 1210.6,913.5 1213.7,912.5 1216.8,911.4 1220.0,910.2 1223.2,909.0 1226.0,907.9 1228.9,906.7 1231.8,905.4 1234.7,904.1 1237.6,902.7 1240.5,901.3 1243.3,899.8 1246.2,898.2 1249.0,896.6 1251.9,895.0 1254.7,893.4 1257.6,891.8 1260.4,890.3 1263.2,888.8 1262.5,887.3 1259.6,888.6 1256.6,889.9 1253.6,891.3 1250.7,892.6 1247.7,894.0 1244.8,895.4 1241.8,896.7 1238.9,898.1 1236.0,899.5 1233.2,900.8 1230.3,902.1 1227.5,903.4 1224.7,904.6 1221.9,905.7 1218.7,906.9 1215.6,908.0 1212.5,909.1 1209.5,910.1 1206.5,911.0 1203.4,911.9 1200.4,912.8 1197.3,913.5 1194.1,914.3 1190.9,915.0 1187.6,915.7 1184.7,916.2 1181.8,916.7 1178.8,917.2 1175.8,917.7 1172.7,918.1 1169.6,918.4 1166.5,918.8 1163.4,919.1 1160.3,919.3 1157.2,919.6 1154.1,919.7 1150.9,919.9 1147.8,919.9 1144.8,920.0 1141.7,919.9 1138.7,919.8 1135.6,919.7 1132.5,919.5 1129.5,919.3 1126.4,919.0 1123.3,918.7 1120.3,918.3 1117.2,918.0 1114.1,917.5 1111.1,917.1 1108.0,916.6 1104.9,916.2 1101.9,915.7 1098.8,915.1 1095.7,914.5 1092.5,913.9 1089.4,913.3 1086.3,912.6 1083.1,911.9 1080.0,911.1 1076.9,910.4 1073.8,909.6 1070.7,908.8 1067.7,908.0 1064.7,907.2 1061.8,906.4 1058.9,905.6 1055.7,904.7 1052.6,903.8 1049.5,902.9 1046.5,902.0 1043.5,901.1 1040.5,900.3 1037.5,899.4 1034.6,898.5 1031.6,897.7 1028.6,896.8 1025.5,895.9ZM1268.1,854.0 1267.8,857.0 1267.4,860.1 1267.1,863.2 1266.7,866.3 1266.4,869.4 1266.1,872.5 1265.8,875.7 1265.5,878.8 1265.2,881.9 1265.1,884.9 1265.0,888.0 1264.9,891.0 1264.9,894.0 1264.8,897.0 1264.8,900.0 1264.9,903.0 1264.9,906.0 1264.9,909.0 1265.0,912.0 1265.1,915.0 1265.2,918.0 1265.3,921.0 1265.5,924.0 1265.7,927.0 1265.9,929.9 1266.1,932.9 1266.3,935.9 1266.5,939.0 1266.8,942.0 1267.1,945.1 1267.4,948.0 1267.7,951.0 1268.0,953.9 1268.3,957.0 1268.6,960.0 1269.0,963.0 1269.3,966.1 1269.7,969.1 1270.1,972.2 1270.6,975.2 1271.0,978.1 1271.5,981.0 1272.1,984.3 1272.7,987.5 1273.4,990.6 1274.1,993.7 1274.8,996.8 1275.5,999.9 1276.2,1003.0 1277.0,1006.1 1277.8,1009.2 1278.6,1012.4 1279.4,1015.4 1280.3,1018.5 1281.1,1021.6 1282.0,1024.8 1282.9,1027.9 1283.8,1031.1 1284.7,1034.2 1285.7,1037.3 1286.7,1040.4 1287.7,1043.5 1288.7,1046.5 1289.7,1049.5 1290.8,1052.5 1291.9,1055.5 1293.1,1058.4 1294.2,1061.3 1295.4,1064.2 1296.6,1067.1 1297.8,1070.0 1299.0,1072.9 1300.3,1075.8 1301.7,1078.7 1303.1,1081.8 1304.5,1084.9 1306.0,1088.0 1307.5,1091.0 1309.0,1094.0 1310.5,1096.9 1312.0,1099.7 1313.4,1102.3 1314.8,1104.7 1316.6,1107.7 1318.4,1110.4 1320.2,1112.8 1322.1,1115.0 1324.1,1117.4 1325.1,1116.6 1323.7,1114.0 1322.2,1111.4 1320.7,1108.8 1319.0,1106.2 1317.2,1103.3 1315.9,1100.9 1314.5,1098.4 1313.0,1095.6 1311.5,1092.7 1310.0,1089.8 1308.5,1086.7 1307.1,1083.7 1305.6,1080.6 1304.2,1077.6 1302.9,1074.6 1301.6,1071.8 1300.4,1068.9 1299.2,1066.0 1298.0,1063.2 1296.8,1060.3 1295.7,1057.4 1294.6,1054.5 1293.5,1051.5 1292.4,1048.6 1291.3,1045.5 1290.3,1042.6 1289.3,1039.6 1288.4,1036.5 1287.4,1033.4 1286.5,1030.3 1285.6,1027.2 1284.7,1024.0 1283.8,1020.9 1283.0,1017.8 1282.2,1014.7 1281.4,1011.6 1280.5,1008.5 1279.7,1005.4 1279.0,1002.3 1278.2,999.2 1277.5,996.2 1276.8,993.1 1276.1,990.0 1275.5,986.9 1274.9,983.8 1274.3,980.6 1273.8,977.7 1273.3,974.7 1272.9,971.8 1272.5,968.8 1272.1,965.8 1271.7,962.7 1271.4,959.7 1271.1,956.7 1270.8,953.7 1270.5,950.7 1270.2,947.7 1269.9,944.9 1269.6,941.8 1269.3,938.7 1269.1,935.7 1268.9,932.7 1268.7,929.7 1268.5,926.8 1268.3,923.8 1268.1,920.9 1268.0,917.9 1267.9,915.0 1267.8,912.0 1267.7,909.0 1267.7,906.0 1267.7,903.0 1267.6,900.0 1267.6,897.0 1267.7,894.1 1267.7,891.1 1267.8,888.1 1267.9,885.1 1268.0,882.0 1268.1,878.9 1268.2,875.8 1268.4,872.7 1268.5,869.6 1268.7,866.5 1268.9,863.4 1269.0,860.3 1269.2,857.2 1269.3,854.0ZM998.0,993.4 1001.2,993.3 1004.5,993.1 1007.7,992.9 1011.0,992.8 1014.3,992.6 1017.6,992.4 1021.1,992.1 1024.2,991.7 1027.3,991.3 1030.5,990.8 1033.7,990.4 1036.9,989.9 1040.2,989.5 1043.4,989.3 1046.6,989.1 1049.7,989.2 1052.8,989.4 1056.0,989.8 1059.2,990.4 1062.4,991.0 1065.6,991.8 1068.8,992.5 1072.0,993.3 1075.1,994.1 1078.2,994.9 1081.5,995.8 1084.7,997.0 1088.0,998.2 1091.2,999.4 1094.5,1000.6 1097.8,1001.5 1101.1,1002.0 1104.5,1002.1 1107.6,1001.8 1110.7,1001.3 1113.9,1000.4 1117.0,999.4 1120.1,998.1 1123.1,996.7 1125.9,995.2 1128.6,993.6 1131.1,991.8 1133.8,989.6 1136.1,987.1 1138.3,984.5 1140.2,981.7 1142.1,978.8 1144.0,975.8 1145.8,972.8 1147.3,970.1 1148.8,967.3 1150.3,964.4 1151.6,961.5 1152.9,958.4 1154.1,955.3 1155.4,952.2 1156.6,949.1 1157.8,946.0 1159.1,943.0 1158.1,942.6 1156.6,945.5 1155.2,948.5 1153.8,951.5 1152.3,954.5 1150.9,957.5 1149.5,960.5 1148.1,963.4 1146.7,966.2 1145.2,969.0 1143.7,971.5 1141.9,974.6 1140.1,977.6 1138.3,980.4 1136.4,983.1 1134.3,985.6 1132.1,987.8 1129.6,989.9 1127.3,991.6 1124.8,993.1 1122.0,994.6 1119.1,995.9 1116.2,997.1 1113.2,998.1 1110.2,998.9 1107.3,999.5 1104.4,999.8 1101.4,999.7 1098.3,999.1 1095.2,998.3 1092.0,997.2 1088.8,996.0 1085.6,994.7 1082.2,993.5 1078.9,992.6 1075.7,991.8 1072.6,991.0 1069.4,990.2 1066.2,989.4 1062.9,988.7 1059.6,988.0 1056.4,987.5 1053.1,987.0 1049.8,986.8 1046.5,986.7 1043.2,986.9 1039.9,987.1 1036.6,987.5 1033.4,988.0 1030.1,988.5 1027.0,988.9 1023.9,989.3 1020.8,989.7 1017.4,990.0 1014.1,990.4 1010.8,990.8 1007.6,991.2 1004.4,991.6 1001.1,992.0 997.9,992.3ZM996.6,1076.4 999.6,1075.9 1002.7,1075.4 1005.7,1074.9 1008.8,1074.4 1011.8,1074.0 1014.9,1073.5 1017.9,1073.1 1021.1,1072.7 1024.2,1072.4 1027.3,1072.1 1030.6,1071.9 1033.8,1071.7 1037.1,1071.5 1040.3,1071.5 1043.5,1071.5 1046.6,1071.6 1049.6,1071.8 1053.0,1072.3 1056.3,1072.9 1059.6,1073.6 1062.9,1074.4 1066.1,1075.3 1069.3,1076.2 1072.5,1077.0 1075.8,1078.0 1079.1,1079.2 1082.5,1080.5 1085.9,1081.6 1089.4,1082.2 1093.1,1082.2 1096.1,1081.6 1099.1,1080.6 1102.2,1079.3 1105.3,1077.7 1108.4,1075.9 1111.3,1074.0 1114.2,1072.0 1117.0,1070.0 1119.6,1068.1 1122.1,1066.2 1124.5,1064.3 1126.8,1062.3 1129.1,1060.2 1131.2,1058.0 1133.3,1055.6 1135.2,1053.2 1137.1,1050.6 1138.8,1048.0 1140.3,1045.3 1141.6,1042.5 1142.9,1039.6 1144.1,1036.5 1145.2,1033.5 1146.3,1030.4 1147.3,1027.3 1148.4,1024.3 1149.6,1021.3 1148.6,1020.9 1147.2,1023.8 1145.9,1026.7 1144.6,1029.7 1143.3,1032.7 1142.0,1035.7 1140.7,1038.6 1139.5,1041.5 1138.1,1044.2 1136.7,1046.8 1135.2,1049.2 1133.3,1051.7 1131.4,1054.1 1129.5,1056.3 1127.4,1058.4 1125.2,1060.5 1123.0,1062.4 1120.6,1064.3 1118.1,1066.2 1115.6,1068.1 1112.9,1070.0 1110.0,1072.0 1107.1,1073.9 1104.1,1075.6 1101.2,1077.1 1098.3,1078.4 1095.5,1079.3 1092.8,1079.8 1089.6,1079.8 1086.5,1079.2 1083.3,1078.2 1080.0,1077.0 1076.6,1075.7 1073.1,1074.7 1069.9,1073.9 1066.7,1073.0 1063.5,1072.1 1060.2,1071.3 1056.8,1070.5 1053.4,1069.9 1049.9,1069.4 1046.8,1069.2 1043.6,1069.1 1040.3,1069.1 1037.0,1069.1 1033.7,1069.3 1030.4,1069.5 1027.1,1069.7 1023.9,1070.0 1020.8,1070.3 1017.6,1070.7 1014.5,1071.2 1011.4,1071.8 1008.4,1072.5 1005.4,1073.2 1002.4,1073.9 999.4,1074.6 996.4,1075.3ZM1008.7,1154.1 1011.7,1154.9 1014.6,1155.7 1017.5,1156.5 1020.4,1157.3 1023.3,1158.1 1026.4,1158.6 1029.4,1159.1 1032.6,1159.5 1035.8,1159.9 1039.1,1160.3 1042.4,1160.6 1045.7,1160.7 1049.2,1160.7 1052.7,1160.5 1055.8,1160.3 1059.1,1160.0 1062.5,1159.6 1066.1,1159.2 1069.6,1158.6 1073.1,1157.9 1076.4,1157.0 1079.6,1155.9 1082.5,1154.7 1085.0,1153.1 1087.5,1150.9 1089.6,1148.4 1091.4,1145.6 1092.9,1142.7 1094.2,1139.7 1095.5,1136.8 1096.9,1133.9 1098.3,1131.1 1099.7,1128.2 1101.0,1125.2 1102.2,1122.2 1103.4,1119.3 1104.5,1116.4 1105.6,1113.7 1106.7,1110.5 1107.6,1107.4 1108.5,1104.4 1109.3,1101.5 1110.2,1098.5 1109.1,1098.1 1108.0,1101.0 1106.9,1103.9 1105.7,1106.8 1104.6,1109.8 1103.3,1112.8 1102.3,1115.6 1101.2,1118.4 1100.0,1121.3 1098.8,1124.3 1097.5,1127.2 1096.2,1130.1 1094.7,1132.9 1093.4,1135.8 1092.0,1138.7 1090.7,1141.6 1089.3,1144.4 1087.7,1147.0 1085.8,1149.2 1083.6,1151.2 1081.3,1152.5 1078.7,1153.7 1075.7,1154.7 1072.5,1155.5 1069.2,1156.2 1065.7,1156.8 1062.3,1157.2 1058.9,1157.6 1055.6,1157.9 1052.5,1158.1 1049.1,1158.3 1045.8,1158.3 1042.5,1158.2 1039.3,1157.9 1036.1,1157.5 1032.9,1157.1 1029.8,1156.7 1026.8,1156.2 1023.8,1155.7 1020.9,1155.2 1017.9,1154.6 1014.9,1154.1 1012.0,1153.6 1009.0,1153.1ZM1088.7,1172.3 1088.6,1175.4 1088.7,1178.5 1088.7,1181.6 1088.8,1184.7 1088.8,1187.7 1088.9,1190.7 1088.9,1193.8 1088.8,1196.7 1088.5,1200.1 1088.1,1203.5 1087.6,1206.9 1087.0,1210.3 1086.4,1213.6 1085.8,1216.8 1085.1,1219.7 1084.3,1223.3 1083.4,1226.5 1082.4,1229.9 1081.3,1233.7 1080.7,1236.4 1079.9,1239.4 1079.2,1242.6 1078.4,1245.9 1077.6,1249.3 1076.8,1252.8 1076.0,1256.2 1075.3,1259.5 1074.5,1262.7 1073.8,1265.7 1073.1,1269.0 1072.3,1272.2 1071.6,1275.3 1070.8,1278.4 1070.1,1281.4 1069.5,1284.3 1068.8,1287.2 1068.1,1290.9 1067.5,1294.4 1067.0,1297.9 1066.5,1301.4 1066.0,1304.9 1067.0,1305.1 1067.9,1301.7 1068.7,1298.3 1069.6,1294.8 1070.4,1291.4 1071.2,1287.8 1071.8,1284.8 1072.5,1281.9 1073.2,1278.9 1073.9,1275.9 1074.6,1272.8 1075.4,1269.6 1076.2,1266.3 1076.9,1263.3 1077.6,1260.1 1078.4,1256.7 1079.2,1253.3 1080.0,1249.8 1080.7,1246.4 1081.5,1243.1 1082.3,1239.9 1083.0,1237.0 1083.7,1234.3 1084.7,1230.5 1085.7,1227.2 1086.6,1223.9 1087.5,1220.3 1088.1,1217.3 1088.8,1214.1 1089.4,1210.7 1090.0,1207.3 1090.5,1203.8 1090.9,1200.3 1091.2,1196.9 1091.3,1193.8 1091.3,1190.7 1091.2,1187.6 1091.0,1184.5 1090.7,1181.5 1090.3,1178.4 1090.0,1175.3 1089.7,1172.3ZM1197.3,1158.7 1197.3,1162.1 1197.2,1165.3 1197.2,1168.5 1197.5,1171.8 1197.7,1175.3 1198.1,1179.0 1198.3,1181.8 1198.7,1184.7 1199.0,1187.8 1199.4,1190.9 1199.8,1194.1 1200.2,1197.4 1200.6,1200.6 1201.0,1203.9 1201.5,1207.2 1201.9,1210.4 1202.4,1213.6 1202.9,1216.8 1203.4,1220.0 1204.0,1223.2 1204.5,1226.4 1205.1,1229.5 1205.7,1232.7 1206.2,1235.9 1206.8,1239.0 1207.3,1242.1 1207.7,1245.1 1208.1,1248.1 1208.5,1251.4 1208.9,1254.6 1209.2,1257.7 1209.5,1260.7 1209.8,1263.8 1210.0,1266.9 1210.2,1270.1 1210.3,1273.4 1210.4,1276.8 1210.5,1279.7 1210.5,1282.6 1210.5,1285.7 1210.5,1288.8 1210.4,1292.0 1210.4,1295.2 1210.3,1298.4 1210.2,1301.7 1210.1,1305.0 1210.1,1308.3 1210.1,1311.6 1210.2,1314.9 1210.2,1318.2 1210.3,1321.4 1211.5,1321.4 1211.7,1318.2 1211.9,1315.0 1212.1,1311.7 1212.4,1308.4 1212.6,1305.1 1212.8,1301.8 1212.9,1298.5 1213.0,1295.3 1213.0,1292.0 1213.1,1288.8 1213.1,1285.7 1213.1,1282.6 1213.1,1279.6 1213.0,1276.7 1212.9,1273.3 1212.8,1269.9 1212.6,1266.7 1212.3,1263.6 1212.1,1260.5 1211.8,1257.4 1211.5,1254.3 1211.1,1251.1 1210.7,1247.8 1210.3,1244.8 1209.9,1241.7 1209.3,1238.6 1208.8,1235.4 1208.2,1232.2 1207.7,1229.1 1207.1,1225.9 1206.5,1222.7 1206.0,1219.5 1205.4,1216.4 1205.0,1213.2 1204.5,1210.1 1204.1,1206.8 1203.6,1203.6 1203.2,1200.3 1202.7,1197.0 1202.3,1193.8 1202.0,1190.6 1201.6,1187.5 1201.2,1184.4 1200.9,1181.5 1200.6,1178.7 1200.3,1175.1 1200.1,1171.7 1199.8,1168.4 1199.5,1165.2 1199.0,1161.9 1198.5,1158.7ZM1199.9,1179.2 1201.7,1176.7 1203.6,1174.2 1205.5,1171.7 1207.2,1169.1 1208.8,1166.5 1210.5,1163.8 1212.2,1161.2 1213.8,1158.6 1215.5,1155.9 1217.2,1153.2 1218.8,1150.5 1220.5,1147.8 1222.2,1145.0 1223.7,1142.4 1225.3,1139.9 1226.8,1137.2 1228.4,1134.6 1230.0,1132.0 1231.6,1129.3 1233.2,1126.6 1234.8,1123.9 1236.4,1121.2 1238.0,1118.5 1239.5,1115.7 1241.0,1113.0 1242.4,1110.2 1243.9,1107.4 1245.2,1104.6 1246.6,1101.8 1247.9,1099.0 1249.2,1096.1 1250.4,1093.3 1251.7,1090.4 1252.9,1087.5 1254.1,1084.6 1255.2,1081.7 1256.3,1078.8 1257.4,1075.9 1258.5,1072.9 1259.6,1070.0 1260.6,1067.1 1261.6,1064.2 1262.6,1061.2 1263.6,1058.1 1264.6,1055.0 1265.6,1051.8 1266.5,1048.5 1267.5,1045.3 1268.4,1042.0 1269.3,1038.8 1270.1,1035.6 1270.9,1032.4 1271.7,1029.3 1272.4,1026.3 1273.0,1023.4 1273.6,1020.6 1274.2,1017.9 1274.8,1014.2 1275.2,1010.7 1275.4,1007.4 1275.7,1004.2 1275.8,1001.0 1276.0,997.9 1276.3,994.6 1275.0,994.5 1274.5,997.7 1274.1,1000.9 1273.7,1004.0 1273.2,1007.1 1272.7,1010.4 1272.1,1013.7 1271.4,1017.3 1270.9,1020.0 1270.3,1022.8 1269.6,1025.7 1268.9,1028.7 1268.2,1031.8 1267.4,1034.9 1266.6,1038.1 1265.7,1041.3 1264.8,1044.5 1263.9,1047.7 1262.9,1051.0 1261.9,1054.1 1260.9,1057.3 1259.9,1060.4 1259.0,1063.3 1258.0,1066.2 1256.9,1069.1 1255.9,1072.0 1254.8,1074.9 1253.7,1077.8 1252.6,1080.7 1251.5,1083.5 1250.3,1086.4 1249.1,1089.3 1247.9,1092.1 1246.6,1095.0 1245.4,1097.8 1244.1,1100.6 1242.7,1103.4 1241.4,1106.1 1240.0,1108.9 1238.5,1111.6 1237.0,1114.4 1235.5,1117.1 1234.0,1119.8 1232.4,1122.5 1230.8,1125.2 1229.2,1127.9 1227.6,1130.5 1226.0,1133.2 1224.5,1135.8 1222.9,1138.4 1221.3,1141.0 1219.8,1143.6 1218.1,1146.3 1216.4,1149.1 1214.8,1151.8 1213.1,1154.4 1211.5,1157.1 1209.8,1159.7 1208.1,1162.3 1206.5,1165.0 1204.8,1167.6 1203.2,1170.2 1201.7,1173.0 1200.3,1175.8 1198.8,1178.5ZM1324.4,1116.5 1321.1,1118.0 1318.0,1120.6 1316.9,1123.0 1316.1,1125.8 1315.5,1128.9 1315.0,1132.3 1314.6,1136.0 1314.2,1139.7 1313.9,1143.5 1313.5,1147.1 1313.2,1150.0 1312.9,1152.9 1312.7,1156.0 1312.4,1159.1 1312.2,1162.3 1312.0,1165.5 1311.8,1168.7 1311.7,1172.0 1311.6,1175.2 1311.5,1178.4 1311.5,1181.5 1311.5,1184.6 1311.5,1187.8 1311.6,1191.1 1311.7,1194.3 1311.8,1197.5 1312.0,1200.7 1312.2,1203.8 1312.4,1207.0 1312.6,1210.1 1312.9,1213.2 1313.2,1216.3 1313.5,1219.3 1313.9,1222.6 1314.3,1226.0 1314.7,1229.3 1315.2,1232.5 1315.7,1235.7 1316.3,1238.9 1316.8,1242.0 1317.3,1245.1 1317.8,1248.2 1318.4,1251.6 1319.0,1254.9 1319.7,1258.2 1320.5,1261.4 1321.2,1264.6 1322.0,1267.9 1322.7,1271.1 1323.6,1270.9 1323.1,1267.6 1322.6,1264.4 1322.1,1261.1 1321.6,1257.9 1321.1,1254.6 1320.5,1251.2 1319.9,1247.8 1319.4,1244.8 1318.9,1241.7 1318.3,1238.6 1317.8,1235.4 1317.3,1232.2 1316.8,1229.0 1316.4,1225.7 1316.0,1222.4 1315.6,1219.1 1315.3,1216.1 1315.0,1213.0 1314.7,1209.9 1314.5,1206.8 1314.3,1203.7 1314.1,1200.5 1313.9,1197.4 1313.8,1194.2 1313.7,1191.0 1313.6,1187.8 1313.6,1184.6 1313.6,1181.5 1313.6,1178.4 1313.7,1175.2 1313.8,1172.0 1313.9,1168.8 1314.1,1165.6 1314.3,1162.4 1314.5,1159.3 1314.7,1156.2 1315.0,1153.1 1315.3,1150.2 1315.6,1147.3 1316.0,1143.7 1316.3,1139.9 1316.6,1136.2 1317.0,1132.6 1317.5,1129.2 1318.1,1126.2 1318.9,1123.7 1319.7,1121.9 1322.1,1119.4 1324.9,1117.4ZM1403.4,857.6 1404.8,860.2 1406.1,862.8 1407.5,865.3 1409.1,867.8 1410.6,870.7 1411.7,873.1 1412.8,875.7 1413.9,878.4 1415.0,881.3 1416.1,884.4 1417.2,887.5 1418.3,890.7 1419.4,894.0 1420.4,897.2 1421.5,900.5 1422.5,903.4 1423.5,906.4 1424.4,909.4 1425.4,912.6 1426.4,915.7 1427.3,918.9 1428.3,922.1 1429.2,925.3 1430.2,928.5 1431.1,931.6 1432.0,934.6 1432.9,937.6 1433.8,940.5 1434.9,943.8 1435.9,947.1 1436.9,950.4 1437.9,953.6 1438.9,956.7 1439.9,959.8 1440.8,962.7 1441.7,965.6 1442.5,968.4 1443.5,971.6 1444.4,974.6 1445.2,977.5 1446.0,980.3 1446.8,983.3 1447.5,986.3 1448.1,989.2 1448.7,992.1 1449.3,995.1 1449.9,998.1 1450.4,1001.2 1450.9,1004.2 1451.3,1007.2 1451.7,1010.2 1451.9,1013.3 1452.1,1016.3 1452.2,1019.4 1452.2,1022.4 1452.2,1025.5 1452.2,1028.7 1452.2,1032.0 1452.1,1034.9 1451.9,1038.0 1451.8,1041.1 1451.6,1044.3 1451.4,1047.5 1451.1,1050.6 1450.9,1053.8 1450.7,1056.9 1450.5,1059.9 1450.2,1063.3 1450.0,1066.6 1449.7,1069.9 1449.5,1073.1 1449.2,1076.3 1448.9,1079.5 1448.7,1082.7 1448.4,1086.2 1448.2,1089.6 1448.0,1093.1 1447.8,1096.5 1447.5,1100.0 1447.3,1103.4 1448.7,1103.6 1449.2,1100.2 1449.7,1096.7 1450.3,1093.3 1450.8,1089.9 1451.3,1086.5 1451.7,1082.9 1452.0,1079.8 1452.3,1076.6 1452.6,1073.4 1452.8,1070.1 1453.1,1066.8 1453.3,1063.5 1453.5,1060.1 1453.8,1057.1 1454.0,1054.0 1454.2,1050.9 1454.5,1047.7 1454.7,1044.5 1454.9,1041.3 1455.0,1038.1 1455.2,1035.0 1455.2,1032.0 1455.3,1028.7 1455.3,1025.6 1455.3,1022.4 1455.3,1019.3 1455.2,1016.2 1455.0,1013.1 1454.7,1009.8 1454.4,1006.8 1454.0,1003.8 1453.5,1000.6 1453.0,997.5 1452.4,994.5 1451.8,991.4 1451.1,988.5 1450.5,985.7 1449.8,982.5 1449.0,979.5 1448.2,976.6 1447.3,973.7 1446.4,970.7 1445.5,967.6 1444.6,964.7 1443.8,961.8 1442.8,958.8 1441.9,955.8 1440.9,952.7 1439.9,949.5 1438.9,946.2 1437.8,942.9 1436.8,939.5 1435.9,936.7 1435.0,933.7 1434.1,930.7 1433.2,927.6 1432.2,924.4 1431.3,921.2 1430.3,918.0 1429.3,914.8 1428.4,911.6 1427.4,908.5 1426.4,905.4 1425.4,902.4 1424.5,899.5 1423.4,896.3 1422.3,893.0 1421.2,889.7 1420.1,886.5 1419.0,883.4 1417.9,880.3 1416.8,877.3 1415.7,874.5 1414.5,871.8 1413.4,869.3 1411.8,866.3 1410.1,863.6 1408.3,861.3 1406.5,859.1 1404.6,856.8ZM1448.0,1095.5 1449.5,1098.9 1451.0,1102.5 1452.3,1105.6 1453.7,1109.1 1454.9,1113.0 1455.6,1115.7 1456.2,1118.7 1456.8,1121.8 1457.3,1125.1 1457.9,1128.5 1458.4,1131.9 1458.9,1135.2 1459.3,1138.5 1459.8,1141.9 1460.2,1145.3 1460.6,1148.8 1461.0,1152.2 1461.4,1155.6 1461.8,1158.9 1462.1,1162.0 1462.5,1165.0 1462.9,1168.0 1463.3,1171.0 1463.7,1174.0 1464.0,1177.0 1464.4,1180.1 1464.6,1183.1 1464.9,1186.1 1465.1,1189.1 1465.3,1192.2 1465.4,1195.3 1465.6,1198.5 1465.7,1201.7 1465.9,1205.0 1465.9,1207.9 1466.0,1210.9 1466.0,1214.0 1466.0,1217.1 1466.1,1220.3 1466.1,1223.5 1466.0,1226.7 1466.0,1229.9 1466.1,1233.1 1466.4,1236.3 1466.7,1239.4 1467.7,1239.4 1468.0,1236.3 1468.3,1233.1 1468.3,1229.9 1468.3,1226.7 1468.4,1223.5 1468.4,1220.3 1468.3,1217.1 1468.3,1214.0 1468.3,1210.9 1468.2,1207.9 1468.1,1205.0 1468.0,1201.6 1467.9,1198.4 1467.7,1195.2 1467.6,1192.0 1467.4,1189.0 1467.1,1185.9 1466.9,1182.9 1466.6,1179.9 1466.3,1176.8 1466.0,1173.7 1465.6,1170.7 1465.2,1167.7 1464.8,1164.7 1464.4,1161.7 1464.0,1158.7 1463.6,1155.3 1463.3,1151.9 1462.9,1148.5 1462.5,1145.1 1462.1,1141.6 1461.6,1138.2 1461.1,1134.8 1460.6,1131.5 1460.1,1128.1 1459.6,1124.8 1459.0,1121.4 1458.4,1118.2 1457.8,1115.2 1457.1,1112.4 1455.8,1108.3 1454.5,1104.8 1453.0,1101.5 1451.0,1098.2 1449.0,1095.1Z" fill="#0a0a0a" stroke="#0a0a0a" stroke-width="0.5" stroke-linejoin="round"/>
<g fill="#161616">
<circle cx="227" cy="36.6" r="26.7"/>
<circle cx="325.8" cy="36.5" r="26.7"/>
<circle cx="424" cy="36.5" r="26.7"/>
<circle cx="522" cy="36.5" r="26.7"/>
</g>
<path d="M0 235H53A33 33 0 0 1 86 268V1080A33 33 0 0 1 53 1113H0Z" fill="#161616"/>
<rect x="9" y="245" width="67" height="288" rx="22" fill="#1a1a1a" stroke="#2c2c2c" stroke-width="1.3"/>
<rect x="9" y="654.5" width="67" height="288.5" rx="22" fill="#1a1a1a" stroke="#2c2c2c" stroke-width="1.3"/>
<rect x="15.2" y="477.5" width="54.6" height="30" rx="15" fill="#a8a8a8"/>
<rect x="15.2" y="661" width="54.6" height="31" rx="15.5" fill="#a8a8a8"/>
<rect x="25.2" y="575.2" width="34.7" height="34.7" rx="7" fill="none" stroke="#a0a0a0" stroke-width="3.7"/>
<!-- wrench -->
<g fill="#a3a3a3">
<path d="M214.6,48.9 L227.5,36.5" stroke="#a3a3a3" stroke-width="4.6" stroke-linecap="round"/>
<circle cx="232.9" cy="31.5" r="9.1"/>
<path d="M229.3,29.3 L234.2,21.2 L242,19 L246.5,27.5 L243.5,31 L235.2,34.6 Z" fill="#161616"/>
</g>
<!-- magic wand -->
<g fill="#a3a3a3">
<path d="M318,49.9 L328.3,38.9" stroke="#a3a3a3" stroke-width="4.8" stroke-linecap="round"/>
<path d="M331.2,35.9 L336.6,30.6" stroke="#a3a3a3" stroke-width="4.8" stroke-linecap="round"/>
<path d="M331.4,39.6 L334.5,36.6 L330.5,32.6 L327.4,35.6 Z" fill="#161616"/>
<path d="M319.9,23.1 Q320.6,29.4 326.6,30.2 Q320.6,31 319.9,37.4 Q319.2,31 313.1,30.2 Q319.2,29.4 319.9,23.1 Z"/>
<path d="M329.5,22.5 Q329.8,25.1 332.3,25.5 Q329.8,25.9 329.5,28.6 Q329.2,25.9 326.2,25.5 Q329.2,25.1 329.5,22.5 Z"/>
</g>
<!-- S selection -->
<g fill="#a3a3a3">
<path d="M419.4,28.4 C421,25.5 424,23.5 427,23.4 L434.9,23.4 A2.5,2.5 0 0 1 434.9,28.4 Z"/>
<path d="M418.8,30.9 L424.3,30.9 C425,33.5 427.8,37 427.9,40 L427.9,42.9 L422.4,42.9 C422,40 419,37.5 418.8,34 Z"/>
<path d="M413.2,45.1 L427.2,45.1 C425.5,48 422,50.2 418,50.2 L413.2,50.2 A2.55,2.55 0 0 1 413.2,45.1 Z"/>
</g>
<!-- arrow -->
<g fill="#a3a3a3">
<path d="M510.6,48.7 L521.5,37.5" stroke="#a3a3a3" stroke-width="4" stroke-linecap="round"/>
<path d="M535.2,23.7 L511,34.8 L520.1,36.1 L524.1,47.4 Z" stroke="#a3a3a3" stroke-width="0.8" stroke-linejoin="round"/>
</g>
<!-- brush -->
<g fill="#c9c9c9">
<path d="M1444.2,15.2 C1442.5,20 1433,29 1425.5,35.5 C1421,39.5 1417.5,42.5 1415.5,43.6 L1413.8,41.8 C1415,39.8 1418.5,36 1422.8,31.5 C1430,24 1439.5,16 1444.2,15.2 Z"/>
<path d="M1413.6,44.5 C1416.2,46.5 1415.5,51.5 1410.5,55 C1406,58 1399.5,58.6 1397.2,57.6 C1396.2,57 1396.8,56.2 1398.2,55.8 C1400.5,55 1401.5,53 1402.5,50.5 C1404,47 1408.5,42.5 1413.6,44.5 Z"/>
</g>
<!-- smudge -->
<g>
<path d="M1549,14.8 L1559.2,24.8 L1554.4,29.6 L1555,38 C1555,41 1554,43 1551.5,45.5 L1543,52.3 C1541,53.2 1539,52.8 1538.2,51 L1527.5,58.6 L1521.5,58.6 C1519.5,58.6 1518.2,56.5 1518.6,54.3 C1519,52.5 1520.5,50.5 1526,42.8 L1524,36.5 C1523.5,34 1523.8,31 1525,29.5 L1531.2,21.5 C1532.5,20 1534,19.7 1536,19.6 L1544,19.4 Z" fill="#c9c9c9"/>
<path d="M1547.6,39.4 L1537.6,50.4" stroke="#1a1a1a" stroke-width="1.8" stroke-linecap="round"/>
</g>
<!-- eraser -->
<g transform="translate(1657.75,36.9) rotate(-45)">
<path d="M-22,-9.5 L16,-9.5 Q22,-9.5 22,-3.5 L22,9.5 L-16,9.5 Q-22,9.5 -22,3.5 Z" fill="#0a7aff"/>
<rect x="-12.6" y="-11" width="1.7" height="22" fill="#1a1a1a"/>
</g>
<!-- layers -->
<rect x="1766" y="16.5" width="30.5" height="31" rx="5" fill="#c9c9c9"/>
<rect x="1754.8" y="25.2" width="33" height="33.5" rx="6" fill="#1a1a1a"/>
<rect x="1756.2" y="26.6" width="30.2" height="30.8" rx="5" fill="#c9c9c9"/>
<!-- color -->
<circle cx="1894.85" cy="36.94" r="24.8" fill="#000" stroke="#9c9c9c" stroke-width="2.4"/>
<!-- undo -->
<g fill="none" stroke="#a0a0a0" stroke-width="3.6" stroke-linecap="round">
<path d="M35.5,991.6 H48.2 A9.9,9.9 0 0 1 48.2,1011.4 H28.8"/>
</g>
<path d="M25.2,991.6 L37.2,983.6 L37.2,999.6 Z" fill="#a0a0a0" stroke="#a0a0a0" stroke-width="1.5" stroke-linejoin="round"/>
<!-- redo -->
<g fill="none" stroke="#363636" stroke-width="3.6" stroke-linecap="round">
<path d="M49,1062.7 H37.8 A9.9,9.9 0 0 0 37.8,1082.5 H56.7"/>
</g>
<path d="M59.6,1062.7 L47.6,1054.7 L47.6,1070.7 Z" fill="#363636" stroke="#363636" stroke-width="1.5" stroke-linejoin="round"/>

</svg>
<div class="t">Gallery</div>
</body></html>
